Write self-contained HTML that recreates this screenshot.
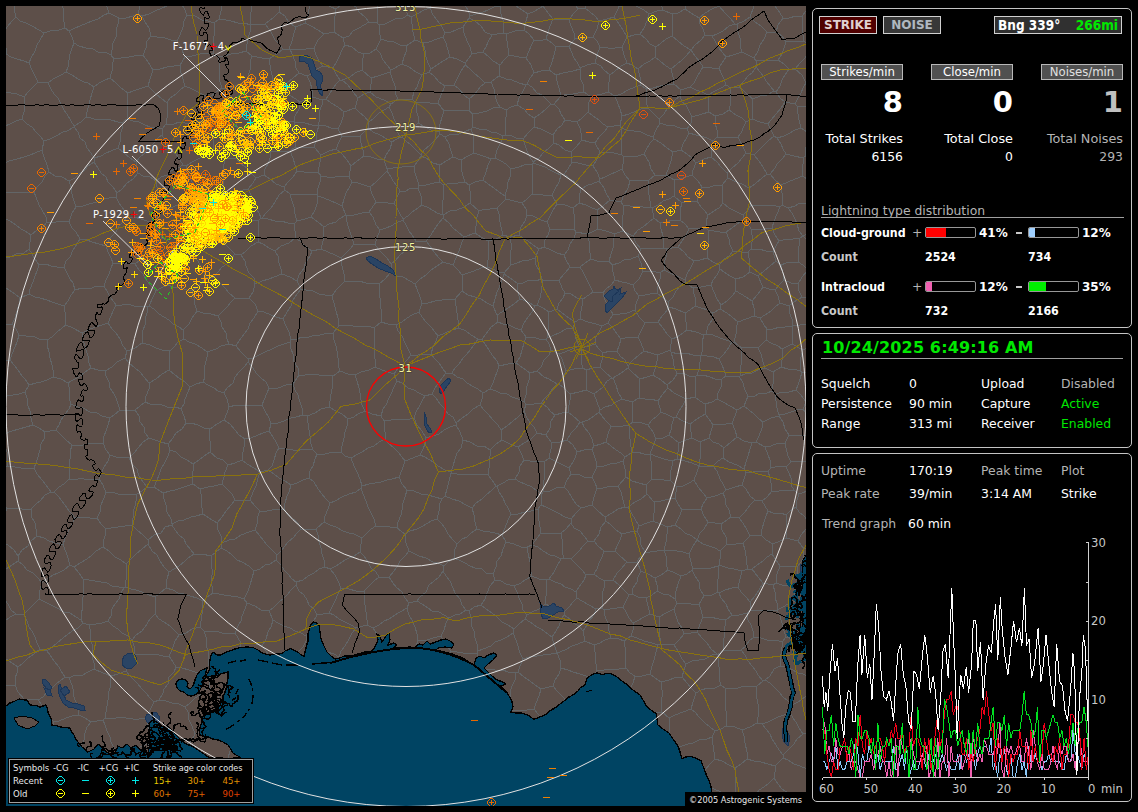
<!DOCTYPE html>
<html><head><meta charset="utf-8"><title>Lightning</title><style>
html,body{margin:0;padding:0;background:#000;}
body{width:1138px;height:812px;position:relative;overflow:hidden;font-family:"DejaVu Sans","Liberation Sans",sans-serif;color:#fff;font-size:12.4px;}
#map{position:absolute;left:6px;top:6px;width:800px;height:800px;}
.cl{font-family:"DejaVu Sans","Liberation Sans",sans-serif;font-size:10px;fill:#fff;letter-spacing:.25px;}
.rl{font-family:"DejaVu Sans","Liberation Sans",sans-serif;font-size:10px;fill:#f4f4a0;letter-spacing:.6px;paint-order:stroke;stroke:#4a3f3a;stroke-width:1.5px;}
.lg{font-family:"DejaVu Sans Condensed","DejaVu Sans","Liberation Sans",sans-serif;font-size:9.5px;fill:#e8e8e8;}
.panel{position:absolute;left:812px;width:318px;border:1px solid #c4c4c4;border-radius:5px;box-sizing:content-box;}
.t{position:absolute;white-space:nowrap;line-height:16px;height:16px;}
.g{color:#b4b4b4;}
.gr{color:#00e800;}
.b{font-weight:bold;font-family:"DejaVu Sans Condensed","DejaVu Sans","Liberation Sans",sans-serif;font-size:12.3px;}
.bb{font-weight:bold;font-family:"DejaVu Sans","Liberation Sans",sans-serif;}
.r{text-align:right;}
.btn{position:absolute;box-sizing:border-box;border:1px solid #a8a8a8;text-align:center;white-space:nowrap;}
.bar{position:absolute;box-sizing:border-box;border:1px solid #989898;border-radius:2px;overflow:hidden;height:11px;width:51px;background:#000;}
.bar i{position:absolute;left:0;top:0;bottom:0;display:block;}
.hr{position:absolute;height:1px;background:#a0a0a0;}
#gsvg{position:absolute;left:0;top:0;width:1138px;height:812px;pointer-events:none;}
#gsvg polyline{fill:none;stroke-width:1;}
#gsvg text{font-family:"DejaVu Sans","Liberation Sans",sans-serif;font-size:11.6px;fill:#c8c8c8;}
</style></head><body>
<svg id="map" viewBox="6 6 800 800" shape-rendering="crispEdges">
<clipPath id="mc"><rect x="6" y="6" width="800" height="800"/></clipPath>
<g clip-path="url(#mc)">
<rect x="6" y="6" width="800" height="800" fill="#5d4f49"/>
<path d="M833,435 827,436 818,438 811,439 M811,439 812,447 813,453 812,460 M637,531 640,537 641,545 645,552 M637,531 630,532 622,534 M645,552 640,557 637,562 M627,562 637,562 M627,562 620,556 615,551 M622,534 620,540 617,546 615,551 M339,326 345,325 353,326 360,326 368,326 374,328 M339,326 333,333 M340,371 338,365 338,358 337,351 336,346 334,340 333,333 M340,371 348,374 355,375 M355,375 361,372 369,370 375,367 M375,367 375,359 374,354 375,346 374,341 374,334 374,328 M31,235 30,242 29,249 M31,235 25,231 21,229 16,225 10,221 4,218 M29,249 24,253 16,254 10,257 5,258 -2,261 M4,218 -2,222 -6,225 -12,230 -17,232 M29,294 30,289 33,282 35,276 37,271 39,265 M29,294 35,297 40,298 47,300 52,302 58,304 64,306 M39,265 46,264 51,266 57,267 64,267 M64,267 67,273 70,279 73,283 75,290 M64,306 68,301 71,295 75,290 M20,298 15,294 9,290 2,285 -2,280 -8,276 M20,298 29,294 M29,249 32,254 35,259 39,265 M414,418 416,412 419,407 422,401 425,396 M414,418 406,420 400,419 391,420 384,421 M384,421 381,416 M381,416 383,409 386,405 389,398 391,394 394,387 397,381 M425,396 419,393 414,390 408,388 402,383 397,381 M426,438 422,431 417,425 414,418 M426,438 433,436 439,434 444,430 450,427 456,425 M456,425 456,423 M432,394 436,398 440,404 444,408 448,414 453,417 456,423 M432,394 425,396 M355,375 357,381 359,388 360,393 361,400 362,405 365,411 M375,367 382,370 388,372 394,374 M394,374 397,381 M365,411 372,414 381,416 M104,286 96,286 90,289 82,288 75,290 M104,286 108,293 111,298 116,305 M116,305 113,311 111,316 108,323 M108,323 102,325 95,327 88,330 82,333 M64,306 65,312 65,319 66,325 M66,325 73,328 82,333 M340,371 333,376 M333,333 328,333 320,335 315,335 309,337 302,337 297,339 291,339 M299,375 305,375 313,374 319,375 326,375 333,376 M299,375 298,368 294,362 293,354 291,349 290,342 M290,342 291,339 M-21,29 -16,30 -10,31 -3,32 3,33 M-16,-4 -10,-4 -4,-2 2,0 7,1 14,1 M14,1 14,9 16,17 M16,17 12,21 7,27 3,33 M14,1 17,-4 22,-9 M31,235 37,230 43,227 47,222 M47,222 46,217 42,210 39,205 36,197 34,192 M4,218 4,212 4,204 4,198 5,192 M34,192 26,192 19,193 12,192 5,192 M5,192 1,187 -4,182 M218,816 214,813 208,808 203,803 199,800 195,797 190,792 M229,816 228,809 228,803 229,798 230,792 229,785 229,779 M229,779 224,773 220,769 M220,769 214,774 209,777 206,780 201,785 195,789 190,792 M174,818 176,811 177,805 178,799 179,792 M190,792 179,792 M514,629 513,633 M514,629 508,625 502,622 497,617 492,613 486,609 481,605 M478,651 483,649 491,646 495,642 501,640 507,637 513,633 M478,651 477,644 475,638 474,631 471,625 471,617 469,611 M481,605 474,607 469,611 M532,576 525,580 521,583 514,586 M532,576 530,568 530,562 528,553 527,547 M514,586 506,584 501,581 495,580 M493,574 495,580 M493,574 496,567 497,561 501,556 503,549 506,542 M527,547 521,547 514,544 506,542 M596,609 602,608 M596,609 589,605 582,601 577,598 M602,608 603,602 602,595 604,588 605,581 M577,598 576,592 M576,592 579,587 584,580 586,575 M605,581 599,578 594,574 M594,574 586,575 M627,562 621,569 617,573 613,580 M613,580 605,581 M604,551 615,551 M604,551 602,557 599,563 597,569 594,574 M678,771 684,775 688,782 M678,771 672,772 666,772 661,774 653,773 648,774 642,776 M642,776 638,781 M638,781 639,788 643,794 644,799 645,806 M669,814 664,812 657,810 652,807 645,806 M669,814 675,810 681,809 M681,809 682,801 684,796 686,788 688,782 M792,799 789,807 787,812 785,819 M792,799 788,793 782,789 778,784 774,778 M751,799 755,803 758,808 761,813 766,819 769,823 M751,799 755,796 759,790 764,787 769,783 774,778 M827,816 824,810 819,804 815,799 811,793 M811,793 805,795 799,796 792,799 M681,150 687,154 692,158 696,163 M681,150 683,144 686,139 689,133 M689,133 696,135 701,136 707,138 713,141 M696,163 704,159 711,157 M713,141 711,149 711,157 M692,175 693,170 696,163 M692,175 698,181 702,187 M702,187 710,187 716,185 722,185 M722,185 728,178 M728,178 727,173 M727,173 721,167 717,162 711,157 M811,439 808,435 M808,435 810,428 811,420 M811,420 817,418 823,416 829,415 835,414 M814,678 808,677 803,674 798,673 791,669 786,667 780,666 M822,649 816,647 811,646 804,643 798,640 792,639 787,637 M780,666 780,659 781,654 782,647 782,642 M782,642 786,637 M787,637 786,637 M817,690 810,694 805,697 798,702 792,705 M792,705 788,701 783,697 779,692 774,687 770,683 765,680 M765,680 770,676 774,669 780,666 M811,612 816,616 821,621 827,625 M811,612 806,618 801,623 797,627 792,633 787,637 M815,463 813,470 812,476 810,483 810,490 M831,499 824,496 816,493 810,490 M808,435 801,435 796,436 789,435 M789,435 785,443 M812,460 805,462 798,461 791,462 M785,443 786,448 788,456 791,462 M772,491 771,483 770,478 768,471 M772,491 779,491 787,490 794,490 M794,490 791,485 791,478 789,473 786,467 M786,467 779,466 771,468 M768,471 771,468 M810,490 799,494 M799,494 794,490 M791,462 786,467 M785,443 778,443 771,446 765,447 M765,447 768,455 770,460 771,468 M655,578 661,575 668,570 M655,578 648,574 641,571 M645,552 650,552 657,551 664,550 M641,571 637,562 M668,570 666,564 666,556 664,550 M604,610 602,608 M604,610 610,609 617,608 623,607 M613,580 619,585 623,589 629,595 M623,607 626,601 629,595 M641,571 638,577 637,582 633,588 632,594 M632,594 629,595 M611,638 605,640 600,643 594,645 M611,638 619,639 624,641 M594,645 595,652 595,658 596,664 597,671 M597,671 604,670 612,669 619,669 626,668 M624,641 625,647 626,654 625,661 626,668 M611,638 609,631 608,624 605,616 604,610 M633,623 629,618 626,612 623,607 M633,623 633,630 631,636 M624,641 631,636 M750,610 756,610 762,610 770,611 777,610 M750,610 747,613 M782,642 776,640 767,640 761,638 754,637 M786,637 784,631 782,623 780,616 777,610 M754,637 753,631 751,625 748,620 747,613 M777,610 777,610 M756,442 765,447 M756,442 752,443 M746,473 744,469 M746,473 753,472 761,471 768,471 M752,443 750,449 748,456 746,462 744,469 M622,534 616,530 611,525 606,521 M604,551 598,546 594,541 M594,541 599,534 601,527 606,521 M394,374 398,368 403,364 407,360 411,355 M374,328 381,322 M381,322 388,324 396,325 M411,355 408,349 405,343 402,336 398,331 396,325 M782,349 778,346 771,343 766,340 M782,349 792,344 M766,340 767,329 M792,344 793,335 792,326 M792,326 785,327 780,327 773,329 767,329 M593,292 583,299 M593,292 590,286 587,280 583,272 580,267 M559,280 565,273 570,267 M559,280 562,288 565,293 M565,293 571,294 577,298 583,299 M580,267 570,267 M147,306 147,313 145,319 145,325 143,330 142,336 142,343 M147,306 141,306 134,306 128,304 122,305 116,305 M108,323 112,329 116,333 120,339 123,346 127,351 M142,343 135,348 127,351 M184,339 183,330 M184,339 178,342 174,347 170,351 M147,306 149,306 M149,306 154,309 159,314 164,317 169,320 173,324 179,327 183,330 M142,343 150,345 156,348 162,350 170,351 M82,333 83,340 85,346 86,350 88,356 89,363 91,368 M105,371 98,370 91,368 M105,371 112,367 117,362 125,358 M125,358 127,351 M333,376 332,381 332,389 331,394 330,401 329,407 M365,411 358,414 354,417 348,419 M348,419 342,414 336,411 329,407 M299,375 293,384 M293,384 295,390 298,395 300,402 302,408 303,415 M303,415 307,416 M329,407 321,409 315,413 307,416 M348,419 347,426 345,432 344,438 342,446 341,452 M307,416 308,423 309,430 310,436 311,444 313,450 M341,452 333,452 325,454 317,454 M317,454 313,450 M106,493 103,485 99,479 M106,493 103,500 101,505 100,512 97,518 M99,479 92,479 87,480 81,478 75,480 69,479 M97,518 90,518 82,517 75,518 M75,518 70,512 67,508 62,501 59,497 54,492 M69,479 64,484 59,487 54,492 M129,458 132,464 137,469 139,476 143,482 147,487 M129,458 122,457 116,457 110,455 M110,455 108,461 104,467 101,474 99,479 M147,487 142,491 137,494 M137,494 132,494 124,494 118,494 112,492 106,493 M105,528 111,528 118,527 125,526 132,525 M105,528 101,524 97,518 M137,494 136,501 135,506 133,512 133,518 132,525 M-21,689 -14,688 -6,687 1,687 8,685 15,685 M15,685 18,692 24,699 M-15,718 -8,720 -4,724 3,727 8,729 M24,699 22,705 18,711 15,717 12,723 8,729 M20,298 19,304 17,311 15,318 12,324 M-15,324 -8,323 -1,324 7,325 12,324 M71,404 78,407 83,408 90,412 97,413 102,416 110,418 M71,404 69,409 65,414 61,420 59,425 56,430 M56,430 62,436 66,440 72,445 M72,445 79,445 83,445 91,443 97,443 103,443 M103,443 104,436 106,431 108,425 110,418 M120,410 118,404 116,398 114,394 110,388 109,382 106,376 105,371 M120,410 114,415 110,418 M68,383 73,380 79,377 85,372 91,368 M68,383 70,390 69,398 71,404 M110,455 106,450 103,443 M69,479 70,472 69,466 70,459 70,452 72,445 M135,410 139,416 140,422 144,427 145,433 149,438 M135,410 128,410 120,410 M149,438 143,442 138,448 134,453 129,458 M295,801 295,808 295,814 295,821 M295,801 289,798 286,794 281,789 276,786 270,781 266,778 M271,826 265,822 259,817 253,812 M253,812 255,805 258,799 260,791 263,784 266,778 M229,816 235,815 241,813 247,814 253,812 M229,779 236,778 243,778 252,778 258,778 265,778 M265,778 266,778 M135,654 141,655 150,654 155,654 163,656 169,656 M135,654 134,646 132,640 M132,640 136,635 142,631 147,624 150,619 155,614 M155,614 159,619 164,622 170,626 175,631 179,635 M179,635 175,641 172,650 169,656 M231,666 224,668 218,671 211,672 M231,666 237,671 243,674 250,678 256,681 M256,681 253,687 248,694 246,702 M246,702 238,703 231,703 222,703 M211,672 209,675 M209,675 209,687 M222,703 218,696 213,691 209,687 M330,503 328,509 325,516 324,522 M330,503 325,498 322,494 318,489 314,482 309,478 M309,478 303,480 297,483 291,485 M291,485 289,492 287,496 285,503 284,509 M301,529 298,523 292,518 288,515 284,509 M301,529 308,530 316,529 M316,529 324,522 M362,538 354,534 349,533 343,531 336,527 330,525 324,522 M362,538 361,544 360,552 M360,552 354,556 347,559 342,562 336,566 330,569 M316,529 318,535 319,542 321,548 322,554 324,560 325,567 M325,567 330,569 M384,421 384,427 385,432 385,439 M341,452 345,456 351,458 M385,439 379,442 374,446 368,448 362,452 358,454 351,458 M426,438 425,444 423,449 420,455 M420,455 413,458 405,461 M385,439 389,444 393,447 398,452 402,457 405,461 M547,580 546,588 546,596 545,604 M547,580 549,579 M549,579 555,582 561,584 565,587 571,589 576,592 M577,598 573,602 569,607 564,612 M564,612 557,610 550,606 545,604 M547,580 539,579 532,576 M514,586 517,592 519,598 522,604 523,610 527,615 M545,604 539,609 532,612 527,615 M514,629 519,624 525,619 M495,580 490,586 487,593 485,599 481,605 M527,615 525,619 M446,785 441,782 435,777 430,773 425,768 M446,785 445,791 443,797 441,804 439,811 M425,768 423,773 420,779 416,785 414,790 411,795 408,800 M439,811 434,810 427,810 421,812 415,811 M415,811 409,806 M409,806 408,800 M409,867 409,861 410,855 412,848 411,842 413,835 413,830 413,823 414,818 415,811 M378,817 384,815 391,813 397,810 402,809 409,806 M439,811 444,815 449,819 455,825 M583,631 585,641 M583,631 579,626 573,623 570,619 564,615 M585,641 578,644 572,646 565,650 557,653 M564,615 561,620 559,626 556,631 552,637 M557,653 554,644 552,637 M596,609 594,615 589,621 587,625 583,631 M594,645 585,641 M564,612 564,615 M525,619 530,622 537,627 541,629 548,634 552,637 M523,659 520,653 518,646 516,640 513,633 M523,659 529,657 537,656 543,655 551,654 557,653 M557,653 557,653 M179,792 174,786 M174,786 166,785 161,783 153,782 M153,782 148,784 M148,784 146,791 143,796 140,801 137,806 134,812 M75,836 77,829 82,824 84,817 87,811 92,806 95,800 M116,816 112,811 105,808 100,804 95,800 M39,819 43,813 44,807 47,800 50,795 53,788 M53,788 53,788 M53,788 59,789 68,792 73,791 80,795 86,795 94,797 M94,797 95,800 M678,771 678,764 676,759 676,753 676,747 M676,747 669,739 M642,776 642,769 641,761 642,754 641,748 M641,748 647,745 654,744 663,742 669,739 M628,695 621,697 614,700 609,703 602,705 M628,695 630,689 633,683 635,676 M597,671 592,679 M602,705 598,700 593,694 M635,676 630,673 626,668 M592,679 593,686 593,694 M557,653 560,660 561,668 M592,679 586,676 580,674 573,672 568,670 561,668 M715,759 710,764 705,770 701,775 696,780 M715,759 722,761 729,765 735,768 M696,780 701,784 708,786 714,789 721,792 727,795 733,798 M735,768 735,775 736,783 735,791 736,797 M736,797 733,798 M712,737 707,739 699,740 693,743 688,744 682,746 676,747 M712,737 713,745 714,752 715,759 M688,782 696,780 M726,726 735,727 742,730 M726,726 721,729 715,731 M715,731 712,737 M742,730 744,736 745,743 747,752 747,759 M747,759 741,764 735,768 M722,820 725,815 728,809 730,803 733,798 M702,824 697,819 691,816 685,813 681,809 M751,799 743,798 736,797 M774,778 775,772 775,766 M747,759 754,761 761,762 768,764 775,766 M689,133 687,129 M713,141 717,137 M709,112 702,114 692,117 M709,112 715,116 M717,137 717,130 715,123 715,116 M687,129 691,123 692,117 M622,231 623,226 622,219 624,211 623,205 M622,231 633,236 M633,236 638,230 643,227 649,222 654,218 M623,205 630,206 638,206 643,207 650,207 M650,207 652,208 M654,218 652,208 M697,201 688,201 682,203 M697,201 699,193 702,187 M692,175 686,177 680,179 674,180 M674,180 675,188 674,196 M682,203 674,196 M339,326 338,318 336,311 334,303 332,296 M291,339 289,332 286,326 283,319 M332,296 325,295 319,294 313,291 306,290 301,289 M301,289 297,294 293,300 291,306 287,312 283,319 M248,359 241,352 236,346 M248,359 253,358 259,355 265,352 272,349 278,346 284,344 290,342 M236,346 239,341 244,334 248,329 250,323 254,318 258,311 M283,319 276,317 271,315 264,312 258,311 M381,322 382,315 381,309 380,303 380,298 379,289 379,284 M332,296 336,290 340,286 345,281 M345,281 351,282 359,281 366,283 372,283 379,284 M34,192 37,187 42,182 45,176 49,172 M-3,167 3,164 9,161 17,159 24,157 30,155 35,153 42,150 M49,172 47,165 44,157 42,150 M740,376 740,369 742,361 741,355 742,348 M740,376 745,374 752,373 758,370 765,368 M765,368 763,362 761,354 758,348 M742,348 750,347 758,348 M792,344 803,350 M803,350 810,346 817,343 M793,325 792,326 M793,325 800,325 807,324 813,325 M756,442 759,436 762,428 763,422 M789,435 785,429 783,422 779,416 M779,416 771,418 763,422 M811,420 807,415 803,409 M803,409 797,410 791,412 785,414 779,415 M779,416 779,415 M796,390 789,392 783,392 775,394 M796,390 798,385 800,379 802,372 M800,371 802,372 M800,371 794,369 788,369 781,367 M781,367 773,372 M773,372 773,379 773,384 772,391 M772,391 775,394 M803,409 806,402 M806,402 801,395 796,390 M779,415 777,408 776,401 775,394 M782,349 782,356 782,360 781,367 M803,350 801,357 800,363 800,371 M766,340 758,348 M765,368 773,372 M806,402 812,399 817,397 822,394 M802,372 810,373 818,374 M824,574 818,571 813,567 808,563 803,559 M803,559 804,549 M819,546 813,547 804,549 M633,623 639,620 644,617 650,614 M632,594 638,597 646,598 M650,614 648,606 646,598 M655,578 657,585 657,591 M657,591 652,595 646,598 M641,748 633,741 627,737 M627,737 630,731 635,726 640,719 643,713 M643,713 649,713 655,713 662,712 M669,739 670,733 669,725 669,718 M662,712 669,718 M715,731 710,727 705,723 699,717 696,713 691,709 M669,718 675,715 683,712 691,709 M765,680 763,681 M754,637 749,641 745,647 741,650 M741,650 745,655 748,661 752,666 756,671 758,675 763,681 M726,726 726,720 727,714 725,708 726,702 725,696 726,689 M742,730 750,727 757,723 M757,723 758,717 758,711 758,704 757,699 756,693 757,686 M757,686 751,687 744,686 738,688 732,688 726,689 M691,709 693,702 696,693 M696,693 701,690 708,688 715,688 721,685 M726,689 721,685 M668,570 675,573 681,576 M664,550 664,550 M664,550 671,550 677,551 683,552 689,554 M689,554 691,562 693,569 M693,569 692,570 M681,576 687,574 692,570 M657,591 663,594 669,595 675,599 M681,576 678,584 676,591 675,599 M738,587 740,579 742,571 M738,587 732,588 725,590 719,593 M718,566 719,565 M718,566 718,572 718,579 717,585 718,592 M742,571 734,569 728,568 719,565 M719,593 718,592 M750,610 750,602 M750,602 747,598 741,592 738,587 M747,613 739,615 732,615 M719,593 721,598 726,604 728,609 732,615 M718,566 711,568 706,568 699,568 693,569 M692,570 695,576 699,582 700,589 704,596 M718,592 712,595 704,596 M675,599 677,603 M677,603 685,603 691,604 699,604 M704,596 699,604 M631,636 637,638 644,641 652,643 658,645 M635,676 642,676 650,674 M658,645 656,652 654,660 652,666 650,674 M662,712 661,704 662,697 662,690 661,682 M696,693 691,688 687,683 682,677 M682,677 674,678 669,680 661,682 M628,695 633,701 637,708 643,713 M650,674 655,678 661,682 M811,612 811,610 M777,610 783,607 788,604 795,601 M795,601 801,605 805,607 811,610 M811,610 814,604 819,598 M803,559 798,566 M816,586 810,585 804,583 798,583 M798,566 797,574 798,583 M795,601 794,593 795,587 M798,583 795,587 M637,531 639,526 M664,550 666,542 667,534 668,527 M639,526 647,523 653,521 M653,521 660,524 668,527 M586,575 582,570 577,565 571,559 M594,541 588,541 M588,541 583,546 580,550 575,555 571,559 M396,325 402,322 407,318 412,315 419,312 M415,284 417,289 420,297 422,303 M415,284 410,281 403,277 396,276 391,272 M379,284 385,279 391,272 M419,312 422,303 M697,201 701,207 704,210 708,215 M722,185 723,192 722,197 723,203 M723,203 719,208 714,211 708,215 M767,329 764,325 760,318 M734,342 736,334 736,328 738,322 M734,342 742,348 M760,318 754,316 M738,322 746,319 754,316 M736,291 732,296 727,301 721,305 M736,291 741,294 746,297 752,301 M738,322 732,317 727,313 720,309 M754,316 754,308 752,301 M721,305 720,309 M829,289 824,285 820,279 815,274 811,270 M814,300 807,298 802,297 M811,270 808,270 M808,270 802,277 798,284 M802,297 799,291 798,284 M793,325 792,319 789,312 789,306 M802,297 794,302 789,306 M760,318 765,315 771,311 775,307 780,303 M789,306 780,303 M781,185 782,193 782,199 782,205 M781,185 775,180 770,174 M770,174 767,174 M767,174 762,178 755,184 749,188 M749,188 749,196 751,205 M751,205 759,205 765,205 772,205 780,207 M782,205 780,207 M728,178 734,181 742,184 749,188 M723,203 729,208 737,212 743,215 M743,215 748,210 751,205 M573,328 566,329 559,333 554,335 547,338 M573,328 575,322 M575,322 569,318 562,313 557,309 M547,338 548,330 548,324 548,317 549,312 M557,309 549,312 M580,319 581,311 582,306 583,299 M580,319 575,322 M565,293 563,298 559,303 557,309 M559,280 551,280 543,280 M543,280 542,286 541,293 540,298 537,305 M537,305 543,308 549,312 M740,376 739,376 M772,391 767,393 760,393 755,396 748,396 M739,376 743,383 745,390 748,396 M763,422 759,419 754,414 749,410 744,406 M748,396 744,406 M594,394 597,402 600,410 M594,394 598,391 603,387 607,381 612,378 M600,410 605,407 612,405 616,402 622,399 M622,399 618,392 616,385 613,378 M613,378 612,378 M504,274 510,278 517,283 M504,274 502,280 499,288 497,292 495,299 493,306 M517,283 518,292 520,299 M520,299 514,304 508,308 502,312 497,315 M497,315 493,306 M535,258 536,265 540,272 542,279 M535,258 529,260 522,261 517,263 511,265 M511,265 504,273 M504,273 504,274 M542,279 535,281 529,280 523,283 517,283 M462,291 462,283 462,275 M462,291 468,295 475,297 481,299 487,303 493,306 M462,275 468,273 474,271 481,268 487,267 M487,267 493,269 498,272 504,273 M543,280 542,279 M535,306 537,305 M535,306 528,302 520,299 M546,339 547,338 M546,339 549,344 551,350 M551,350 559,354 M573,328 575,334 576,339 579,346 M559,354 565,352 572,349 579,346 M135,410 140,406 145,402 M125,358 129,363 135,368 140,372 144,377 149,383 M145,402 146,396 149,389 149,383 M170,351 169,358 169,364 169,370 M149,383 156,379 162,374 169,370 M47,222 56,222 62,221 69,222 M64,267 66,261 70,257 73,250 77,244 80,239 M69,222 72,228 76,232 80,239 M293,384 286,385 278,388 269,388 M248,359 248,362 M269,388 266,382 261,378 256,373 253,368 248,362 M309,478 310,471 313,466 315,459 317,454 M313,450 306,449 300,450 293,450 286,449 279,448 M291,485 285,481 279,478 274,474 268,470 M279,448 276,453 274,460 272,466 268,470 M446,373 452,373 M446,373 443,369 439,363 435,359 431,354 M452,373 455,368 459,364 463,358 466,355 471,349 474,345 478,339 M431,354 433,347 435,343 438,336 M438,336 445,333 452,330 459,328 M478,339 471,335 466,331 459,328 M432,394 435,388 438,384 442,378 446,373 M480,405 473,409 468,414 462,418 456,423 M480,405 482,399 483,393 M483,393 478,389 474,387 467,383 463,379 457,377 452,373 M411,355 418,355 424,354 431,354 M419,312 422,317 426,322 431,327 435,332 438,336 M455,299 448,299 442,300 435,301 428,303 422,303 M455,299 456,306 457,313 458,320 459,328 M462,291 455,299 M497,315 498,322 M478,339 482,339 M498,322 491,327 486,334 482,339 M535,306 532,312 528,317 524,323 521,330 M498,322 503,324 509,325 515,328 521,330 M546,339 539,339 533,337 526,337 M521,330 526,337 M15,685 15,678 17,673 18,667 M18,667 12,663 6,659 0,656 -5,652 -9,649 -16,645 M105,528 106,534 103,541 103,547 M103,547 96,551 91,556 87,559 80,563 74,567 M74,567 70,565 M75,518 72,524 68,532 65,538 63,545 M63,545 66,552 68,558 70,565 M125,587 124,588 M125,587 131,589 136,590 142,592 149,595 155,597 M132,640 128,636 122,633 118,629 113,626 108,621 M155,597 155,605 155,614 M108,621 111,616 112,609 115,604 119,599 121,593 124,588 M126,564 121,560 115,557 109,551 103,547 M126,564 126,572 126,580 125,587 M74,567 79,573 83,579 M124,588 119,587 112,586 107,583 101,582 95,581 89,580 83,579 M25,392 19,394 13,395 7,396 0,398 -5,401 -12,401 M25,392 27,398 28,406 30,411 31,418 33,425 M33,425 26,427 19,429 12,431 4,434 M-9,427 -2,430 4,434 M45,432 44,439 41,444 40,450 38,457 36,463 34,468 M45,432 56,430 M54,492 51,492 M51,492 46,485 42,480 37,474 34,468 M45,432 39,428 33,425 M4,434 5,440 5,447 7,452 7,460 8,466 M34,468 26,468 21,468 15,467 8,466 M8,466 2,469 -2,475 -8,479 M28,743 24,740 18,736 13,733 8,730 M28,743 27,750 27,754 26,762 25,767 24,774 M8,730 6,734 1,739 -1,745 -5,749 -9,756 -12,760 M24,774 16,777 11,779 5,780 -2,783 M8,729 8,730 M53,788 48,786 40,783 35,780 30,777 24,774 M6,813 5,807 3,801 1,794 -1,789 -2,783 M135,654 133,660 129,665 126,671 M94,669 103,673 111,676 M94,669 94,663 92,657 93,650 92,644 90,639 91,632 89,625 M89,625 96,624 102,623 108,621 M126,671 118,674 111,676 M47,340 47,345 49,352 50,358 52,365 53,370 53,377 M47,340 39,339 33,336 26,336 19,335 M19,335 17,342 15,347 12,354 10,360 M10,360 14,365 18,370 22,376 25,379 29,385 M29,385 36,383 41,382 47,380 53,377 M66,325 62,328 57,332 52,337 47,340 M68,383 61,379 53,377 M12,324 16,329 19,335 M-14,367 -8,366 -2,364 3,361 10,360 M25,392 29,385 M337,813 338,805 339,798 M295,801 299,796 305,792 308,787 313,781 M339,798 335,796 328,791 324,788 318,785 313,781 M174,786 175,779 178,775 180,769 182,763 184,757 186,750 187,744 M148,744 149,751 150,757 150,763 151,770 153,775 153,782 M148,744 152,737 M187,744 181,744 175,741 170,740 165,739 158,739 152,737 M209,675 202,674 195,672 189,670 182,668 176,667 M176,667 174,672 169,677 168,684 164,689 163,693 159,700 M209,687 204,691 200,695 195,698 190,703 185,707 M185,707 179,704 172,703 166,701 159,700 M126,671 130,676 134,680 137,683 142,689 147,694 149,697 154,702 M111,676 110,681 110,688 108,695 108,700 107,706 106,712 105,718 M105,718 112,719 120,717 126,718 133,719 139,719 147,718 M147,718 150,710 154,702 M176,667 173,662 169,656 M159,700 154,702 M169,572 174,569 179,566 185,561 188,558 194,554 M169,572 164,567 160,561 157,555 152,551 148,544 M194,554 191,550 186,544 184,539 179,535 175,530 172,525 M172,525 165,527 161,533 154,535 148,540 M148,544 148,540 M126,564 131,559 136,554 142,549 148,544 M166,588 167,579 169,572 M166,588 160,593 155,597 M147,487 154,487 M132,525 137,530 143,535 148,540 M172,524 172,525 M172,524 171,519 167,512 166,505 164,499 163,493 M163,493 154,487 M301,529 296,534 294,537 288,542 284,547 282,550 277,555 M277,555 271,549 267,545 263,540 260,536 255,530 M284,509 279,509 272,510 267,511 260,511 M255,530 257,524 257,518 260,511 M211,556 202,554 194,554 M211,556 216,552 221,548 M221,548 222,543 M203,514 209,518 217,523 M203,514 196,516 191,517 184,520 178,521 172,524 M217,523 218,530 221,536 222,543 M453,687 458,684 465,680 472,678 479,674 M453,687 448,682 445,675 440,670 M477,653 480,661 482,669 M477,653 470,653 463,653 457,652 451,651 M482,669 479,674 M440,670 444,664 448,658 451,651 M478,651 477,653 M466,610 469,611 M466,610 460,614 455,615 449,618 M449,618 446,623 444,630 441,636 M441,636 445,644 451,651 M356,697 365,697 372,695 380,696 M356,697 353,703 349,710 346,715 M346,715 351,719 357,725 362,729 366,733 372,738 M372,738 377,734 382,729 389,727 M380,696 382,701 384,709 385,714 388,721 389,727 M389,577 393,583 396,587 402,592 405,598 409,603 M389,577 394,571 397,567 400,561 406,555 409,551 M409,551 415,554 419,556 426,558 433,562 438,563 444,566 M417,601 409,603 M417,601 420,597 426,592 429,585 434,581 439,577 443,571 M443,571 444,566 M457,544 453,540 448,534 445,528 441,523 437,519 M457,544 454,552 454,558 M437,519 431,521 423,526 417,529 410,531 405,534 M405,534 406,543 409,551 M454,558 448,562 444,566 M449,618 444,615 439,612 432,611 428,608 422,604 417,601 M407,608 409,603 M407,608 409,615 412,620 415,627 417,634 418,641 M418,641 427,640 433,638 441,636 M466,610 462,605 460,599 455,593 453,588 450,581 446,576 443,571 M454,558 459,560 465,563 470,566 475,568 482,569 486,573 493,574 M231,666 234,661 236,655 239,650 241,643 M211,672 209,666 208,659 208,651 206,645 206,637 204,631 M241,643 235,633 M235,633 229,633 222,633 216,631 210,632 204,631 M179,635 186,633 192,629 200,627 M200,627 204,631 M166,588 173,590 178,593 184,594 190,596 197,598 203,601 M200,627 201,621 202,614 202,608 203,601 M211,556 211,562 212,569 212,575 211,580 212,586 213,593 M203,601 207,597 213,593 M269,611 261,610 255,606 247,603 M269,611 273,608 279,602 283,599 288,594 291,590 296,585 M254,571 260,569 265,565 270,564 276,560 M254,571 252,578 250,585 248,591 244,599 M244,599 247,603 M276,560 281,565 284,570 288,574 292,579 296,582 M296,582 296,585 M241,643 248,643 256,644 262,646 M262,646 266,639 268,632 271,627 273,620 M273,620 269,611 M235,633 238,626 241,621 242,616 245,609 247,603 M306,636 301,633 295,631 290,628 284,626 278,623 273,620 M306,636 310,630 313,622 317,615 M317,615 314,609 309,605 307,600 304,595 299,591 296,585 M221,548 227,551 232,555 237,560 242,562 249,566 254,571 M277,555 276,560 M255,530 249,532 241,535 235,539 229,540 222,543 M213,593 219,594 224,595 231,596 238,597 244,599 M325,567 319,569 314,573 308,576 303,580 296,582 M282,690 276,685 269,681 263,678 M282,690 288,687 296,684 303,680 M303,680 301,673 300,667 298,661 297,653 M297,653 291,655 283,654 277,655 270,657 M263,678 265,671 268,664 270,657 M256,681 263,678 M246,702 249,708 254,715 256,721 261,727 M261,727 268,725 275,722 282,721 M282,721 283,715 283,708 283,703 282,695 282,690 M307,639 303,647 297,653 M307,639 312,642 318,645 322,649 327,652 334,654 339,657 M317,687 310,684 303,680 M317,687 322,682 328,677 334,675 341,670 M339,657 341,668 M341,670 341,668 M306,636 307,639 M262,646 266,651 270,657 M364,591 364,599 365,605 366,612 367,620 367,625 M364,591 356,591 349,589 341,588 M341,588 338,594 335,601 332,607 329,613 M329,613 334,615 339,619 345,622 351,625 356,628 M356,628 367,625 M379,577 374,581 369,586 364,591 M379,577 389,577 M407,608 400,612 395,615 389,619 384,621 379,625 373,628 M373,628 367,625 M379,577 376,572 371,568 368,562 364,556 360,552 M330,569 335,575 338,581 341,588 M317,615 329,613 M339,657 341,651 345,646 348,641 352,633 356,628 M407,490 402,484 399,477 M407,490 405,497 403,503 402,510 401,515 398,522 397,528 M399,477 392,479 387,480 381,482 375,483 369,484 362,486 M397,528 390,527 382,526 376,526 M376,526 374,519 371,513 368,507 366,501 363,494 361,488 M361,488 362,486 M437,519 439,511 439,505 442,499 M405,534 397,528 M442,499 435,497 428,495 421,494 414,491 407,490 M405,461 402,470 399,477 M351,458 354,466 357,472 360,479 362,486 M362,538 366,534 371,529 376,526 M330,503 335,501 342,497 349,494 356,492 361,488 M457,544 462,539 467,537 471,533 477,529 M442,499 445,496 M445,496 452,499 459,501 466,505 472,508 M472,508 474,515 475,522 477,529 M506,542 502,535 M477,529 483,531 490,532 495,533 502,535 M465,780 458,781 453,783 446,785 M465,780 470,783 M476,815 475,808 474,803 472,796 470,789 470,783 M470,783 478,781 484,780 492,778 499,776 M499,776 507,783 M507,783 506,789 504,795 501,803 500,810 498,816 M634,816 639,811 645,806 M811,793 813,787 816,781 818,774 M775,766 783,758 M783,758 788,760 794,764 800,766 807,769 812,771 818,774 M790,712 784,715 778,717 774,719 768,722 762,724 M790,712 793,718 796,722 799,728 803,734 M762,724 766,729 770,734 772,739 776,745 779,750 783,755 M803,734 797,739 794,744 788,750 783,755 M792,705 790,712 M757,723 762,724 M763,681 757,686 M822,735 816,735 809,733 803,734 M783,758 783,755 M615,780 623,779 630,781 638,781 M615,780 612,774 611,768 607,762 606,757 603,751 M627,737 618,736 610,737 M603,751 607,744 610,737 M602,705 601,711 602,717 602,723 M610,737 606,730 602,723 M593,694 587,697 581,698 574,699 567,702 M561,668 559,674 555,680 553,686 M553,686 557,691 563,697 567,702 M602,723 596,724 591,724 584,725 577,726 571,728 566,729 559,729 M567,702 564,709 562,716 561,722 559,729 M576,761 572,755 569,749 565,742 561,737 558,730 M576,761 583,757 589,755 596,752 603,751 M559,729 558,730 M531,822 533,815 535,810 536,805 539,798 M507,783 514,783 521,782 529,781 M539,798 536,791 532,787 529,781 M655,175 666,175 M655,175 651,169 649,162 644,154 M666,175 669,167 671,161 673,152 M673,152 667,148 661,143 654,139 M654,139 650,143 646,150 644,154 M648,181 648,188 649,195 650,201 650,207 M648,181 655,175 M674,180 666,175 M652,208 658,205 663,201 669,199 674,196 M681,150 673,152 M687,129 680,128 672,125 666,125 660,123 M654,139 653,137 M653,137 656,130 660,123 M591,97 588,105 588,112 M591,97 597,95 602,94 608,92 M588,112 593,116 599,120 603,124 608,127 M608,127 620,125 M622,116 620,125 M622,116 620,109 618,104 615,96 M608,92 615,96 M654,218 660,223 M682,203 680,210 680,220 M660,223 666,222 673,220 680,220 M708,215 706,222 706,228 M706,228 699,228 689,229 M689,229 685,224 680,220 M727,173 731,169 738,163 742,158 746,153 M767,174 763,167 759,161 754,155 M746,153 754,155 M717,137 725,137 731,137 738,137 M746,153 743,147 741,143 738,137 M729,110 723,114 715,116 M729,110 736,115 742,118 746,122 M738,137 741,133 744,126 746,122 M824,129 815,132 807,132 M827,157 819,156 813,156 805,156 M807,132 806,141 806,147 805,156 M803,176 795,179 788,182 781,185 M803,176 802,171 803,164 803,158 M770,174 775,168 777,164 782,159 786,154 M786,154 794,156 803,158 M814,185 808,180 803,176 M803,158 805,156 M809,7 815,9 820,13 825,16 M809,7 808,0 M808,0 813,-7 817,-13 M824,81 816,83 806,83 M813,49 809,53 804,59 800,63 795,69 M806,83 802,75 795,69 M809,7 802,16 M813,49 804,41 M802,16 803,23 802,27 803,35 804,41 M778,60 784,64 789,69 M778,60 782,54 784,48 786,42 M789,69 795,69 M804,41 797,41 792,41 786,42 M808,0 801,-3 794,-6 789,-8 782,-12 M750,17 755,22 761,26 767,32 M750,17 754,6 M754,6 759,4 766,1 772,-1 M772,-1 775,6 780,13 783,18 M783,18 778,25 776,32 M767,32 776,32 M735,24 730,18 725,13 719,6 M735,24 737,24 M737,24 744,21 750,17 M744,-7 749,0 754,6 M719,6 719,-2 721,-9 M802,16 796,16 789,18 783,18 M786,42 782,36 776,32 M644,154 638,156 631,156 624,157 M621,128 627,130 634,131 641,132 647,135 653,137 M621,128 622,134 621,142 621,148 622,155 M624,157 622,155 M608,92 609,82 610,75 M615,96 621,94 628,90 635,87 641,85 M610,75 615,71 621,66 627,63 M641,85 640,77 638,69 M638,69 632,65 627,63 M487,267 488,260 488,254 488,248 488,241 M488,241 496,239 503,235 M511,265 510,258 511,250 511,243 510,237 M510,237 503,235 M615,234 606,231 598,229 M615,234 613,241 613,248 611,254 609,261 M609,261 604,261 597,261 591,259 M591,259 590,253 589,247 589,241 587,234 M598,229 592,232 587,234 M580,267 585,263 591,259 M570,267 566,260 564,255 M587,234 576,232 M564,255 568,250 570,244 574,238 576,232 M16,17 20,21 26,23 32,26 39,30 44,33 M3,33 4,39 6,48 6,54 M44,33 40,40 37,45 35,51 31,58 29,63 M29,63 24,61 17,59 11,57 6,54 M6,54 1,59 -5,62 -10,66 -16,70 M44,33 50,31 59,30 65,28 M62,-5 62,2 63,8 63,15 64,22 65,28 M-12,131 -6,130 0,127 5,126 10,124 16,121 22,119 M-16,85 -9,87 -3,90 5,92 11,93 17,94 24,97 M22,119 24,112 24,103 24,97 M42,150 44,141 M22,119 27,124 32,127 36,132 40,136 44,141 M29,63 32,70 35,76 38,82 M24,97 28,92 33,87 38,82 M709,112 708,103 708,95 M729,110 731,102 730,96 731,88 M708,95 715,91 721,88 726,85 M731,88 726,85 M753,99 749,96 744,91 739,87 M753,99 752,105 753,113 752,119 M752,119 746,122 M731,88 739,87 M753,99 760,96 767,95 774,91 M774,91 771,87 766,81 764,77 760,72 756,67 M739,87 744,81 748,76 752,73 756,67 M737,24 738,32 740,38 740,45 742,52 M767,32 764,39 760,45 758,51 754,58 M742,52 748,55 754,58 M778,60 770,60 764,60 756,61 M776,92 780,86 782,80 785,75 789,69 M776,92 774,91 M756,67 756,61 M756,61 754,58 M735,24 729,26 723,31 717,34 712,36 M699,18 705,13 712,9 719,6 M699,18 700,24 703,29 705,35 M705,35 712,36 M672,14 672,21 672,29 672,36 M672,14 678,13 685,9 M672,36 678,41 684,46 691,50 M685,9 691,13 699,18 M705,35 701,40 695,45 691,50 M742,52 733,55 726,57 M712,36 715,41 718,47 723,53 726,57 M726,85 724,79 721,73 719,68 M726,57 722,63 719,68 M708,95 702,92 696,90 690,87 M719,68 712,68 703,67 M690,87 694,83 697,77 700,72 703,67 M672,36 666,39 661,43 656,47 M655,57 656,47 M655,57 660,61 666,66 671,69 M691,50 691,50 M671,69 677,64 682,60 686,56 691,50 M691,50 695,56 700,62 703,67 M672,14 663,10 M685,9 686,4 689,-4 M663,10 661,4 660,-2 658,-9 657,-16 M786,538 786,529 786,523 786,515 M786,538 798,541 M798,541 801,535 806,529 809,522 M809,522 804,516 799,512 796,507 M786,515 790,511 796,507 M827,521 818,521 809,522 M804,549 798,541 M799,494 797,500 796,507 M772,491 767,497 762,501 M786,515 781,513 773,513 768,511 M768,511 762,501 M742,485 744,479 746,473 M742,485 746,489 750,496 755,500 M755,500 762,501 M650,614 659,617 M677,603 674,609 M659,617 666,613 674,609 M658,645 660,644 M659,617 660,625 659,630 660,638 660,644 M732,615 726,620 M699,604 701,610 703,617 M726,620 719,619 710,617 703,617 M741,650 732,650 723,651 M726,620 725,626 724,633 724,638 723,646 723,651 M721,685 719,679 719,673 719,667 718,661 718,654 M718,654 723,651 M777,610 777,603 775,598 775,592 773,585 M795,587 789,585 782,585 776,583 M773,585 776,583 M750,602 755,596 759,590 763,583 M773,585 763,583 M798,566 788,566 780,566 M776,583 777,574 780,566 M675,525 679,517 682,510 M675,525 681,529 685,533 692,536 697,540 M682,510 689,509 694,509 701,509 M701,509 704,516 708,522 M708,522 704,529 700,533 697,540 M697,540 697,540 M653,521 654,513 654,508 654,502 M654,502 661,501 669,499 675,498 M668,527 675,525 M675,498 678,504 682,510 M689,554 693,546 697,540 M677,487 675,498 M677,487 683,486 689,483 694,480 M707,498 703,493 698,487 694,480 M707,498 703,504 701,509 M719,565 720,559 720,551 M720,551 715,548 709,546 703,544 697,540 M561,559 564,558 M561,559 555,556 550,555 543,551 538,547 532,545 M564,558 562,552 562,547 562,539 561,533 M561,533 555,534 548,533 541,533 M532,545 537,538 541,533 M549,579 554,572 557,566 561,559 M571,559 564,558 M527,547 532,545 M588,541 584,536 580,531 574,528 571,523 M571,523 566,529 561,533 M538,509 541,505 M538,509 538,515 539,521 540,527 541,533 M541,505 546,507 552,510 558,513 565,517 571,519 M571,519 571,523 M502,535 505,528 508,520 511,514 M511,514 518,514 525,512 531,511 538,509 M811,270 816,264 821,259 825,254 M706,228 708,230 M743,215 743,220 M743,220 737,224 732,228 726,232 M708,230 714,231 720,232 726,232 M734,342 732,342 M732,342 726,340 720,338 713,335 706,334 M720,309 713,313 M713,313 712,320 708,326 706,334 M736,279 730,276 724,272 720,269 M736,279 735,286 736,291 M721,305 717,299 714,292 711,285 M711,285 713,280 717,275 720,269 M708,230 709,237 708,245 707,251 707,258 M726,232 729,239 730,245 733,251 M733,251 729,256 723,260 719,265 M707,258 713,262 719,265 M640,379 639,386 639,391 639,398 M640,379 633,373 628,368 M628,368 621,373 613,378 M622,399 632,402 M632,402 639,398 M640,379 647,377 653,375 M628,368 628,366 M653,375 655,369 657,361 657,355 M657,355 651,353 644,351 M628,366 632,361 639,355 644,351 M603,293 605,300 609,308 613,314 M603,293 593,292 M613,314 608,323 M580,319 588,322 596,324 602,326 M602,326 608,323 M628,366 625,360 620,356 617,351 M638,337 629,337 621,339 M638,337 641,343 644,351 M621,339 619,346 617,351 M639,526 635,519 632,514 628,507 M654,502 647,494 M647,494 641,499 635,502 628,507 M611,426 608,434 606,442 M611,426 605,420 599,412 M599,412 594,416 588,420 582,422 M582,422 584,427 589,433 592,439 594,446 M606,442 601,444 594,446 M597,488 603,488 611,486 618,486 M597,488 594,497 592,505 M605,517 598,511 592,505 M605,517 612,513 618,509 625,507 M625,507 623,500 621,492 618,486 M581,508 576,504 572,498 568,491 564,487 M581,508 592,505 M571,474 578,474 584,477 592,477 M571,474 567,480 564,487 M592,477 595,483 597,488 M606,521 605,517 M581,508 576,513 571,519 M628,507 625,507 M752,443 744,441 737,437 M737,410 744,406 M737,410 735,416 732,423 M737,437 735,430 732,423 M557,384 549,379 544,377 537,371 M557,384 559,384 M537,371 541,367 544,360 549,355 551,350 M559,354 562,359 564,365 566,371 M566,371 563,377 559,384 M600,367 602,360 603,353 M600,367 593,368 586,370 M586,370 583,368 M583,368 581,361 582,354 581,348 M603,353 599,349 595,344 M581,348 589,346 595,344 M612,378 606,373 600,367 M617,351 610,351 603,353 M594,394 586,390 M586,390 586,383 586,377 586,370 M566,371 574,369 583,368 M570,394 579,392 586,390 M570,394 564,388 559,384 M579,346 581,348 M602,326 599,332 596,337 595,344 M608,323 613,328 617,334 621,339 M145,402 150,404 157,404 162,405 170,408 176,407 181,409 M169,370 175,375 179,378 185,382 190,387 M181,409 184,404 185,399 188,392 190,387 M207,352 216,349 221,346 229,344 M207,352 207,357 205,365 204,371 205,377 203,382 M229,344 236,346 M248,362 244,367 239,372 235,377 233,383 227,388 224,393 M224,393 218,391 214,388 208,385 203,382 M184,339 189,342 195,344 202,348 207,352 M203,382 196,384 190,387 M104,286 106,280 109,274 111,268 113,263 M80,239 87,240 92,242 99,244 106,246 M113,263 111,258 108,252 106,246 M268,470 260,472 M260,511 255,506 250,500 M260,472 258,478 256,486 253,492 250,500 M217,523 222,517 226,511 231,505 235,500 M250,500 243,500 235,500 M260,472 254,468 247,464 242,460 M235,500 232,494 227,489 222,484 M242,460 235,463 228,465 M222,484 224,477 225,472 228,465 M203,514 202,508 201,501 201,494 200,489 M222,484 214,486 208,487 200,489 M163,493 170,491 175,490 181,488 187,486 193,484 M200,489 193,484 M490,389 493,383 495,377 497,372 499,366 M490,389 496,391 500,393 507,394 512,397 518,399 524,402 M499,366 508,364 516,363 M524,402 526,395 527,386 529,380 530,373 M530,373 523,368 516,363 M483,393 490,389 M482,339 485,344 489,350 492,355 497,361 499,366 M526,337 524,343 522,350 520,357 516,363 M537,371 530,373 M-12,632 -7,628 -0,624 5,621 10,617 16,614 M16,614 11,610 8,604 5,600 -0,594 -3,589 -7,585 -11,579 M18,556 22,550 28,546 31,541 37,536 M18,556 14,550 8,545 3,542 -2,535 -6,531 M37,536 36,529 35,523 31,516 31,509 M-6,531 -3,525 1,519 3,515 7,509 M31,509 22,509 15,508 7,509 M63,545 56,543 49,541 44,538 37,536 M70,565 64,570 58,573 53,575 47,579 42,583 M42,583 38,578 33,573 27,570 23,565 18,561 M18,561 18,556 M-11,579 -4,575 0,572 6,569 12,565 18,561 M51,492 45,495 40,501 36,504 31,509 M-9,485 -5,491 -1,498 4,503 7,509 M65,677 60,681 56,684 52,688 47,692 43,697 38,700 M65,677 69,678 M69,678 72,685 73,689 73,695 76,702 78,708 79,715 M38,700 42,705 45,710 49,717 54,722 M79,715 72,716 66,718 59,721 54,722 M53,788 55,781 56,775 58,768 59,762 62,755 M28,743 34,742 41,742 47,740 M62,755 56,750 53,744 47,740 M24,699 31,699 38,700 M47,740 49,733 52,728 54,722 M368,794 361,792 356,792 349,791 M368,794 374,788 378,782 384,777 M349,791 349,785 348,778 350,773 348,765 349,759 M384,773 384,777 M384,773 380,767 376,761 371,757 366,752 M366,752 361,754 354,757 349,759 M378,817 376,811 373,805 370,800 368,794 M339,798 344,794 349,791 M408,800 403,797 398,791 394,786 390,782 384,777 M312,762 319,757 327,752 M312,762 307,759 300,757 M300,757 298,751 295,745 294,739 291,733 288,729 286,722 M327,752 326,747 327,739 328,733 326,726 327,719 M286,722 293,720 300,719 307,717 314,715 320,714 M327,719 320,714 M313,781 314,775 313,769 312,762 M349,759 341,756 333,755 327,752 M265,778 268,770 M268,770 275,767 280,765 286,762 293,759 300,757 M253,739 255,746 260,752 263,758 266,763 268,770 M253,739 256,732 261,727 M282,721 286,722 M346,715 340,717 334,717 327,719 M372,738 370,745 366,752 M317,687 317,694 319,699 320,707 320,714 M356,697 354,691 349,686 347,680 344,675 341,670 M190,743 195,734 M190,743 195,748 199,752 206,756 209,759 214,764 220,768 M195,734 200,732 207,728 211,726 218,725 M218,725 223,728 228,733 233,737 239,741 M239,741 235,746 230,751 228,758 224,763 220,768 M187,744 190,743 M185,707 188,712 189,720 192,726 195,734 M152,737 149,731 148,725 147,718 M220,769 220,768 M222,703 220,710 220,718 218,725 M253,739 246,741 239,741 M412,652 415,658 416,663 419,669 M412,652 404,653 398,652 391,650 385,651 M419,669 416,678 411,685 M411,685 405,686 398,686 391,687 385,687 M385,687 384,681 380,672 378,665 M378,665 381,658 385,651 M418,641 416,646 412,652 M440,670 433,669 426,669 419,669 M373,628 377,634 378,639 382,645 385,651 M380,696 385,687 M341,668 348,668 353,668 360,667 365,665 371,665 378,665 M389,727 395,728 403,729 M384,773 391,769 396,767 401,763 408,760 414,758 M403,729 406,734 408,741 410,747 411,751 414,758 M465,780 464,773 463,766 464,760 463,754 M463,754 457,752 449,751 443,749 M425,768 424,763 M443,749 438,753 433,756 429,760 424,763 M414,758 424,763 M571,474 569,468 M592,477 597,467 M597,467 596,461 594,455 592,449 M592,449 584,450 577,452 M569,468 573,462 575,458 577,452 M472,508 476,503 482,499 486,495 492,490 496,486 M511,514 508,508 505,503 503,498 499,492 497,486 M496,486 497,486 M607,813 607,806 606,800 607,793 607,788 M607,788 601,787 595,787 587,786 582,786 576,786 M574,813 572,807 570,800 M576,786 573,792 570,800 M615,780 607,788 M576,761 572,770 M572,770 574,779 576,786 M539,798 545,798 551,798 557,800 564,800 570,800 M529,781 533,776 537,769 M537,769 544,768 550,769 558,770 565,769 572,770 M558,730 551,730 M537,769 536,761 534,754 533,747 M533,747 538,743 543,738 547,735 551,730 M659,119 654,114 648,108 M659,119 664,114 667,109 672,106 675,100 680,96 M648,108 646,101 646,95 646,89 M646,89 653,88 660,86 666,85 674,84 M674,84 681,90 M680,96 681,90 M622,116 629,114 636,111 641,109 648,108 M620,125 621,128 M660,123 659,119 M692,117 689,111 686,105 682,102 680,96 M641,85 646,89 M638,69 644,64 650,61 655,57 M671,69 673,77 674,84 M690,87 681,90 M689,229 686,235 682,241 678,247 M707,258 700,260 694,261 M678,247 684,252 688,257 694,261 M801,128 795,130 790,133 784,136 777,138 M801,128 799,120 798,114 797,106 M785,102 795,104 M785,102 781,108 776,114 771,120 768,124 M768,124 771,130 774,136 M797,106 795,104 M774,136 777,138 M807,132 801,128 M786,154 783,149 781,144 777,138 M825,105 818,105 812,106 804,107 797,106 M806,83 803,88 801,93 798,98 795,104 M776,92 780,98 785,102 M752,119 760,122 768,124 M754,155 758,151 763,146 768,141 774,136 M630,181 628,188 624,195 621,202 M630,181 625,175 622,169 M622,169 616,172 611,174 605,177 600,179 M610,200 616,201 621,202 M610,200 606,193 604,188 599,181 M599,181 600,179 M623,205 621,202 M648,181 639,180 630,181 M624,157 623,164 622,169 M622,231 615,234 M597,210 598,216 597,222 598,229 M597,210 603,206 610,200 M608,127 604,132 599,137 595,143 M622,155 614,153 607,152 600,152 M595,143 600,152 M577,122 582,118 588,112 M577,122 580,128 581,133 582,140 M595,143 589,142 582,140 M600,179 597,172 593,166 M600,152 597,159 593,166 M663,10 657,11 649,14 M639,-18 637,-10 634,-4 631,3 M649,14 644,10 638,7 631,3 M656,47 650,44 646,39 640,34 M649,14 647,21 644,28 640,34 M534,118 540,114 546,109 551,104 M534,118 528,114 524,109 517,105 M517,105 519,98 522,93 526,85 M526,85 527,84 M527,84 532,87 537,93 542,95 546,99 551,104 M534,127 541,129 547,132 553,135 M534,127 534,118 M553,135 557,129 562,125 565,120 M565,120 561,114 559,109 554,104 M554,104 551,104 M535,258 539,249 M510,237 519,235 M519,235 524,239 528,241 533,245 539,249 M564,255 557,253 551,250 544,247 M539,249 544,247 M597,210 590,207 586,205 579,203 M599,181 592,184 588,185 581,189 M579,203 579,197 581,189 M574,229 568,229 562,229 556,229 550,229 M574,229 574,222 574,214 573,208 M557,204 565,205 573,208 M557,204 553,210 550,216 547,222 M547,222 550,229 M576,232 574,229 M544,247 545,240 548,235 550,229 M579,203 573,208 M519,235 521,227 525,221 527,215 M527,215 533,216 541,220 547,222 M345,281 344,274 342,266 341,258 M391,272 391,264 M341,258 346,253 350,249 354,244 M391,264 387,258 383,254 378,249 375,244 M354,244 361,245 369,244 375,244 M424,-21 427,-14 431,-5 433,2 M462,-2 454,-2 448,0 440,-0 433,2 M786,538 780,541 773,544 M768,511 766,516 764,522 762,529 761,535 M761,535 766,540 773,544 M780,566 776,560 772,554 M773,544 772,554 M763,583 758,577 752,569 M772,554 767,557 763,561 757,565 752,569 M742,571 748,569 M748,569 752,569 M727,544 726,537 722,530 721,524 M727,544 736,544 743,543 M743,543 750,536 M750,536 747,530 743,523 739,518 M721,524 727,520 731,517 M731,517 739,518 M720,551 727,544 M708,522 715,523 721,524 M748,569 746,561 746,556 745,550 743,543 M761,535 750,536 M755,500 750,505 745,512 739,518 M707,498 715,496 723,493 M723,493 725,498 726,505 729,510 731,517 M742,485 735,487 726,490 M723,493 726,490 M697,632 702,638 707,643 711,649 717,654 M697,632 691,633 684,634 M684,634 679,640 674,645 M674,645 678,651 682,659 686,664 M686,664 692,661 699,660 705,659 712,655 717,654 M703,617 700,624 697,632 M718,654 717,654 M674,609 676,616 678,622 682,628 684,634 M660,644 667,644 674,645 M682,677 684,670 686,664 M402,137 406,141 411,145 416,150 421,155 M402,137 407,132 413,128 418,123 M421,155 424,150 430,145 435,140 440,134 M418,123 425,127 431,130 439,132 M440,134 439,132 M416,103 424,102 430,103 438,103 M416,103 416,110 418,116 418,123 M444,111 438,103 M444,111 442,117 440,124 439,132 M465,182 458,183 450,183 444,185 M465,182 463,176 461,167 461,160 M440,165 439,174 439,182 M440,165 446,161 453,157 M444,185 439,182 M461,160 453,157 M414,166 418,161 421,156 M414,166 415,173 417,179 419,185 M421,156 426,158 433,163 440,165 M419,185 426,185 434,183 439,182 M445,137 449,144 451,151 453,157 M445,137 440,134 M421,156 421,155 M474,153 473,146 473,140 473,135 471,129 M474,153 468,156 461,160 M471,129 466,131 459,134 451,134 445,137 M462,275 458,270 453,265 M488,241 481,237 475,233 M475,233 464,237 M464,237 461,245 459,251 456,258 453,265 M415,284 420,279 426,275 431,270 437,266 443,262 M453,265 443,262 M470,203 479,211 M470,203 470,198 470,191 469,185 M469,185 475,182 483,180 M483,180 488,184 494,188 499,192 505,196 M479,211 485,209 490,209 497,208 M497,208 501,204 506,199 M506,199 505,196 M443,215 442,207 443,200 443,193 444,185 M443,215 450,211 457,210 464,207 470,203 M465,182 469,185 M491,159 488,165 486,172 483,180 M491,159 486,157 480,155 474,153 M491,159 495,158 M495,158 501,161 506,164 511,169 M511,169 510,177 508,182 507,189 505,196 M503,235 501,227 500,222 499,214 497,208 M475,233 476,226 477,217 479,211 M527,215 526,209 522,203 M522,203 514,201 506,199 M736,279 743,277 750,272 M733,251 741,252 748,252 M720,269 719,265 M748,252 749,258 749,266 750,272 M827,217 820,222 816,226 810,232 803,236 M814,200 807,203 800,203 795,206 788,208 M788,208 792,213 795,219 797,224 799,231 803,236 M803,236 803,236 M825,254 820,248 815,245 808,241 803,236 M782,205 788,208 M808,270 803,265 798,262 M800,238 799,246 798,253 798,262 M800,238 803,236 M713,313 708,310 701,308 695,306 M711,285 701,287 693,288 M695,306 696,300 694,294 693,288 M694,261 691,267 687,274 685,280 M685,280 685,282 M693,288 685,282 M603,293 606,289 611,285 615,280 M609,261 612,265 M612,265 613,272 615,280 M635,310 639,317 645,323 M635,310 636,304 639,296 M639,296 645,295 650,294 657,293 M645,323 651,322 658,322 M658,322 662,316 665,313 669,307 M657,293 663,298 668,302 M669,307 668,302 M613,314 620,314 627,313 635,310 M638,337 642,329 645,323 M633,285 627,283 622,282 615,280 M633,285 635,291 639,296 M695,306 690,310 685,313 M685,282 680,286 676,291 673,297 668,302 M685,313 676,309 669,307 M706,334 704,335 M685,313 686,322 687,330 M704,335 696,332 687,330 M658,322 663,328 667,334 672,339 M687,330 683,333 677,337 672,339 M657,355 663,353 670,350 M672,339 670,350 M732,342 729,347 724,354 719,359 M739,376 732,376 726,376 M719,359 722,365 724,370 726,376 M704,335 702,342 703,349 701,355 M719,359 714,357 707,356 701,355 M647,494 646,485 M618,486 626,477 M626,477 632,481 639,483 646,485 M597,467 604,466 610,464 617,463 623,461 M626,477 625,469 623,461 M606,442 611,446 616,450 621,453 625,457 M594,446 592,449 M625,457 623,461 M186,423 191,423 198,425 204,428 210,429 M186,423 182,429 176,433 173,438 168,444 M168,444 170,450 M170,450 176,452 181,457 187,460 193,464 M210,429 209,436 211,445 210,452 M210,452 204,456 199,460 193,464 M149,438 155,440 161,442 168,444 M181,409 184,416 186,423 M154,487 157,480 159,475 161,469 165,462 168,456 170,450 M193,484 192,478 193,471 193,464 M228,465 223,460 217,458 210,452 M224,420 227,413 229,407 M224,420 230,424 235,430 239,435 245,439 M229,407 236,405 242,406 248,405 255,405 262,405 M245,439 251,438 258,435 263,433 269,431 M262,405 265,411 269,418 271,424 M271,424 269,431 M224,393 227,399 229,407 M210,429 217,424 224,420 M242,460 243,452 244,447 245,439 M269,388 267,393 264,400 262,405 M279,448 276,442 273,437 269,431 M303,415 296,417 291,418 284,421 278,423 271,424 M173,245 173,251 170,258 171,264 170,272 169,279 168,285 M173,245 168,241 162,238 M162,238 158,242 153,247 148,252 144,255 139,261 135,264 M135,264 139,270 143,274 147,281 151,286 156,291 M156,291 161,288 168,285 M149,306 153,297 156,291 M113,263 121,263 128,263 135,264 M49,172 55,176 62,177 69,181 M69,222 72,213 76,207 M69,181 71,187 72,194 74,201 76,207 M39,599 34,604 29,609 24,614 M39,599 45,602 51,605 57,608 64,612 70,613 76,617 81,620 M24,614 27,621 29,627 32,631 35,637 37,643 40,649 M83,623 81,620 M83,623 78,628 72,631 67,635 63,638 57,643 52,647 47,651 M47,651 40,649 M16,614 24,614 M42,583 40,590 39,599 M83,579 83,586 84,594 82,600 83,607 81,614 81,620 M18,667 23,663 28,658 34,654 40,649 M89,625 83,623 M94,669 88,672 83,675 75,675 69,678 M65,677 61,671 59,667 54,661 50,655 47,651 M103,720 91,722 M103,720 105,725 107,731 110,737 111,742 114,748 116,754 M91,722 87,727 85,733 84,740 81,746 78,751 M78,751 84,756 89,760 95,764 100,769 104,774 M116,754 113,760 112,765 109,771 M109,771 104,774 M105,718 103,720 M79,715 85,718 91,722 M148,744 142,746 136,749 129,749 123,751 116,754 M62,755 69,752 78,751 M94,797 96,791 99,786 101,779 104,774 M148,784 141,782 135,779 128,777 123,777 115,773 109,771 M423,706 421,716 M423,706 429,704 434,701 439,698 446,694 452,691 M421,716 428,719 435,723 440,727 M440,727 447,724 452,721 459,719 465,716 M465,716 461,709 458,704 454,698 452,691 M411,685 414,690 416,695 420,701 423,706 M403,729 409,724 415,719 421,716 M453,687 452,691 M443,749 442,741 442,735 440,727 M549,458 551,449 551,442 M549,458 555,461 563,465 569,468 M577,452 573,445 567,440 M551,442 560,442 567,440 M582,422 580,422 M567,440 571,433 576,428 580,422 M599,412 600,410 M570,394 570,400 569,405 568,412 M568,412 573,416 580,422 M515,479 519,472 520,466 524,460 M515,479 520,482 525,484 532,487 537,491 542,494 M543,492 542,494 M543,492 543,487 544,480 544,474 544,468 544,462 M544,462 538,461 530,461 524,460 M541,505 542,494 M497,486 503,483 508,480 515,479 M564,487 556,488 550,491 543,492 M549,458 544,462 M488,475 489,468 489,462 490,456 490,450 M488,475 482,474 476,474 469,475 464,474 457,474 451,473 M490,450 484,446 477,446 470,442 463,440 M463,440 461,448 457,453 455,459 453,466 451,472 M451,472 451,473 M502,440 510,444 518,447 M502,440 496,444 490,450 M518,447 521,453 524,460 M496,486 492,480 488,475 M445,496 447,489 449,481 451,473 M456,425 460,432 463,440 M480,405 484,410 488,414 493,420 498,425 501,430 M501,430 502,440 M420,455 425,457 433,462 438,466 445,470 451,472 M553,686 541,689 M551,730 547,724 543,719 538,714 534,709 M534,709 536,703 539,696 541,689 M523,659 520,666 518,672 M541,689 535,685 530,681 524,677 518,672 M482,669 488,669 495,670 503,670 508,672 516,673 M518,672 516,673 M490,706 485,709 479,711 473,714 467,716 M490,706 498,708 505,710 M505,710 506,710 M506,710 506,718 506,725 506,731 507,739 M467,716 469,724 471,730 473,737 475,744 M475,744 483,745 490,748 496,748 M496,748 501,743 507,739 M479,674 481,681 484,687 486,693 488,700 490,706 M465,716 467,716 M516,673 515,680 513,684 510,691 510,698 506,704 505,710 M534,709 527,710 521,710 514,710 506,710 M533,747 527,745 521,742 515,741 507,739 M463,754 469,750 475,744 M499,776 497,768 497,762 497,756 496,748 M524,30 529,34 534,40 M524,30 526,21 528,14 M553,19 548,13 543,6 M553,19 550,26 548,32 546,39 M528,14 535,11 543,6 M546,39 540,41 534,40 M504,33 506,34 M504,33 497,34 492,35 M506,34 507,41 508,48 509,55 M492,35 488,42 486,47 483,52 M483,52 489,57 493,61 500,65 M500,65 504,60 509,55 M500,6 494,7 488,10 483,12 476,14 470,16 M500,6 501,14 503,20 503,27 504,33 M469,18 470,16 M469,18 475,21 481,26 485,32 492,35 M524,30 518,30 512,32 506,34 M534,40 531,46 529,51 526,58 M526,58 519,57 509,55 M526,85 519,83 512,80 506,79 499,76 M499,76 500,65 M527,84 530,78 534,73 M526,58 531,65 534,73 M553,19 560,19 569,20 M543,6 545,-2 M561,-10 564,-5 570,-2 574,3 578,9 M578,9 573,14 569,20 M591,97 584,92 M577,122 571,121 565,120 M554,104 561,96 M584,92 578,93 573,94 567,94 561,96 M490,-16 493,-9 495,-5 497,1 500,6 M520,-17 517,-10 515,-5 512,3 M500,6 506,5 512,3 M500,6 500,6 M470,16 468,10 464,4 462,-2 M528,14 522,10 516,6 512,3 M593,166 586,165 578,163 572,162 M581,189 577,183 570,179 564,174 M564,174 568,169 572,162 M534,127 528,133 523,139 M553,135 554,143 M523,139 525,145 527,151 530,157 533,162 M554,143 549,148 543,153 539,158 533,162 M582,140 576,147 571,152 M554,143 559,145 565,150 571,152 M571,152 572,162 M400,-1 404,3 405,10 408,15 M433,2 430,8 M430,8 424,10 417,14 411,17 M411,17 408,15 M301,289 297,281 M341,258 335,255 328,252 321,249 M297,281 299,275 304,268 305,264 310,256 312,251 M321,249 312,251 M297,281 290,277 282,274 M282,274 281,269 279,263 278,256 275,251 M275,251 281,246 289,243 295,238 M312,251 305,246 300,241 295,238 M65,28 69,31 M98,-15 100,-9 103,-4 105,2 107,7 109,13 M69,31 75,28 80,26 87,23 92,21 98,19 104,15 109,13 M44,141 50,139 56,136 63,132 67,131 74,127 M94,162 88,166 85,170 79,174 75,178 69,181 M94,162 94,158 M74,127 78,132 80,138 85,142 87,148 91,153 94,158 M344,112 338,107 331,103 326,99 M344,112 355,108 M355,108 358,98 M358,98 353,92 348,85 342,80 M326,99 329,95 332,90 336,84 340,80 M340,80 342,80 M322,100 322,105 319,112 320,119 318,125 M322,100 326,99 M318,125 319,125 M344,112 343,117 341,123 338,129 M319,125 326,126 331,128 338,129 M400,137 392,142 M400,137 402,137 M414,166 407,166 402,167 393,168 387,169 M387,169 384,160 M392,142 390,149 386,155 384,160 M400,137 397,131 397,125 394,119 392,113 389,107 M369,122 374,118 379,113 384,110 389,107 M369,122 368,128 M392,142 387,139 380,135 373,132 368,128 M116,197 117,193 M116,197 119,203 124,210 127,217 M117,193 122,189 127,183 133,179 138,173 M127,217 134,217 141,219 147,221 154,222 M138,173 143,176 150,177 156,181 M156,181 157,187 157,192 158,199 160,205 161,212 M154,222 161,212 M94,162 98,168 101,173 106,177 108,182 113,187 117,193 M76,207 83,206 89,204 97,202 103,199 109,198 116,197 M106,246 109,240 112,236 116,232 119,226 123,222 127,217 M94,158 101,156 106,153 111,151 118,148 M118,148 124,153 130,158 136,162 M136,162 138,173 M162,238 160,232 156,228 154,222 M162,135 165,140 168,144 172,151 176,154 180,160 183,165 M162,135 158,138 153,144 148,148 144,154 140,157 136,162 M183,165 178,168 171,171 167,175 161,177 156,181 M189,245 195,242 200,236 204,233 M189,245 181,245 173,245 M204,233 202,226 200,219 196,214 194,207 192,200 M192,200 186,203 180,204 173,207 167,209 161,212 M444,111 451,110 457,110 463,110 469,110 M438,103 441,95 445,86 M469,110 469,99 M469,99 464,95 459,89 454,85 M445,86 454,85 M469,99 475,94 480,87 485,83 M485,83 480,78 474,73 469,68 465,65 M454,85 458,77 461,71 465,65 M391,264 395,261 400,255 406,250 410,246 416,241 M375,244 377,238 380,230 M380,230 386,228 391,226 396,223 403,220 M403,220 406,225 409,231 412,235 416,241 M443,262 439,258 434,252 430,246 426,241 M416,241 426,241 M464,237 458,232 453,228 449,223 443,218 M426,241 431,235 434,230 438,224 443,218 M443,215 443,215 M443,215 443,218 M751,229 757,229 765,229 772,228 M751,229 752,235 752,242 751,249 M751,249 759,249 766,251 773,252 M772,228 775,235 779,241 M779,241 776,246 773,252 M743,220 748,224 751,229 M780,207 777,214 774,221 772,228 M748,252 751,249 M800,238 793,239 787,239 779,241 M763,287 769,289 775,290 M763,287 758,276 M758,276 764,271 770,266 776,261 M775,290 780,284 784,280 M784,280 783,273 781,265 M781,265 776,261 M752,301 758,294 763,287 M780,303 778,296 775,290 M750,272 758,276 M773,252 776,261 M798,284 791,283 784,280 M798,262 792,262 786,263 781,265 M643,271 641,263 638,256 M643,271 652,271 660,273 M641,249 648,248 656,249 664,248 M641,249 638,256 M664,248 666,249 M666,249 666,257 664,264 664,270 M660,273 664,270 M633,285 639,279 643,271 M612,265 619,263 624,260 631,259 638,256 M657,293 658,286 660,279 660,273 M633,236 636,243 641,249 M660,223 661,229 663,236 663,241 664,248 M678,247 672,248 666,249 M685,280 677,276 670,273 664,270 M631,453 637,452 644,454 650,454 M631,453 631,447 630,439 629,431 629,425 M650,454 653,446 656,439 M656,439 653,432 648,425 M648,425 642,423 633,422 M629,425 633,422 M611,426 616,426 623,426 629,425 M625,457 631,453 M632,402 633,408 632,415 633,422 M670,480 664,480 657,479 651,480 M670,480 670,474 672,466 672,461 M651,480 651,474 651,468 651,461 650,454 M672,461 664,459 658,457 650,454 M677,487 670,480 M646,485 651,480 M694,480 697,472 699,466 M677,459 685,461 692,463 699,466 M677,459 672,461 M650,454 650,454 M669,435 674,439 679,443 M669,435 663,438 656,439 M677,459 678,452 679,443 M709,438 713,442 719,444 724,448 M709,438 700,442 M700,442 700,450 700,459 699,466 M723,458 724,448 M723,458 718,461 713,466 M713,466 707,467 699,466 M713,425 711,431 709,438 M713,425 720,424 726,424 732,423 M737,437 731,442 724,448 M679,443 686,440 692,438 M692,438 700,442 M699,466 699,466 M744,469 737,465 729,462 723,458 M726,490 723,484 720,479 717,471 713,466 M713,425 709,419 705,414 M692,438 691,432 690,424 M690,424 697,419 705,414 M670,350 671,352 M701,355 700,356 M700,356 693,355 686,353 678,354 671,352 M653,375 661,380 667,385 M667,385 673,380 677,374 M671,352 673,359 674,366 677,374 M537,433 546,435 M537,433 534,427 530,423 526,416 524,411 M546,435 550,428 551,421 555,415 M555,415 551,412 547,407 541,403 M541,403 534,404 526,404 M526,404 524,411 M518,447 524,443 531,439 537,433 M551,442 546,435 M501,430 507,426 513,421 518,417 524,411 M568,412 562,413 555,415 M557,384 553,388 549,394 545,398 541,403 M524,402 526,404 M473,127 479,129 485,129 491,132 497,133 503,136 M473,127 472,120 472,114 M472,114 479,113 487,111 493,108 500,107 M505,135 503,136 M505,135 505,128 505,122 506,117 506,110 M506,110 500,107 M495,158 497,150 501,142 503,136 M471,129 473,127 M469,110 472,114 M485,83 491,82 M491,82 494,89 495,95 497,102 500,107 M523,139 516,138 510,135 505,135 M517,105 511,107 506,110 M499,76 491,82 M578,9 585,8 M594,-10 590,-3 589,1 585,8 M631,3 625,5 619,7 M609,-9 612,-4 616,1 619,7 M532,164 532,169 532,176 533,183 532,187 532,194 M532,164 533,163 M533,163 539,165 545,167 550,170 556,173 561,175 M561,175 559,182 555,189 552,195 M552,195 546,196 540,194 532,194 M522,203 527,199 532,194 M511,169 519,167 524,165 532,164 M533,162 533,163 M564,174 561,175 M557,204 552,195 M290,-4 296,0 303,2 310,5 M318,1 310,5 M318,1 318,-6 319,-14 318,-22 M280,3 273,-2 266,-6 M280,3 290,-4 M334,32 334,24 335,16 336,9 M334,32 324,34 M336,9 331,7 324,3 318,1 M305,23 311,26 318,30 324,34 M305,23 308,14 310,5 M344,3 351,4 M344,3 345,-4 343,-9 343,-16 342,-22 M351,4 356,0 362,-4 366,-8 372,-11 M336,9 344,3 M379,25 379,31 381,39 M379,25 377,23 M377,23 369,22 M369,22 364,25 359,28 353,31 349,36 343,38 M381,39 376,49 M376,49 370,53 364,54 M364,54 358,52 352,47 345,45 M343,38 345,45 M411,17 412,24 413,32 415,40 M408,15 403,18 395,19 391,21 385,24 379,25 M406,46 415,40 M406,46 400,45 394,42 387,41 381,39 M381,-7 379,0 378,5 377,12 378,17 377,23 M351,4 356,7 359,12 365,17 369,22 M334,32 343,38 M333,68 336,63 339,57 342,50 345,45 M333,68 336,74 340,80 M342,80 350,77 355,73 362,70 M362,70 362,62 364,54 M258,311 255,304 249,298 M282,274 274,277 269,279 262,281 255,284 M249,298 253,292 255,284 M354,244 352,238 350,232 348,226 347,222 346,215 M321,249 323,241 323,235 324,227 M346,215 339,219 336,222 329,224 324,227 M317,195 318,196 M317,195 310,194 304,195 296,194 290,194 M297,221 295,214 294,207 292,201 290,194 M297,221 305,219 311,217 M318,196 317,204 315,210 311,217 M295,238 295,231 294,224 M294,224 297,221 M324,227 318,222 311,217 M74,126 81,122 86,117 M74,126 71,121 67,114 64,110 61,104 58,98 54,94 51,89 48,83 M86,117 87,112 89,105 90,100 92,93 94,87 M94,87 88,83 84,82 78,79 72,75 66,72 M48,83 53,79 61,75 66,72 M74,127 74,126 M118,148 120,142 120,136 122,129 123,122 M123,122 118,122 111,120 104,119 97,120 91,118 86,117 M38,82 48,83 M69,31 72,37 74,43 M74,43 72,48 70,54 69,60 68,67 66,72 M318,125 312,125 305,123 300,122 294,122 M319,125 317,132 316,141 314,147 M314,147 307,147 301,147 295,147 M294,122 294,128 294,135 296,141 295,147 M360,136 361,143 363,150 364,156 M360,136 355,136 349,136 342,136 M342,136 339,142 336,149 M336,149 342,154 347,160 351,166 M351,166 357,161 364,156 M384,160 377,159 371,157 364,156 M368,128 360,136 M369,122 364,116 360,113 355,108 M338,129 342,136 M314,147 321,155 M321,155 329,151 336,149 M318,172 320,162 321,155 M318,172 321,176 M349,177 342,176 335,177 327,177 321,176 M349,177 351,166 M389,107 391,104 M358,98 364,94 370,92 M370,92 376,97 384,100 391,104 M362,70 371,78 M370,92 371,84 371,78 M215,233 220,227 223,223 228,217 M215,233 221,237 224,243 231,250 235,254 M228,217 235,218 240,218 246,219 252,220 258,221 M235,254 241,255 M241,255 246,251 251,246 258,242 M258,221 258,229 258,235 258,242 M275,251 269,248 263,244 258,242 M255,284 254,278 249,273 246,266 245,261 241,255 M318,172 311,172 304,172 297,171 M295,147 290,151 M297,171 295,165 293,158 290,151 M333,68 323,66 M324,34 318,40 314,48 M314,48 316,55 319,61 323,66 M305,23 296,27 M314,48 306,49 297,50 290,49 M290,49 289,49 M289,49 292,41 294,33 296,27 M280,3 279,12 M296,27 289,23 285,16 279,12 M394,203 397,197 400,191 M394,203 397,208 400,214 403,219 M403,219 408,216 412,212 418,208 422,205 M400,191 406,191 411,188 418,188 M418,188 421,196 422,205 M403,220 403,219 M443,215 437,213 429,208 422,205 M387,169 387,171 M419,185 418,188 M387,171 391,177 393,181 397,186 400,191 M705,404 700,401 695,397 M705,404 712,402 717,399 M695,397 696,390 695,382 696,376 M717,399 718,393 721,387 722,379 M722,379 715,379 710,377 703,375 697,375 M697,375 696,376 M737,410 730,406 723,402 717,399 M705,414 705,404 M726,376 722,379 M700,356 700,362 699,369 697,375 M677,374 683,373 689,376 696,376 M674,418 676,417 M674,418 668,415 661,412 M676,417 679,411 683,405 686,399 M661,412 658,401 M686,399 680,396 674,393 668,388 M658,401 662,395 668,388 M669,435 671,430 672,424 674,418 M690,424 683,421 676,417 M648,425 652,420 656,417 661,412 M695,397 686,399 M639,398 645,399 651,399 658,401 M667,385 668,388 M614,17 607,19 599,21 M614,17 619,24 623,30 627,37 M599,21 597,29 593,37 M622,47 627,37 M622,47 615,48 608,48 600,47 M600,47 597,41 593,37 M585,8 590,12 595,16 599,21 M619,7 614,17 M640,34 634,35 627,37 M569,20 571,26 574,33 575,39 M575,39 582,38 587,38 593,37 M627,63 624,55 622,47 M610,75 604,70 601,66 595,63 M595,63 597,55 600,47 M549,70 552,62 554,55 556,47 M549,70 556,75 M556,75 563,73 568,72 573,71 580,69 M556,47 562,46 569,46 M569,46 571,51 574,58 577,62 580,68 M580,69 580,68 M546,39 552,43 556,47 M534,73 541,71 549,70 M561,96 559,88 557,81 556,75 M584,92 583,84 580,78 580,69 M575,39 569,46 M595,63 587,65 580,68 M206,277 214,277 M206,277 202,283 197,287 192,291 M214,277 219,282 225,288 229,293 235,298 M192,291 194,298 195,305 197,311 M197,311 203,313 211,314 218,316 M218,316 222,312 227,307 231,302 235,298 M189,245 193,250 194,256 198,261 201,267 204,272 206,277 M204,233 215,233 M235,254 230,260 227,264 222,267 218,272 214,277 M168,285 173,287 181,288 187,290 192,291 M249,298 241,299 235,298 M183,330 189,324 192,318 197,311 M229,344 227,339 226,333 222,327 221,322 218,316 M346,215 342,206 M346,215 354,215 362,213 369,212 M342,206 344,199 346,193 349,188 352,182 M369,212 376,202 M376,202 372,194 370,187 M352,182 358,183 364,185 370,187 M346,215 346,215 M318,196 324,198 331,201 336,203 342,206 M380,230 376,225 373,217 369,212 M349,177 352,182 M321,176 320,182 318,188 317,195 M394,203 388,203 381,202 376,202 M387,171 382,176 376,182 370,187 M74,43 79,46 86,48 93,49 98,52 105,52 111,55 M109,13 119,18 M111,55 112,50 113,43 116,37 116,31 118,24 119,18 M110,78 112,71 112,65 114,59 M110,78 105,80 99,83 94,87 M111,55 114,59 M140,-18 140,-12 139,-5 138,1 140,7 138,14 M119,18 126,18 133,16 138,14 M181,-2 180,2 M180,2 174,4 167,6 162,8 155,11 149,14 142,16 M138,14 142,16 M123,122 127,119 M110,78 116,83 121,88 128,93 M127,119 127,112 128,106 127,100 128,93 M162,135 162,129 M127,119 133,121 139,122 145,125 150,127 156,127 162,129 M280,88 285,90 289,95 296,99 300,102 M280,88 287,83 293,78 299,73 M307,76 299,73 M307,76 310,82 312,89 313,97 M313,97 307,99 300,102 M290,49 292,54 295,61 296,68 299,73 M323,66 317,69 313,73 307,76 M322,100 313,97 M294,122 294,121 M294,121 295,116 299,109 300,102 M275,88 280,88 M275,88 273,90 M294,121 287,121 278,120 M273,90 274,95 276,101 276,108 277,114 278,120 M264,140 266,133 268,126 M264,140 267,145 271,151 M271,151 277,152 284,151 290,151 M268,126 278,120 M412,99 414,92 417,87 419,81 422,75 M412,99 404,99 398,99 M398,99 395,93 395,86 392,78 390,72 M422,75 416,72 409,67 402,64 M402,64 391,70 M391,70 390,72 M416,103 412,99 M429,72 434,76 439,82 445,86 M429,72 422,75 M391,104 398,99 M371,78 378,76 384,74 390,72 M406,46 406,52 404,57 402,64 M415,40 423,43 M429,72 431,69 M423,43 425,50 426,57 428,63 431,69 M376,49 380,53 383,60 387,65 391,70 M219,19 221,11 221,4 223,-5 M219,19 214,23 M180,2 184,8 187,15 M214,23 208,21 202,20 195,16 187,15 M213,150 219,153 224,158 M213,150 208,154 202,157 196,160 192,162 186,166 M224,158 224,164 223,171 224,179 223,186 224,193 M186,166 187,172 191,180 194,187 196,193 M196,193 203,194 210,193 216,193 224,193 M214,133 213,141 213,150 M214,133 221,131 229,129 236,126 M236,126 240,129 245,133 250,138 255,141 M255,141 251,146 245,151 242,154 236,158 M236,158 230,158 224,158 M214,133 210,127 206,121 M206,121 199,121 193,123 185,123 179,122 174,124 166,124 M183,165 186,166 M162,129 166,124 M192,200 196,193 M228,217 228,209 226,202 224,193 M224,193 224,193 M261,218 259,213 255,207 254,201 251,195 248,189 M261,218 262,218 M262,218 266,213 271,208 275,202 279,195 285,190 M248,189 253,183 256,178 M285,190 284,187 M284,187 276,184 270,179 264,175 M256,178 264,175 M258,221 261,218 M224,193 231,192 237,192 243,190 248,189 M294,224 288,223 281,221 275,221 268,219 262,218 M290,194 285,190 M236,158 241,164 247,168 250,172 256,178 M297,171 293,177 288,182 284,187 M271,151 270,158 268,164 265,169 264,175 M255,141 264,140 M265,24 269,29 272,34 275,40 279,44 283,49 M265,24 258,24 251,25 M250,25 251,25 M250,25 250,32 248,38 247,44 246,51 M252,56 246,51 M252,56 262,58 269,59 M269,59 277,54 283,49 M289,49 283,49 M279,12 273,18 265,24 M250,-0 251,6 251,12 250,18 251,25 M219,19 226,20 231,21 238,23 245,23 250,25 M218,57 213,53 M218,57 224,56 231,54 239,53 246,51 M214,23 214,29 214,36 213,40 214,46 213,53 M275,88 273,83 272,75 271,71 270,65 269,59 M445,33 451,32 456,30 463,27 M445,33 443,37 M443,37 446,43 448,50 450,57 M463,27 464,33 467,41 470,47 472,54 M450,57 457,59 465,63 M472,54 465,63 M469,18 463,27 M430,8 433,15 437,20 442,27 445,33 M423,43 429,42 437,39 443,37 M431,69 437,65 443,61 450,57 M483,52 472,54 M465,65 465,63 M114,59 121,58 129,57 134,56 143,55 M142,16 145,22 149,28 151,36 M151,36 147,41 146,48 143,55 M187,15 184,21 183,27 180,35 177,41 M151,36 157,37 165,38 171,40 177,41 M213,53 207,53 200,54 192,56 185,57 M177,41 181,48 185,57 M266,91 260,97 256,104 250,109 M266,91 260,88 254,84 248,81 M226,89 232,87 240,84 248,81 M226,89 229,94 235,100 240,104 244,110 M244,110 250,109 M273,90 266,91 M268,126 264,122 260,117 255,114 250,109 M252,56 250,62 251,68 248,75 248,81 M222,88 220,82 219,75 220,70 219,62 218,57 M222,88 226,89 M236,126 238,120 241,116 244,110 M206,121 208,116 209,109 208,103 210,97 M210,97 216,92 222,88 M148,86 152,90 157,95 161,98 167,103 M148,86 150,79 153,70 M153,70 160,69 167,67 174,66 180,65 M167,103 170,98 176,94 180,90 185,86 M185,86 183,79 181,73 180,65 M128,93 133,91 142,88 148,86 M166,124 167,118 167,110 167,103 M143,55 148,62 153,70 M185,57 180,65 M210,97 204,95 198,92 192,89 185,86" fill="none" stroke="#626567" stroke-width="1"/>
<path d="M299.0,57.0 L303.0,55.0 L308.0,56.0 L312.0,58.0 L314.0,64.0 L316.0,70.0 L320.0,72.0 L323.0,76.0 L322.0,82.0 L320.0,86.0 L323.0,92.0 L322.0,96.0 L319.0,92.0 L317.0,86.0 L316.0,80.0 L312.0,76.0 L310.0,70.0 L308.0,64.0 L303.0,61.0 L300.0,62.0Z" fill="#2a4464" stroke="#1c3658" stroke-width="1"/>
<path d="M366.0,258.0 L370.0,256.0 L376.0,259.0 L382.0,263.0 L388.0,266.0 L393.0,270.0 L396.0,276.0 L391.0,273.0 L385.0,271.0 L378.0,268.0 L372.0,264.0 L368.0,261.0Z" fill="#2a4464" stroke="#1c3658" stroke-width="1"/>
<path d="M439.0,391.0 L441.0,385.0 L445.0,381.0 L449.0,378.0 L451.0,381.0 L447.0,386.0 L444.0,391.0 L441.0,394.0Z" fill="#2a4464" stroke="#1c3658" stroke-width="1"/>
<path d="M424.0,412.0 L426.0,417.0 L427.0,424.0 L430.0,428.0 L432.0,432.0 L429.0,433.0 L427.0,430.0 L425.0,426.0 L424.0,420.0Z" fill="#2a4464" stroke="#1c3658" stroke-width="1"/>
<path d="M605.0,310.0 L606.0,304.0 L610.0,300.0 L612.0,292.0 L614.0,286.0 L617.0,291.0 L621.0,288.0 L620.0,294.0 L626.0,292.0 L622.0,298.0 L618.0,302.0 L614.0,306.0 L610.0,310.0 L607.0,313.0Z" fill="#2a4464" stroke="#1c3658" stroke-width="1"/>
<path d="M604.0,296.0 L609.0,291.0 L615.0,288.0 L619.0,291.0 L613.0,296.0 L612.0,302.0 L608.0,300.0Z" fill="#2a4464" stroke="#1c3658" stroke-width="1"/>
<path d="M540.0,603.0 L543.0,606.0 L549.0,606.0 L554.0,603.0 L556.0,606.0 L562.0,608.0 L564.0,611.0 L558.0,612.0 L553.0,615.0 L548.0,618.0 L543.0,619.0 L541.0,614.0Z" fill="#2a4464" stroke="#1c3658" stroke-width="1"/>
<path d="M122.0,661.0 L124.0,656.0 L129.0,653.0 L134.0,654.0 L137.0,658.0 L136.0,664.0 L132.0,668.0 L126.0,668.0 L122.0,665.0Z" fill="#2a4464" stroke="#1c3658" stroke-width="1"/>
<path d="M42.0,680.0 L45.0,679.0 L49.0,683.0 L52.0,688.0 L50.0,690.0 L46.0,688.0 L43.0,684.0Z" fill="#2a4464" stroke="#1c3658" stroke-width="1"/>
<path d="M58.0,686.0 L60.0,684.0 L62.0,690.0 L64.0,695.0 L66.0,700.0 L72.0,703.0 L78.0,704.0 L84.0,706.0 L85.0,710.0 L80.0,710.0 L74.0,708.0 L68.0,707.0 L63.0,703.0 L60.0,697.0 L58.0,691.0Z" fill="#2a4464" stroke="#1c3658" stroke-width="1"/>
<path d="M145.0,718.0 L147.0,714.0 L151.0,715.0 L153.0,712.0 L157.0,713.0 L160.0,718.0 L158.0,723.0 L154.0,725.0 L150.0,724.0 L147.0,722.0Z" fill="#2a4464" stroke="#1c3658" stroke-width="1"/>
<path d="M44.0,688.0 L50.0,690.0 L52.0,696.0 L47.0,695.0Z" fill="#2a4464" stroke="#1c3658" stroke-width="1"/>
<path d="M60.0,690.0 L66.0,686.0 L70.0,692.0 L64.0,696.0Z" fill="#2a4464" stroke="#1c3658" stroke-width="1"/>
<path d="M800.0,565.0 L804.0,563.0 L806.0,570.0 L801.0,572.0Z" fill="#2a4464" stroke="#1c3658" stroke-width="1"/>
<path d="M783.0,728.0 L787.0,730.0 L790.0,738.0 L788.0,746.0 L784.0,742.0 L782.0,735.0Z" fill="#2a4464" stroke="#1c3658" stroke-width="1"/>
<path d="M6.0,706.0 L13.0,702.0 L19.0,699.0 L27.0,700.0 L30.0,705.0 L40.0,707.0 L46.0,705.0 L48.0,713.0 L51.0,718.0 L52.0,725.0 L61.0,727.0 L70.0,728.0 L74.0,735.0 L78.0,742.0 L82.0,747.0 L88.0,752.0 L94.0,749.0 L98.0,744.0 L104.0,750.0 L108.0,753.0 L114.0,754.0 L118.0,746.0 L122.0,748.0 L127.0,744.0 L131.0,748.0 L136.0,745.0 L140.0,750.0 L146.0,750.0 L148.0,755.0 L150.0,745.0 L149.0,735.0 L149.0,723.0 L153.0,720.0 L158.0,723.0 L163.0,727.0 L168.0,726.0 L172.0,731.0 L176.0,735.0 L181.0,740.0 L186.0,744.0 L192.0,746.0 L198.0,750.0 L204.0,754.0 L208.0,757.0 L215.0,758.0 L228.0,759.0 L240.0,757.0 L236.0,755.0 L233.0,753.0 L230.0,748.0 L228.0,745.0 L223.0,742.0 L218.0,740.0 L213.0,739.0 L208.0,737.0 L203.0,736.0 L200.0,735.0 L199.0,730.0 L201.0,725.0 L202.0,720.0 L203.0,716.0 L207.0,714.0 L210.0,712.0 L215.0,709.0 L220.0,706.0 L222.0,700.0 L224.0,695.0 L226.0,689.0 L227.0,683.0 L228.0,678.0 L228.0,672.0 L224.0,673.0 L220.0,674.0 L216.0,676.0 L212.0,676.0 L208.0,677.0 L205.0,676.0 L206.0,672.0 L207.0,668.0 L204.0,669.0 L200.0,671.0 L197.0,675.0 L195.0,680.0 L193.0,686.0 L190.0,689.0 L187.0,687.0 L188.0,683.0 L186.0,680.0 L182.0,679.0 L178.0,680.0 L176.0,684.0 L177.0,688.0 L180.0,691.0 L184.0,692.0 L187.0,695.0 L191.0,696.0 L195.0,695.0 L199.0,692.0 L202.0,686.0 L204.0,680.0 L207.0,674.0 L210.0,669.0 L210.0,660.0 L213.0,652.0 L217.0,655.0 L221.0,655.0 L226.0,652.0 L230.0,651.0 L235.0,649.0 L240.0,647.5 L247.0,647.0 L253.0,647.5 L258.0,650.0 L262.0,653.0 L270.0,655.0 L279.0,654.0 L283.0,653.0 L285.0,651.0 L291.0,648.6 L295.0,651.0 L298.0,652.0 L301.0,655.0 L304.0,656.0 L305.0,652.0 L306.0,648.0 L307.0,644.0 L308.0,641.0 L308.0,634.0 L310.0,626.0 L313.6,622.0 L317.0,623.0 L319.0,625.0 L320.0,632.0 L321.0,639.0 L324.0,646.0 L327.0,652.0 L331.0,656.0 L335.0,659.0 L340.0,658.0 L344.0,656.0 L351.0,656.0 L358.0,654.0 L365.0,652.0 L372.0,651.0 L375.0,647.0 L378.0,640.0 L377.0,634.0 L380.0,636.0 L382.0,642.0 L386.0,636.0 L389.0,633.0 L390.0,640.0 L388.0,645.0 L394.0,643.0 L397.0,645.0 L393.5,648.0 L405.0,647.5 L415.0,647.7 L419.0,644.0 L423.0,645.0 L427.0,641.0 L430.0,644.0 L436.0,642.0 L441.0,640.0 L446.0,639.0 L450.0,641.0 L454.0,644.0 L452.0,648.0 L445.0,647.0 L438.0,648.0 L436.0,650.0 L446.0,652.5 L457.0,656.0 L466.0,660.0 L474.0,664.6 L476.0,658.0 L480.0,656.0 L484.0,658.0 L488.0,655.0 L494.0,653.0 L497.0,655.0 L493.0,660.0 L488.0,664.0 L484.0,668.0 L488.0,672.0 L492.0,676.0 L497.0,680.0 L503.0,682.0 L506.0,684.0 L501.0,686.0 L506.0,691.0 L509.0,696.0 L512.0,701.7 L513.0,707.0 L510.6,712.0 L516.0,713.0 L521.0,713.0 L528.0,715.0 L534.0,719.4 L540.0,717.0 L546.6,714.0 L555.0,708.0 L563.5,701.4 L571.0,696.0 L578.0,691.0 L580.0,688.0 L584.7,685.5 L586.0,682.0 L587.0,678.0 L590.0,676.0 L593.0,674.0 L597.0,673.0 L602.0,674.5 L607.0,673.5 L612.0,674.0 L617.0,677.0 L622.0,681.0 L627.0,684.5 L633.0,690.0 L640.0,695.0 L643.0,700.0 L646.0,705.6 L651.0,710.0 L656.7,714.0 L657.0,719.0 L657.7,724.7 L663.0,729.0 L669.0,733.0 L673.0,739.0 L678.0,746.0 L680.0,752.0 L682.0,758.6 L686.0,757.0 L690.5,756.5 L696.0,758.0 L701.0,760.7 L703.0,766.0 L705.0,771.0 L707.0,777.0 L709.6,782.0 L711.0,787.0 L711.7,791.4 L713.0,800.0 L714.0,806.0 L806.0,806.0 L6.0,806.0Z" fill="#004463" stroke="none"/>
<path d="M6.0,706.0 L8.9,703.4 L13.0,702.0 L19.0,699.0 L22.9,699.8 L27.0,700.0 L30.0,705.0 L35.4,705.4 L40.0,707.0 L46.0,705.0 L47.7,709.2 L48.0,713.0 L51.0,718.0 L52.0,725.0 L56.6,725.8 L61.0,727.0 L65.6,727.7 L70.0,728.0 L71.5,732.1 L74.0,735.0 L75.4,738.4 L78.0,742.0 L82.0,747.0 L88.0,752.0 L94.0,749.0 L98.0,744.0 L101.6,746.8 L104.0,750.0 L108.0,753.0 L114.0,754.0 L116.2,750.0 L118.0,746.0 L122.0,748.0 L127.0,744.0 L131.0,748.0 L136.0,745.0 L140.0,750.0 L146.0,750.0 L148.0,755.0 L148.4,749.9 L150.0,745.0 L149.9,739.4 L149.0,735.0 L148.8,730.4 L149.6,727.1 L149.0,723.0 L153.0,720.0 L158.0,723.0 L163.0,727.0 L168.0,726.0 L172.0,731.0 L176.0,735.0 L181.0,740.0 L186.0,744.0 L192.0,746.0 L198.0,750.0 L204.0,754.0 L208.0,757.0 L215.0,758.0 L219.1,757.8 L223.8,758.2 L228.0,759.0 L232.0,758.5 L235.7,757.6 L240.0,757.0 L236.0,755.0 L233.0,753.0 L230.0,748.0 L228.0,745.0 L223.0,742.0 L218.0,740.0 L213.0,739.0 L208.0,737.0 L203.0,736.0 L200.0,735.0 L199.0,730.0 L201.0,725.0 L202.0,720.0 L203.0,716.0 L207.0,714.0 L210.0,712.0 L215.0,709.0 L220.0,706.0 L222.0,700.0 L224.0,695.0 L226.0,689.0 L227.0,683.0 L228.0,678.0 L228.0,672.0 L224.0,673.0 L220.0,674.0 L216.0,676.0 L212.0,676.0 L208.0,677.0 L205.0,676.0 L206.0,672.0 L207.0,668.0 L204.0,669.0 L200.0,671.0 L197.0,675.0 L195.0,680.0 L193.0,686.0 L190.0,689.0 L187.0,687.0 L188.0,683.0 L186.0,680.0 L182.0,679.0 L178.0,680.0 L176.0,684.0 L177.0,688.0 L180.0,691.0 L184.0,692.0 L187.0,695.0 L191.0,696.0 L195.0,695.0 L199.0,692.0 L202.0,686.0 L204.0,680.0 L207.0,674.0 L210.0,669.0 L209.5,664.2 L210.0,660.0 L211.0,655.8 L213.0,652.0 L217.0,655.0 L221.0,655.0 L226.0,652.0 L230.0,651.0 L235.0,649.0 L240.0,647.5 L247.0,647.0 L253.0,647.5 L258.0,650.0 L262.0,653.0 L266.0,654.2 L270.0,655.0 L274.5,654.1 L279.0,654.0 L283.0,653.0 L285.0,651.0 L291.0,648.6 L295.0,651.0 L298.0,652.0 L301.0,655.0 L304.0,656.0 L305.0,652.0 L306.0,648.0 L307.0,644.0 L308.0,641.0 L308.0,634.0 L309.3,630.0 L310.0,626.0 L313.6,622.0 L317.0,623.0 L319.0,625.0 L320.0,632.0 L321.0,639.0 L324.0,646.0 L327.0,652.0 L331.0,656.0 L335.0,659.0 L340.0,658.0 L344.0,656.0 L351.0,656.0 L358.0,654.0 L365.0,652.0 L372.0,651.0 L375.0,647.0 L378.0,640.0 L377.0,634.0 L380.0,636.0 L382.0,642.0 L386.0,636.0 L389.0,633.0 L390.0,640.0 L388.0,645.0 L394.0,643.0 L397.0,645.0 L393.5,648.0 L399.9,647.7 L405.0,647.5 L410.0,647.0 L415.0,647.7 L419.0,644.0 L423.0,645.0 L427.0,641.0 L430.0,644.0 L436.0,642.0 L441.0,640.0 L446.0,639.0 L450.0,641.0 L454.0,644.0 L452.0,648.0 L445.0,647.0 L438.0,648.0 L436.0,650.0 L440.7,651.2 L446.0,652.5 L451.6,653.6 L457.0,656.0 L462.1,657.6 L466.0,660.0 L469.3,662.8 L474.0,664.6 L476.0,658.0 L480.0,656.0 L484.0,658.0 L488.0,655.0 L494.0,653.0 L497.0,655.0 L493.0,660.0 L488.0,664.0 L484.0,668.0 L488.0,672.0 L492.0,676.0 L497.0,680.0 L503.0,682.0 L506.0,684.0 L501.0,686.0 L506.0,691.0 L509.0,696.0 L512.0,701.7 L513.0,707.0 L510.6,712.0 L516.0,713.0 L521.0,713.0 L528.0,715.0 L534.0,719.4 L540.0,717.0 L546.6,714.0 L550.1,710.9 L555.0,708.0 L559.6,704.3 L563.5,701.4 L567.2,698.6 L571.0,696.0 L575.2,693.6 L578.0,691.0 L580.0,688.0 L584.7,685.5 L586.0,682.0 L587.0,678.0 L590.0,676.0 L593.0,674.0 L597.0,673.0 L602.0,674.5 L607.0,673.5 L612.0,674.0 L617.0,677.0 L622.0,681.0 L627.0,684.5 L630.2,687.7 L633.0,690.0 L636.4,692.4 L640.0,695.0 L643.0,700.0 L646.0,705.6 L651.0,710.0 L656.7,714.0 L657.0,719.0 L657.7,724.7 L663.0,729.0 L669.0,733.0 L673.0,739.0 L675.2,742.2 L678.0,746.0 L680.0,752.0 L682.0,758.6 L686.0,757.0 L690.5,756.5 L696.0,758.0 L701.0,760.7 L703.0,766.0 L705.0,771.0 L707.0,777.0 L709.6,782.0 L711.0,787.0 L711.7,791.4 L713.0,795.7 L713.0,800.0 L714.0,806.0" fill="none" stroke="#000" stroke-width="1.3"/>
<path d="M806,556 L803,560 L802,600 L803,640 L801,652 L806,654 Z" fill="#004463" stroke="#000" stroke-width="1"/>
<path d="M786.0,648.0 L784.1,652.9 L784.0,656.0 L785.1,660.5 L787.0,664.0 L788.0,669.3 L789.0,673.0 L789.9,677.2 L791.0,682.0 L791.9,686.5 L793.6,693.0 L791.5,697.2 L791.0,702.0 L790.5,707.0 L789.0,712.0 L787.7,716.7 L786.0,720.0 L785.0,727.0 L785.0,730.5 L786.0,735.0 L786.0,742.0" fill="none" stroke="#000" stroke-width="4.5"/>
<path d="M786.0,648.0 L784.6,651.7 L784.0,656.0 L784.9,659.9 L787.0,664.0 L788.4,668.3 L789.0,673.0 L790.1,677.9 L791.0,682.0 L791.7,687.8 L793.6,693.0 L792.0,697.4 L791.0,702.0 L790.4,707.4 L789.0,712.0 L787.1,716.1 L786.0,720.0 L785.0,727.0 L785.0,731.4 L786.0,735.0 L786.0,742.0" fill="none" stroke="#004463" stroke-width="2.4"/>
<path d="M222.4,683.5 223.6,683.3 225.6,684.9 227.8,685.9 228.3,688.3 228.6,690.1 228.5,691.2 228.7,692.4 228.1,694.9 229.6,696.6 229.0,697.7 M209.0,686.5 206.9,685.3 206.0,684.8 203.7,683.9 202.0,682.8 202.3,680.5 203.6,680.1 204.6,678.3 206.4,677.7 207.8,677.9 209.6,679.3 212.1,678.8 212.4,677.4 214.1,676.6 215.9,675.0 217.2,673.5 216.3,671.5 M199.6,717.5 200.8,716.1 202.0,716.6 203.3,716.3 204.5,716.0 204.8,714.8 205.3,713.7 204.3,712.6 203.7,710.4 202.8,708.9 203.7,706.8 204.7,705.7 204.4,704.1 205.3,703.1 M204.5,700.0 204.3,701.1 204.2,702.5 205.3,703.7 207.3,703.6 208.6,703.1 209.3,701.7 210.0,699.4 211.1,698.8 211.9,697.7 212.8,697.1 214.6,695.9 216.2,696.5 216.4,697.5 217.0,698.6 M216.4,707.0 217.8,707.9 218.0,709.5 216.5,710.6 214.4,710.7 213.5,712.0 211.1,712.4 209.6,712.9 208.3,713.9 206.7,714.6 204.8,715.3 203.1,713.4 201.9,711.2 203.3,709.4 M214.2,698.4 213.6,696.9 213.5,695.3 212.4,694.9 212.4,693.8 211.4,693.5 210.7,694.2 M212.9,680.4 214.2,682.2 215.5,683.7 216.6,684.3 217.6,684.1 218.7,683.0 220.8,682.3 222.2,683.0 223.3,684.2 223.7,685.5 224.3,686.6 223.6,688.0 222.6,689.1 220.5,689.7 219.6,691.3 M196.7,722.2 197.3,723.7 198.4,724.1 198.7,726.5 197.6,727.1 197.1,728.0 197.9,730.1 197.4,731.6 197.2,734.0 197.7,736.5 199.3,737.3 199.8,738.5 201.1,739.3 202.4,739.2 204.5,738.4 205.3,736.1 205.8,734.5 M201.8,716.8 202.7,718.9 202.0,720.1 203.1,722.1 203.9,723.9 204.7,725.0 205.5,726.6 203.9,728.7 203.1,730.4 202.0,731.1 202.2,732.8 202.6,734.1 202.9,736.4 M209.2,696.9 208.2,695.8 208.3,694.0 209.8,693.4 210.9,692.5 212.0,692.5 213.7,693.7 214.5,694.9 213.0,697.0 211.9,698.2 210.4,699.3 M208.2,702.7 209.1,704.7 208.5,706.5 206.1,706.5 204.2,707.5 203.2,707.9 201.3,709.4 200.0,709.3 198.4,707.9 199.0,705.5 200.1,705.4 201.5,707.3 M223.3,695.2 222.7,697.2 223.5,698.4 223.0,700.4 223.3,703.0 223.1,704.0 221.5,705.8 222.0,707.1 220.4,709.1 219.6,709.9 219.0,710.8 218.3,711.6 218.1,713.1 220.0,714.9 222.0,714.5 223.7,713.7 224.8,712.4 226.9,712.3 M221.7,690.6 220.4,689.2 218.8,687.7 217.0,687.2 216.3,685.1 214.4,684.0 212.7,682.7 211.7,683.0 210.2,681.3 209.2,681.4 M220.8,694.8 219.3,695.3 218.3,694.3 216.9,694.4 216.5,695.4 215.3,696.1 215.1,697.9 214.1,698.9 213.1,700.5 213.4,703.0 213.0,704.2 213.9,705.2 214.6,706.5 214.1,707.5 212.5,708.0 210.2,709.0 208.5,707.6 206.8,708.0 M208.0,679.2 209.3,678.4 211.5,679.7 211.3,681.1 211.3,683.4 212.8,684.2 214.2,686.3 214.6,688.3 213.4,689.5 211.0,690.0 209.9,689.2 209.1,688.3 206.8,687.9 205.1,686.9 203.2,686.1 202.3,686.7 201.1,686.6 200.3,685.9 198.0,684.9 M206.2,690.6 204.2,691.1 203.9,693.0 202.6,694.4 200.4,695.6 200.0,697.9 200.8,699.4 203.1,700.1 203.4,701.5 204.5,701.5 205.3,700.4 205.9,698.4 206.1,696.9 204.7,695.0 205.1,693.4 203.5,691.8 201.7,692.2 199.5,693.1 198.5,694.0 M218.4,704.2 220.3,702.8 221.5,701.9 221.1,700.2 219.7,698.5 217.2,698.5 215.2,697.3 215.4,696.3 215.4,694.9 216.2,694.1 217.4,692.7 M218.1,700.1 218.4,701.6 219.4,702.1 221.3,701.8 222.8,702.4 224.2,702.0 225.6,703.6 226.8,703.3 229.0,703.8 229.9,705.0 231.2,706.2 232.3,705.9 232.4,704.2 234.1,703.2 235.5,701.4 237.6,700.7 238.1,698.5 237.9,696.0 238.1,694.8 M204.9,699.2 202.5,699.2 200.2,699.7 198.4,700.8 198.4,702.5 199.5,703.7 198.4,705.9 198.2,708.2 197.1,708.6 M210.8,684.8 211.1,683.1 212.3,682.0 213.6,682.0 214.1,681.0 213.2,678.9 214.9,677.5 216.9,677.6 218.4,676.3 219.1,674.7 218.5,673.8 216.5,672.6 215.2,671.4 215.6,669.1 214.1,668.3 213.4,667.3 212.4,666.6 211.5,667.2 M208.1,702.2 207.8,703.4 207.4,705.0 208.3,706.0 209.5,705.5 211.8,704.3 213.8,704.6 215.1,706.7 216.8,707.0 218.1,705.0 217.8,703.4 216.3,701.3 214.5,701.6 214.0,702.4 213.8,705.0 215.4,705.6 217.2,704.3 M212.7,698.3 212.2,700.0 210.5,700.8 208.8,701.6 208.1,700.9 208.5,699.2 209.2,697.1 208.4,695.3 206.6,694.5 204.5,694.6 202.2,693.9 201.0,693.8 199.8,693.0 199.8,691.9 198.4,690.6 198.5,688.3 196.7,687.4 195.0,687.5 M200.0,728.3 202.5,728.3 204.5,728.1 205.7,727.2 206.0,726.2 204.8,725.0 203.9,722.9 202.9,721.3 201.7,721.2 M223.4,696.5 222.3,698.3 222.6,700.0 223.4,701.3 224.9,701.9 226.6,703.5 227.6,704.5 227.0,705.6 225.6,705.6 223.5,706.5 223.7,708.8 223.9,710.9 222.5,712.2 221.4,713.4 222.1,715.2 221.0,716.2 M211.7,700.4 212.5,699.7 214.0,699.2 214.5,698.1 214.9,695.6 213.7,693.6 212.6,693.0 M213.2,681.7 212.8,680.6 211.4,679.7 209.4,680.9 207.2,680.5 205.8,681.3 204.1,680.7 203.2,678.7 203.1,677.3 204.5,676.5 206.7,676.2 208.1,678.2 209.2,678.7 209.7,679.7 210.5,681.6 211.4,682.1 211.4,683.2 M210.3,678.7 211.9,678.3 212.5,677.2 213.4,676.3 214.5,676.7 215.9,675.3 215.5,673.6 216.9,672.4 217.5,671.4 218.7,671.0 219.6,669.2 M212.9,690.3 215.0,691.3 214.9,693.3 214.4,695.1 213.3,697.1 214.6,698.4 215.7,699.1 216.2,701.0 216.1,702.3 215.8,704.3 216.9,706.0 216.6,707.8 216.0,709.1 215.0,710.4 215.5,711.5 217.4,711.8 218.7,710.8 218.7,708.4 M208.1,707.2 206.1,707.5 205.0,709.1 204.8,710.9 205.8,712.1 207.3,712.8 209.3,712.9 211.0,712.3 212.8,711.3 214.8,711.6 216.1,712.8 217.2,714.1 M217.1,695.3 218.2,695.0 220.6,694.0 221.6,693.1 222.6,692.3 222.5,691.2 222.1,690.2 223.2,689.0 223.9,687.6 224.8,685.6 227.2,685.4 229.1,685.3 231.0,686.3 231.4,687.5 230.9,689.0 229.2,690.7 229.0,691.7 231.2,693.0 M199.8,713.0 198.4,713.1 196.9,713.5 195.6,714.9 193.8,715.7 192.5,715.1 191.5,714.9 191.2,713.7 191.2,712.2 192.0,711.5 193.2,712.0 193.8,713.9 M200.7,718.2 201.8,718.4 202.8,719.0 204.4,718.0 205.4,718.6 207.1,719.0 209.4,718.7 210.6,716.6 210.1,714.8 209.6,712.6 210.2,711.8 209.8,709.7 207.8,709.5 206.6,711.6 205.6,714.0 204.8,715.8 203.7,715.6 M205.1,712.4 205.2,710.3 204.0,709.7 203.5,708.1 202.3,708.0 201.3,708.6 200.1,709.5 198.6,711.2 199.1,712.7 200.0,715.0 200.2,716.3 202.3,716.5 M222.0,689.9 222.1,691.3 220.7,692.3 219.2,691.9 217.8,691.4 215.9,692.4 214.6,691.9 213.4,691.0 211.8,689.1 212.6,687.3 M161.6,745.5 160.5,747.1 159.1,747.8 157.4,749.4 155.0,748.9 152.5,749.3 151.5,750.8 150.0,752.8 150.1,755.1 148.2,756.6 148.2,757.6 M149.7,742.8 149.3,741.6 147.8,741.3 145.8,742.2 144.2,743.8 143.2,744.9 143.4,746.4 142.5,748.7 142.2,750.1 M179.5,742.6 178.5,741.6 176.4,742.1 174.6,743.9 172.2,743.4 170.7,742.7 168.7,744.4 168.3,745.4 165.8,745.7 165.2,746.8 166.2,749.2 167.3,751.2 168.7,753.4 168.0,754.6 166.8,756.5 167.7,758.1 168.9,758.9 170.3,758.2 171.1,756.3 M154.1,723.4 154.0,720.9 154.1,718.6 152.5,716.9 152.2,715.8 151.7,714.6 152.2,713.1 151.2,712.0 M175.5,744.1 176.7,743.6 176.6,742.4 175.1,742.0 173.1,740.3 171.7,740.1 170.0,741.9 168.9,742.0 167.1,743.3 166.3,744.2 167.3,746.3 169.1,747.9 170.0,749.9 171.9,749.7 172.7,747.6 173.8,745.8 175.7,745.7 M163.4,745.3 162.2,746.9 160.9,746.7 160.8,745.3 159.9,744.4 157.7,743.8 156.9,741.7 M156.6,747.6 156.5,745.3 157.7,743.7 159.7,742.0 160.6,739.9 161.8,739.1 163.2,738.4 164.9,738.0 167.1,737.9 168.7,738.3 169.2,739.1 168.9,740.2 169.1,741.9 168.9,743.1 168.3,744.2 167.3,745.4 166.5,746.3 M157.4,726.1 155.5,724.5 154.4,724.9 153.6,726.5 152.6,727.7 151.3,727.9 149.9,727.1 148.1,725.7 146.4,726.3 145.7,727.6 144.8,728.7 143.7,730.5 142.9,731.9 141.9,731.8 140.3,732.1 139.6,733.9 M152.6,733.9 152.9,736.1 153.8,736.8 155.1,739.0 154.3,740.2 152.8,740.7 150.5,741.9 149.0,742.2 147.9,740.7 146.8,740.4 145.1,742.3 143.7,743.2 142.1,742.3 140.2,742.8 M154.4,739.7 155.2,738.1 153.6,736.7 152.7,737.2 150.6,737.3 149.3,737.1 147.9,738.3 147.0,739.4 144.7,738.7 142.6,737.5 141.1,736.1 139.3,734.5 138.0,735.3 137.1,736.5 136.9,738.7 139.2,739.7 141.3,740.6 M170.2,740.0 171.8,740.1 173.0,739.1 173.7,737.2 172.5,735.4 172.2,733.3 172.0,732.0 169.9,731.4 M167.9,730.0 165.5,730.1 164.7,731.4 163.8,732.9 162.7,733.4 160.8,733.9 160.0,733.2 160.8,731.3 162.9,730.0 164.2,729.3 165.0,728.4 165.6,727.3 164.8,725.9 163.4,724.0 163.6,722.5 M166.7,756.0 167.9,757.4 169.0,757.4 169.4,756.1 171.2,755.3 171.5,753.3 170.6,752.8 170.5,751.5 171.6,749.4 171.1,747.9 171.0,746.3 171.1,745.3 172.1,743.5 170.9,741.8 168.9,741.4 167.9,742.2 166.4,742.6 M173.0,739.7 173.0,741.7 173.7,744.0 174.5,745.5 174.4,747.1 172.9,749.0 172.4,751.0 172.9,752.0 174.1,752.5 175.2,752.0 176.2,752.7 177.8,754.1 M153.9,751.1 153.0,752.1 151.9,752.1 151.0,753.3 148.5,753.0 146.9,753.0 146.4,752.0 M172.0,734.1 171.2,733.0 171.7,731.4 173.6,730.0 173.8,729.0 174.2,726.5 174.2,725.4 176.2,724.7 178.3,723.5 180.3,723.9 180.7,725.9 181.6,726.5 183.9,726.1 185.8,727.0 186.2,728.3 187.6,730.2 M160.6,757.8 162.3,757.0 162.1,754.5 162.9,753.0 164.3,752.2 164.5,750.8 166.2,750.3 167.8,751.4 167.7,753.3 168.0,755.8 167.7,757.4 169.4,759.2 169.3,760.5 170.1,761.3 M159.5,728.7 161.9,729.6 162.6,728.9 164.6,728.3 166.7,728.6 167.7,727.0 167.0,725.4 168.7,723.6 170.5,722.9 170.8,721.0 170.4,719.9 170.2,718.7 168.5,716.9 168.3,715.3 169.3,714.2 170.7,713.7 170.9,712.0 M151.3,747.3 150.2,747.5 147.7,748.2 145.8,748.5 143.5,748.7 142.7,746.3 142.2,744.0 141.5,742.6 141.5,741.5 140.3,740.0 140.6,738.5 141.9,738.1 143.0,738.7 142.6,741.0 142.1,742.8 143.6,744.7 M178.0,747.7 177.0,746.4 175.5,746.7 174.2,748.6 174.2,749.8 174.2,751.0 175.7,752.0 177.4,753.0 178.1,754.4 179.8,755.8 181.5,757.1 181.3,758.6 181.0,760.9 182.5,761.9 182.8,763.5 M156.9,746.8 156.2,745.7 155.0,744.0 156.5,742.2 159.1,741.9 161.4,741.1 162.9,742.5 M178.5,748.6 176.1,749.4 174.7,749.5 172.3,748.9 170.6,747.2 170.9,745.8 170.6,743.9 169.2,742.8 168.4,741.0 168.3,739.5 167.8,738.6 168.2,736.5 170.0,736.1 171.3,737.8 M166.5,742.3 166.2,740.9 166.3,739.1 168.7,738.4 170.1,740.0 171.4,740.3 172.3,739.6 172.4,737.2 171.6,735.5 170.6,734.2 169.5,732.0 167.5,730.8 167.2,729.0 165.3,728.1 163.5,726.9 161.3,726.2 160.0,725.5 158.1,725.2 156.6,725.3 M157.8,746.9 159.4,747.1 161.7,747.1 163.1,745.9 164.3,746.2 166.3,745.6 168.2,744.1 168.5,742.5 167.9,741.0 166.4,741.0 166.0,742.0 165.2,744.2 164.7,745.2 165.7,747.2 165.9,748.3 168.1,748.9 169.8,749.3 M168.0,741.5 167.2,742.7 165.1,743.6 162.8,742.6 160.5,742.6 159.0,741.8 157.8,742.0 157.2,744.0 154.9,744.5 153.8,745.7 M153.8,731.9 152.6,730.9 151.6,729.6 149.5,730.4 148.5,731.9 147.6,733.1 146.7,733.6 145.5,734.1 144.5,736.2 143.3,737.2 144.0,739.2 M181.3,742.8 181.5,741.7 183.4,740.9 185.1,739.8 187.2,739.7 189.5,740.2 191.2,740.5 193.0,738.9 193.8,739.4 194.9,739.6 197.1,738.7 199.5,739.5 200.1,741.0 202.5,741.7 204.8,741.8 205.7,740.7 205.7,739.5 206.3,737.9 207.0,736.7 M161.9,733.6 163.3,735.7 163.8,736.9 165.6,737.4 165.9,738.7 167.5,739.5 167.4,741.8 168.2,743.2 168.2,744.5 170.0,746.0 172.3,745.3 174.5,745.1 176.5,746.2 176.7,747.7 175.9,749.0 176.1,750.2 178.5,750.4 179.7,750.7 181.2,751.3 M168.4,744.4 166.3,743.5 164.3,743.8 161.9,743.2 161.8,741.3 159.8,740.8 159.1,738.3 159.4,735.9 157.8,734.6 156.6,732.8 154.2,732.0 152.3,732.7 150.9,734.2 150.0,736.2 149.2,737.1 147.0,736.6 145.3,737.0 144.3,736.6 M150.8,752.4 152.1,751.5 153.8,749.8 155.4,750.3 157.8,750.5 158.8,750.2 159.6,749.2 159.4,747.6 159.8,746.2 159.2,744.0 158.8,742.0 157.3,741.3 157.3,740.1 158.9,739.3 160.2,737.8 162.5,737.3 164.2,737.3 165.7,735.3 168.3,735.4 M168.5,744.8 169.2,745.6 169.5,746.9 168.1,747.7 166.4,747.5 164.1,747.5 162.2,747.9 161.1,747.3 160.5,746.0 160.5,744.1 160.8,742.5 161.4,741.6 163.1,741.0 165.4,740.1 167.2,738.6 167.0,736.6 167.2,735.0 166.1,732.8 M173.8,742.6 175.4,740.8 176.9,740.8 178.0,741.0 178.8,742.3 179.7,743.9 180.1,744.9 180.2,746.8 182.2,748.5 181.6,749.9 M174.1,738.4 176.0,738.5 178.1,739.9 179.4,740.2 180.5,739.8 182.7,739.4 183.7,738.8 186.0,738.4 187.3,739.6 189.4,739.2 190.6,739.2 192.0,741.2 193.7,742.1 195.4,740.6 196.6,740.1 197.4,740.9 M170.7,749.5 169.4,748.1 167.0,748.7 165.9,749.2 164.4,748.0 162.1,747.7 161.5,745.7 160.4,745.1 158.7,746.4 157.6,747.1 155.3,747.4 153.4,748.4 152.5,747.8 150.7,748.5 M168.5,737.2 167.9,736.2 165.9,735.0 163.7,734.5 162.9,733.3 162.7,731.9 162.3,729.4 161.3,728.9 159.5,727.5 159.4,725.5 158.0,723.7 M165.6,738.9 165.3,740.2 163.9,741.2 164.3,742.6 164.5,744.3 166.7,744.6 167.2,746.5 167.1,747.5 165.0,748.9 163.3,750.0 160.9,750.4 159.8,750.5 158.5,748.3 157.0,746.5 156.0,744.5 153.6,744.1 151.2,743.7 M173.7,739.6 174.2,737.3 173.6,735.6 171.8,733.9 171.2,731.9 169.2,731.0 167.9,730.5 165.7,731.1 164.9,732.3 163.2,733.3 160.7,733.3 159.3,731.2 158.4,730.2 158.9,727.9 157.5,726.7 155.0,727.2 153.9,727.1 M89.7,746.4 88.1,746.8 86.3,748.0 86.6,749.5 86.6,750.5 87.0,751.9 88.3,752.1 M84.7,742.9 83.0,743.0 81.1,743.8 79.0,743.5 77.4,744.0 77.3,745.0 78.6,746.2 80.3,746.9 M141.7,751.8 140.5,753.7 139.7,755.6 140.0,756.8 142.0,757.9 143.5,758.3 145.7,759.3 145.9,761.7 148.1,762.1 150.5,761.9 M145.2,748.8 143.3,750.0 142.3,751.7 140.8,752.4 138.6,752.9 136.5,754.1 135.6,754.8 M129.9,748.9 132.2,748.7 134.0,749.0 134.3,751.6 135.2,752.6 136.0,753.7 136.1,755.5 M89.8,746.8 90.9,746.1 90.8,744.8 91.0,743.0 90.0,742.0 88.8,741.4 M111.1,755.4 113.0,757.0 114.9,758.2 116.4,758.1 118.5,758.8 118.9,760.8 120.0,762.4 120.1,764.6 119.5,766.2 M93.2,753.2 90.9,753.5 90.2,754.8 91.3,756.8 92.1,758.8 94.0,760.0 94.6,761.0 96.1,760.7 97.1,759.6 M141.9,755.6 143.2,754.3 144.3,753.7 144.0,751.6 144.0,750.3 144.0,748.2 145.9,747.1 M105.4,754.5 103.2,753.9 101.9,752.9 100.5,753.8 100.0,756.3 98.0,757.3 M123.0,753.0 122.0,753.1 121.1,754.7 118.5,754.7 116.8,755.6 M134.6,750.7 133.6,751.0 131.8,750.6 131.0,751.6 131.0,754.2 129.7,755.4 128.2,755.0 125.7,755.0 124.4,753.5 122.4,752.7 121.9,751.8 M101.3,751.5 102.3,752.9 103.1,754.3 102.4,755.1 102.5,756.3 101.0,757.2 98.5,757.2 96.5,757.9 95.5,758.6 M102.1,746.8 103.3,747.1 105.2,746.3 104.9,744.1 104.4,743.0 103.4,742.3 102.4,741.3 102.6,739.2 102.2,736.7 103.3,735.5 M109.5,749.6 110.0,750.6 111.5,751.6 112.6,752.9 111.8,754.6 110.5,754.9 108.4,754.1 105.9,754.6 104.6,753.6 102.7,752.9 102.7,751.9 M118.8,752.5 117.3,753.0 116.1,752.9 114.3,753.1 113.3,752.4 111.8,750.9 111.8,749.1 113.2,748.0 114.3,748.3 M129.9,754.1 127.8,755.7 126.8,755.6 126.1,756.5 127.2,758.0 129.2,758.4 131.0,758.5 132.9,758.9 M116.0,749.0 114.8,750.3 112.5,751.1 110.0,751.1 107.7,750.8 106.6,748.9 104.8,748.5 104.2,749.5 103.3,749.8 100.7,750.0 M140.2,757.0 141.0,755.8 143.3,755.5 144.7,754.6 144.6,753.3 145.1,752.1 146.2,752.2 M148.4,746.4 147.3,744.7 148.2,742.5 150.2,741.8 151.2,740.9 151.4,739.4 M142.7,757.0 144.7,757.8 145.7,758.6 147.3,760.5 146.9,762.6 146.9,764.9 147.9,766.0 147.6,767.3 M145.1,755.3 146.4,754.5 147.4,754.9 149.0,754.8 151.2,754.1 151.6,753.0 151.4,751.8 150.3,750.2 M148.3,748.4 150.1,748.0 151.1,747.4 151.3,745.6 152.2,744.3 153.4,742.6 154.4,740.6 156.6,740.7 158.0,741.9 157.8,743.2 156.3,744.1" fill="none" stroke="#000" stroke-width="1.5" stroke-linejoin="round"/>
<path d="M804.1,605.7 803.1,604.0 802.6,602.6 804.5,601.3 805.6,599.4 806.3,598.2 806.2,596.8 M801.4,602.5 801.6,603.6 802.1,605.8 801.2,607.7 800.0,608.7 798.1,607.9 796.9,607.8 796.3,609.1 794.5,610.1 792.7,610.7 791.3,609.5 M802.6,600.8 804.0,600.8 804.5,599.3 806.2,599.2 808.0,600.0 809.0,601.1 810.9,601.4 811.9,602.5 813.0,604.5 M797.2,625.9 798.3,625.6 799.3,626.3 801.0,627.4 801.6,628.4 800.9,629.6 799.7,629.8 798.6,627.7 797.6,627.0 797.7,624.7 798.2,623.2 M798.4,585.7 799.5,584.5 800.2,582.5 799.3,581.7 797.9,582.4 797.8,584.0 M796.6,592.0 796.7,593.6 795.7,595.8 794.7,596.3 793.4,596.9 792.9,598.4 790.7,599.2 790.4,600.9 789.6,602.4 789.9,604.0 790.9,605.8 M791.5,641.7 790.6,643.2 789.4,644.6 788.2,644.4 786.8,646.0 785.1,646.3 M800.6,646.1 798.9,647.7 797.3,648.4 797.6,650.4 799.3,651.3 801.3,650.6 802.4,650.2 803.9,649.5 805.5,649.6 806.5,647.2 806.1,645.1 M792.5,653.1 794.2,652.8 796.4,653.9 798.4,652.5 800.1,652.7 801.3,652.4 801.4,651.4 801.5,649.7 801.3,648.4 M801.2,646.8 800.0,645.2 799.9,643.0 799.0,641.9 800.3,639.9 801.8,638.6 803.9,639.5 804.3,641.9 804.5,644.0 803.6,645.7 804.3,646.8 M797.7,605.8 797.5,607.0 797.8,608.5 798.2,609.5 797.2,610.6 795.0,610.2 793.8,610.4 792.1,610.2 789.9,611.2 787.9,610.7 786.9,609.3 M802.9,579.3 801.6,578.0 799.9,578.6 798.7,578.1 796.9,576.9 796.7,575.3 795.9,574.6 M801.4,572.3 800.6,574.5 799.2,576.1 800.0,577.4 801.3,577.6 802.8,578.6 804.3,579.9 805.6,581.2 807.0,582.4 807.2,584.9 807.3,587.3 807.1,589.1 M796.8,634.1 796.8,636.6 797.6,637.9 796.6,639.7 795.6,640.1 795.3,642.3 797.2,643.6 798.5,643.4 800.2,643.4 801.7,643.2 803.0,643.1 M801.8,627.3 801.7,628.4 802.2,630.1 801.2,631.7 800.3,634.0 801.1,634.6 800.8,635.7 798.9,636.4 796.6,635.2 M797.2,643.5 796.4,645.7 796.8,646.7 796.4,647.9 797.8,649.6 800.2,649.5 801.1,652.0 803.5,652.6 804.7,653.1 805.3,655.1 804.7,656.5 804.3,657.7 802.6,657.6 M804.2,633.4 802.9,634.8 801.5,635.6 801.4,637.3 801.2,639.9 800.0,640.4 798.6,642.3 798.0,643.4 797.4,645.2 795.9,645.6 794.6,645.3 793.8,646.6 794.5,647.7 M791.4,636.1 789.5,634.7 789.7,633.5 790.0,631.4 789.0,629.5 787.0,628.8 785.9,629.8 M796.5,633.2 795.5,635.4 793.7,635.6 792.6,635.8 791.8,637.6 792.8,638.7 M805.6,609.3 804.5,609.5 802.3,609.0 801.0,609.3 799.8,608.9 797.7,609.6 M793.8,611.1 793.6,610.0 794.0,608.3 794.9,607.3 797.3,607.1 798.2,608.9 799.0,610.5 798.7,612.5 797.0,613.5 796.4,614.3 797.9,616.3 797.5,617.9 M803.3,653.0 805.1,654.5 805.9,655.8 805.6,658.1 804.1,659.7 804.7,661.1 M801.0,610.8 799.6,611.8 798.5,613.5 796.9,614.4 795.2,614.7 794.3,612.7 794.9,611.6 796.6,611.6 798.1,613.4 798.2,614.5 M803.8,591.3 801.9,589.7 800.1,588.7 798.7,589.8 798.7,591.3 797.0,592.3 794.7,591.7 793.5,591.0 M794.2,653.5 795.8,654.3 796.5,655.6 795.5,657.4 795.6,659.3 794.9,661.1 795.2,662.5 795.4,663.5 796.7,663.8 797.8,663.1 799.7,662.0 800.9,660.9 M794.8,629.2 795.6,631.2 794.8,632.6 794.7,634.9 793.6,636.9 792.3,637.2 791.4,636.3 789.8,635.7 788.6,634.8 787.6,632.6 M796.0,592.5 796.8,594.9 795.5,597.0 796.3,598.0 795.6,599.6 796.1,600.8 798.3,601.0 798.8,602.5 M805.0,569.1 806.6,569.0 807.8,570.2 810.1,571.0 811.5,571.0 813.0,569.4 814.8,568.6 814.9,567.3 814.3,566.0 M796.9,584.5 794.4,584.6 792.6,586.4 791.1,586.3 789.5,585.2 788.4,582.9 787.9,581.9 787.2,579.8 M804.8,605.0 802.8,605.3 801.6,604.0 800.5,603.5 800.0,602.0 801.3,600.2 801.8,597.7 803.1,597.2 804.3,596.7 805.5,596.0 M794.4,606.4 792.9,608.5 792.4,610.9 791.6,613.3 790.1,613.5 788.8,615.6 787.5,616.6 786.8,617.8 785.7,619.7 M796.3,604.1 794.9,605.3 794.0,606.5 794.3,607.7 794.3,608.7 793.2,610.6 791.0,610.3 788.7,609.4 787.6,608.4 787.6,606.8 M798.0,588.9 799.2,590.0 800.5,589.3 802.5,590.4 802.8,591.6 801.9,593.1 802.4,594.1 802.8,596.2 802.7,598.3 802.1,600.3 800.1,601.5 M805.8,577.3 805.5,578.3 806.2,579.8 805.7,581.1 806.5,581.8 808.1,581.8 808.9,584.3 809.5,585.9 810.1,586.8" fill="none" stroke="#004463" stroke-width="3.2" stroke-linejoin="round"/>
<path d="M795.9,631.3 796.3,632.9 795.6,634.0 794.3,634.9 792.2,633.7 792.6,631.3 791.4,630.2 790.9,628.1 790.2,626.6 789.5,625.1 787.7,625.2 787.4,626.4 M803.1,649.7 801.0,649.2 799.4,647.6 798.6,646.6 797.2,646.0 796.5,644.1 795.3,642.0 793.2,640.8 792.5,639.2 792.0,637.1 792.2,636.1 M797.1,631.9 796.1,630.6 793.9,630.0 792.3,628.8 790.0,629.5 787.6,629.1 787.1,627.0 786.3,626.1 785.9,624.0 786.5,623.1 M798.1,640.7 799.5,640.6 800.8,638.4 802.2,637.0 804.7,636.7 805.4,638.0 805.6,639.7 805.8,641.8 806.1,643.2 805.7,644.3 804.2,645.4 804.3,647.0 803.3,648.4 801.0,647.9 M802.7,616.2 803.5,615.1 803.8,613.8 802.4,612.9 800.6,614.2 798.6,614.9 796.9,615.4 795.5,615.2 M803.8,651.9 804.6,652.9 804.3,654.4 805.4,656.0 806.0,657.9 806.9,659.6 806.6,661.9 806.5,663.4 807.3,665.6 809.6,666.0 810.8,665.0 811.1,663.7 813.3,663.7 814.9,664.9 816.7,664.8 M796.8,624.8 796.3,626.7 797.3,628.3 798.7,629.6 799.4,630.4 800.0,632.9 798.9,634.5 796.5,634.3 795.7,636.1 795.5,637.9 795.3,639.3 795.9,641.3 797.9,642.9 798.9,644.8 801.3,644.3 M799.4,629.1 799.5,631.6 799.1,632.7 797.8,634.6 796.3,634.6 794.7,636.3 793.7,635.9 791.9,634.1 M798.1,583.9 799.2,583.1 800.6,582.5 801.8,582.1 802.3,580.1 802.1,578.7 803.8,577.2 805.1,575.4 805.3,574.4 807.3,574.2 808.3,574.8 809.7,576.1 808.8,578.5 807.6,579.1 M802.5,600.8 804.1,599.4 804.3,597.1 805.9,595.3 806.3,594.3 808.0,594.0 809.4,593.9 809.9,595.2 811.1,596.0 M798.8,640.5 800.0,640.1 801.5,639.7 803.9,640.1 804.7,638.4 805.6,636.7 807.5,636.7 808.4,635.6 808.6,634.5 810.5,633.5 812.7,632.1 813.2,630.7 M805.1,654.0 805.4,656.3 804.0,657.8 802.8,659.2 802.2,660.7 803.1,662.2 804.1,662.7 804.6,664.8 804.3,666.1 803.0,668.2 802.3,669.3 M805.4,635.6 803.4,636.3 801.3,637.7 799.5,636.9 797.8,636.1 797.6,634.8 M795.4,654.9 797.1,653.1 798.9,652.4 800.1,650.7 802.2,650.3 802.4,648.8 801.7,647.2 800.2,645.2 798.2,645.1 796.3,646.4 794.7,647.2 M798.5,624.8 797.6,625.9 797.4,627.0 797.9,627.8 798.9,628.2 800.3,627.4 800.3,625.4 800.8,622.8 802.8,621.9 803.1,619.5 803.8,618.8 806.1,618.0 M801.4,616.1 800.4,614.5 800.2,612.3 799.5,611.5 797.6,610.8 797.5,609.3 797.5,608.1 796.4,607.0 797.0,604.5 799.4,604.1 799.6,602.1 802.0,601.2 802.8,598.7 802.8,596.5 M801.7,618.7 802.7,616.5 801.8,615.6 800.6,614.5 799.6,614.8 797.8,613.1 797.2,612.0 796.9,609.5 794.7,609.0 793.7,609.7 792.0,609.3 790.7,608.5 790.8,607.4 M796.0,589.2 795.1,587.6 793.6,586.4 793.9,585.4 796.2,584.8 797.0,583.6 798.7,581.7 798.1,579.7 797.5,578.5 795.3,577.8 795.0,576.3 794.2,575.3 792.7,573.8 790.7,574.0 790.2,575.5 M804.6,645.7 804.3,644.2 805.1,643.1 806.6,642.9 807.6,641.1 808.3,639.5 810.0,639.6 810.9,640.1 813.0,639.4 814.2,638.8 815.0,637.4 813.9,636.1 813.9,634.7 812.7,634.2 810.9,633.8 M795.6,645.8 795.9,644.7 797.3,643.1 798.4,643.4 798.7,645.4 799.4,647.2 798.0,649.1 M791.2,646.1 793.2,647.2 794.2,647.3 796.1,646.4 797.3,645.8 798.8,645.3 799.9,645.4 801.9,645.0 M801.2,595.6 803.0,596.5 803.4,599.0 804.0,599.8 805.1,599.9 806.4,599.4 807.5,597.4 M798.6,605.9 798.0,604.8 796.7,602.9 796.7,601.4 797.4,599.8 796.2,598.7 794.4,597.3 792.2,597.9 791.3,598.9 791.4,601.1 792.5,602.5 792.3,603.5 791.9,604.9 790.2,606.5 M798.5,596.2 799.3,594.4 798.5,592.0 799.3,591.1 800.0,590.2 799.9,587.8 799.7,585.8 798.5,584.8 798.1,583.0 M800.1,642.2 801.2,643.8 802.8,643.8 803.9,643.3 804.6,641.8 804.4,639.9 804.4,638.3 804.0,636.5 806.0,635.2 807.6,633.9 806.6,631.6 805.9,630.2 807.0,628.6 808.7,628.3 810.0,626.8 M795.9,634.4 795.0,635.0 793.4,634.3 792.3,634.2 790.4,633.1 790.7,630.7 788.8,629.0 787.3,628.3 785.9,628.8 784.6,628.4 783.6,626.8 784.5,625.0 786.2,623.8 788.2,622.3 M797.7,589.5 796.7,588.2 797.4,586.5 798.5,585.6 798.4,583.7 799.0,582.5 799.5,580.6 801.5,580.5 803.5,579.3 804.6,579.9 M801.7,615.3 801.4,616.6 800.4,617.4 800.1,618.6 801.1,619.8 800.3,622.1 799.3,622.3 797.9,623.2 796.4,623.5 794.3,622.7 792.2,623.5 791.1,623.5 789.9,623.9 789.4,625.6 789.2,627.7 M801.9,622.2 802.8,623.5 804.1,624.9 805.7,626.8 806.7,629.0 805.6,630.3 806.2,631.6 806.1,633.6 807.4,634.9 M801.2,589.5 800.6,591.6 799.0,592.3 797.6,591.3 796.3,589.1 795.2,587.8 796.2,585.8 795.7,584.3 797.1,583.3 798.0,582.2 798.7,581.0 799.7,580.4 M796.3,614.6 794.9,616.0 793.8,618.1 792.6,618.0 791.0,616.2 791.0,613.9 792.5,612.0 794.2,612.1 795.1,613.9 794.2,615.7 793.9,617.2 793.3,618.2 794.1,619.9 M802.3,564.5 804.6,564.8 806.3,566.7 808.0,568.4 809.2,568.0 810.2,567.2 810.1,564.6 811.6,564.0 812.4,563.3 814.0,561.9 815.3,559.8 M794.9,635.8 793.5,637.4 794.5,639.3 794.5,640.8 796.2,641.7 797.2,640.8 797.9,638.3 796.5,637.1 M796.0,623.0 794.6,624.2 792.2,625.0 792.0,626.5 791.1,628.2 789.3,628.5 787.2,628.5 785.2,627.9 783.8,627.7 782.8,627.9 781.4,629.4 780.4,630.2 779.0,632.0 M803.1,587.2 801.5,588.9 800.1,589.1 798.9,587.1 799.8,585.3 800.3,584.0 802.2,584.2 803.3,583.0 804.6,582.3 806.7,582.4 M795.9,595.3 796.7,594.0 796.2,592.8 796.8,591.4 798.2,590.5 798.5,588.1 M793.0,641.7 792.2,640.7 793.5,638.5 793.3,635.9 794.9,635.0 795.8,634.1 797.0,633.3 798.5,634.0 800.5,632.5 802.0,633.2 803.3,633.8 805.1,632.3 M805.6,641.2 803.5,641.8 802.2,640.2 801.1,638.6 802.4,636.6 803.2,635.1 805.3,634.1 M802.1,587.3 800.4,585.6 798.8,584.9 798.3,583.8 797.0,583.6 796.0,584.6 795.1,586.6 794.9,587.8 794.7,588.8 M795.3,606.3 797.6,606.7 798.8,606.7 800.9,608.2 802.0,607.6 802.1,605.3 800.5,603.6 798.5,603.8 797.2,605.0 795.0,605.3 793.3,606.9 M804.0,639.5 802.6,637.7 803.7,635.6 805.2,634.6 805.4,633.4 807.8,632.6 809.3,633.0 809.8,634.4 809.0,635.8 807.6,635.9 807.1,636.8 807.3,638.1 805.2,639.4 M794.9,649.6 795.7,650.5 797.8,650.0 798.7,651.4 799.6,652.7 800.7,653.7 M804.8,645.5 804.2,644.2 805.0,641.9 806.5,641.8 808.6,640.5 810.7,639.9 812.3,638.6 813.5,638.9 815.6,639.5 816.6,638.8 816.0,636.4 814.9,635.0 815.5,633.7 M790.9,648.5 791.6,647.7 792.6,647.0 794.3,647.4 794.9,648.6 795.8,649.0 797.0,649.4 M796.3,646.3 798.1,644.5 797.2,642.6 795.5,642.8 794.4,644.3 795.6,646.2 794.7,647.8 795.8,649.8 796.5,650.8 796.7,652.0 M794.7,642.2 793.7,642.5 793.3,645.0 791.1,645.7 789.4,646.0 788.5,648.2 789.4,649.4 789.3,650.5 788.8,651.7 M795.9,645.9 796.1,643.5 795.2,643.2 793.3,644.8 793.3,646.8 794.1,648.2 796.3,648.1 797.9,648.1 799.3,649.1 801.5,647.7 801.9,645.9 M803.7,567.0 802.2,565.4 802.5,563.5 803.5,561.6 804.7,561.1 806.7,560.8 808.8,560.2 808.8,558.9 808.8,557.4 808.2,556.1 806.9,555.1 804.8,556.2" fill="none" stroke="#000" stroke-width="1.6" stroke-linejoin="round"/>
<path d="M249,679 q6,12 3,24 q-4,12 -16,20 q-8,6 -14,8" fill="none" stroke="#000" stroke-width="1.4" stroke-dasharray="7,3,3,4,9,5,2,3"/>
<path d="M228,663 l8,-2 M240,661 l6,-1 M258,660 l10,2 M272,663 l10,2 M286,665 l12,0 M312,664 l24,-2 M230,690 l3,-3 M236,694 l2,-5 M232,700 l4,-2" fill="none" stroke="#000" stroke-width="1.5"/>
<path d="M14,718 l8,-2 l10,2 l7,4 l-4,4 l-8,3 l-9,-4 z" fill="#5d4f49" stroke="#000" stroke-width="1"/>
<path d="M330,663 Q372,650 405,648 T474,665 L506,692" fill="none" stroke="#000" stroke-width="2"/>
<path d="M548,712 l8,-5 l8,-6 l5,-5 M586,692 l6,-2" stroke="#000" stroke-width="1.2" fill="none"/>
<path d="M405.0,366.0 L404.1,375.4 L404.0,385.0 L405.0,400.0 L411.0,415.0 L417.7,429.0 L424.0,442.0 L430.5,454.0 L434.7,463.5 L438.5,472.0 L434.5,480.4 L432.0,490.0 L427.5,499.4 L424.0,509.0 L418.3,518.1 L411.0,527.0 L404.5,534.9 L398.5,544.0 L392.7,550.9 L386.0,558.0 L373.0,570.0 L365.3,575.8 L358.0,581.0 L344.0,589.0 L330.0,596.0 L318.5,602.0 L311.0,610.0 L307.0,618.0 L305.7,630.5 M405.0,366.0 L401.0,350.0 L400.8,339.0 L400.2,329.1 L398.4,318.1 L399.1,309.0 L397.7,298.0 L396.5,287.4 L396.2,277.4 L395.3,267.1 L394.5,256.5 L394.6,246.5 L395.9,236.7 L396.1,227.8 L396.0,218.0 L396.1,208.9 L396.1,199.4 L396.7,189.4 L398.1,178.8 L397.7,170.0 L399.5,161.8 L401.3,152.4 L403.9,143.8 L405.7,134.8 L409.2,121.6 L412.0,109.0 L416.6,99.8 L421.7,90.0 L423.4,79.6 L424.2,69.6 L425.0,60.0 L424.0,50.5 L421.1,39.9 L420.0,30.0 L417.1,18.5 L415.0,6.0 M438.5,472.0 L450.7,470.4 L462.6,469.0 L473.1,466.2 L482.0,462.4 L491.7,458.4 L500.0,454.0 L510.7,446.7 L520.0,438.0 L524.8,430.3 L530.7,422.8 L535.5,415.7 L540.0,408.0 L545.5,400.5 L551.9,390.9 L559.0,383.3 L565.0,375.0 L571.1,365.9 L575.7,355.8 L582.0,346.0 M405.0,366.0 L398.0,374.0 L385.0,385.0 L377.6,392.3 L369.7,400.0 L355.0,404.0 L341.0,406.4 L334.8,414.1 L328.0,422.4 L317.0,432.0 L305.7,441.6 L296.0,453.0 L286.5,464.0 L272.0,470.0 L257.6,474.0 L248.9,474.6 L239.5,475.1 L230.0,476.0 L219.6,475.9 L209.6,476.2 L200.0,476.5 L192.0,477.0 L181.7,478.8 L170.0,479.0 L160.7,480.1 L150.5,480.0 L138.3,478.0 L125.0,477.0 L111.9,474.5 L99.0,473.6 L86.9,470.9 L76.2,468.7 L64.0,467.0 L54.6,465.5 L44.2,464.3 L35.7,463.9 L25.4,463.1 L16.8,462.4 L6.4,461.0 M405.0,366.0 L420.0,360.0 L430.2,355.9 L440.0,352.0 L450.3,348.6 L460.0,345.0 L470.5,343.9 L480.6,341.5 L490.0,340.0 L499.6,340.2 L510.5,340.7 L520.0,340.0 L529.7,345.3 L540.0,352.0 L549.9,351.6 L560.0,350.0 L571.7,347.2 L582.0,346.0 M405.0,366.0 L412.3,361.2 L420.0,355.0 L428.0,350.0 L435.6,344.1 L443.5,336.2 L451.9,330.2 L460.0,323.7 L466.4,314.1 L472.5,304.2 L479.3,295.0 L483.9,285.0 L490.5,273.7 L495.3,263.0 L499.4,251.3 L505.0,239.0 M257.6,474.0 L250.0,490.0 L241.6,505.7 L237.0,513.6 L232.0,528.0 L224.0,540.0 L216.0,550.5 L215.8,562.4 L214.5,574.5 L212.8,579.0 L207.0,595.0 L203.0,608.0 L198.5,619.0 L195.0,626.8 L192.0,636.0 L185.7,651.0 L183.0,660.9 L179.0,670.5 M173.0,293.0 L173.0,305.0 L174.5,321.7 L178.0,338.0 L182.5,353.7 L183.0,370.0 L182.5,385.7 L176.0,402.0 L169.7,417.7 L165.0,430.0 L160.0,443.0 L158.5,460.0 L154.7,470.7 L150.5,480.0 L144.0,492.0 L137.7,504.0 L134.0,520.0 L131.0,536.0 L130.6,545.6 L130.3,556.0 L129.0,565.0 L128.9,574.0 L128.4,584.4 L128.0,593.7 L127.1,606.9 L126.5,619.0 L128.0,632.0 L131.0,645.0 L134.0,655.0 L137.7,664.0 M173.0,293.0 L172.0,280.0 L170.0,265.0 L168.0,250.0 L165.0,235.0 L160.0,225.0 M191.0,6.0 L192.3,15.0 L194.2,24.7 L197.0,34.0 L197.1,43.0 L198.0,52.8 L198.3,60.3 L199.8,69.9 L200.0,79.0 L199.7,90.9 L198.0,104.0 L188.0,111.0 L183.9,119.2 L178.5,128.5 L173.8,138.8 L170.0,148.0 L165.9,158.7 L161.0,168.0 L156.7,177.4 L154.0,187.6 L146.5,202.0 L150.0,215.0 L160.0,225.0 M6.4,257.0 L15.2,255.9 L25.0,254.5 L35.0,253.0 L44.5,252.1 L54.9,250.1 L64.0,248.0 L75.0,244.2 L85.0,241.0 L94.7,237.0 L105.7,232.0 L116.4,228.7 L128.0,225.6 L138.1,225.5 L149.6,225.6 L160.0,225.0 M160.0,225.0 L172.7,220.3 L185.0,215.0 L198.1,210.5 L210.0,205.0 L219.6,201.7 L229.5,198.4 L240.0,195.0 L249.5,190.3 L260.1,185.0 L270.0,180.0 L280.4,175.8 L290.3,170.4 L300.0,165.0 L311.0,160.8 L320.7,157.8 L332.0,154.0 L342.6,151.8 L353.8,149.3 L364.0,147.6 L374.0,143.7 L384.2,140.5 L395.4,137.4 L405.7,134.8 L416.1,133.9 L427.4,132.0 L437.7,130.0 L448.0,130.7 L458.7,132.3 L470.0,134.0 L480.4,136.4 L492.0,138.0 L503.0,139.6 L512.7,140.7 L524.0,141.0 L534.9,145.6 L544.6,151.4 L556.0,157.0 L567.0,157.6 L577.9,156.5 L589.0,157.8 L600.0,157.0 L610.4,148.1 L620.0,140.0 L625.6,131.7 L629.2,124.5 L634.6,116.2 L640.0,108.0 L649.6,107.2 L659.7,108.6 L670.0,108.0 L679.4,105.1 L689.2,102.7 L700.0,100.0 L710.6,96.2 L720.0,92.0 L729.4,88.6 L740.0,85.0 L749.9,81.2 L760.4,77.9 L769.6,73.1 L780.0,70.0 L792.5,69.0 L806.0,68.0 M405.7,134.8 L413.6,141.5 L420.3,149.8 L428.0,157.0 L432.6,166.3 L437.9,175.0 L444.0,183.0 L451.2,190.6 L459.0,198.8 L465.0,207.6 L473.0,215.0 L479.1,222.9 L485.7,231.0 L495.8,234.5 L505.0,239.0 M505.0,239.0 L521.0,237.0 L529.2,246.0 L537.0,256.5 L538.9,266.6 L540.9,278.6 L543.4,288.5 L549.5,299.1 L556.0,311.0 L563.8,319.6 L572.0,327.0 L577.3,336.6 L582.0,346.0 M505.0,239.0 L514.0,233.5 L523.1,228.8 L530.5,223.2 L540.0,218.0 L547.0,210.6 L553.8,203.7 L561.4,196.2 L568.5,189.5 L575.4,183.0 L580.8,176.3 L587.0,169.1 L594.0,160.9 L600.0,154.0 L606.0,145.9 L614.0,138.7 L620.0,130.0 L626.1,122.1 L632.6,115.4 L640.0,108.0 M582.0,346.0 L590.5,340.1 L600.0,333.0 L611.8,327.4 L623.7,320.5 L632.3,315.9 L639.1,310.4 L646.6,304.4 L655.0,300.0 L665.9,293.6 L676.4,288.2 L686.5,283.0 L696.2,276.9 L707.0,270.0 L717.4,264.0 L728.0,257.7 L737.3,252.0 L745.0,245.0 L753.5,239.3 L762.0,232.5 L772.9,229.8 L785.0,226.0 L797.2,223.6 L808.0,222.0 M582.0,349.0 L590.7,353.3 L600.0,356.0 L611.6,358.4 L623.7,362.0 L634.6,364.2 L645.0,366.0 L656.1,366.7 L665.6,368.6 L676.0,369.1 L686.0,369.6 L696.7,369.5 L707.0,370.7 L717.7,371.8 L728.0,372.1 L738.9,372.1 L749.0,373.0 L757.6,369.0 L766.0,366.0 L774.2,362.5 L783.0,358.0 L790.6,350.5 L799.7,344.5 L808.0,337.0 M582.0,349.0 L590.0,365.0 L598.6,379.0 L605.4,388.7 L611.0,398.0 L617.2,407.0 L623.7,416.7 L629.3,424.8 L636.0,433.5 L634.2,442.3 L632.0,452.0 L631.4,460.9 L630.0,471.0 L629.4,482.2 L630.4,491.5 L629.9,502.8 L630.0,513.0 L632.6,524.9 L636.0,537.0 L639.0,548.2 L642.5,560.0 L645.2,569.7 L647.6,580.1 L650.0,590.0 L650.9,600.1 L653.2,610.0 L655.0,620.0 L657.4,630.0 L659.8,639.8 L662.0,650.0 L671.0,657.3 L680.0,665.0 L686.1,673.8 L694.1,681.2 L700.0,690.0 L705.6,699.5 L709.7,709.8 L715.4,720.4 L720.0,730.0 L723.6,740.3 L727.1,750.7 L731.7,760.1 L735.0,770.0 L736.2,778.6 L738.2,788.2 L738.2,796.9 L740.0,806.0 M581.8,295.0 L576.1,304.6 L572.0,314.0 L575.0,327.0 L578.2,336.1 L582.0,346.0 M636.0,433.5 L650.0,442.0 L665.6,450.0 L675.9,453.4 L686.0,458.0 L696.7,461.9 L707.0,465.0 L717.5,466.6 L728.0,469.0 L739.0,470.2 L749.0,471.0 L759.0,474.2 L769.5,477.0 L780.0,480.0 L788.8,482.6 L798.7,485.7 L808.0,488.0 M741.0,257.7 L753.0,268.0 L766.0,278.6 L777.1,285.7 L787.0,293.0 L797.7,300.0 L808.0,308.0 M6.4,661.0 L15.5,657.7 L26.2,655.2 L35.0,652.0 L44.0,649.9 L53.9,646.6 L64.0,645.0 L74.5,643.4 L85.9,641.8 L96.0,641.0 L106.8,641.4 L118.1,640.2 L128.0,640.0 L139.3,642.3 L149.2,642.9 L160.0,645.0 L168.2,647.9 L177.8,651.9 L185.7,654.5 L198.6,652.0 L211.0,649.7 L222.3,646.7 L232.3,646.0 L243.0,643.0 L253.6,643.3 L265.1,641.8 L275.0,641.7 L290.0,636.0 L305.7,629.0 L317.0,625.0 L328.0,624.0 L341.0,626.0 L353.7,629.0 L366.5,637.0 L376.0,637.0 L385.7,635.0 L395.0,629.0 L405.0,624.0 L414.0,622.0 L424.0,619.0 L433.7,619.0 L443.4,617.7 L456.0,621.0 L467.0,618.0 L478.6,616.0 L488.9,615.5 L500.0,615.0 L510.2,613.6 L520.0,612.0 L533.1,613.3 L545.0,614.0 L556.7,617.6 L570.0,620.0 L579.5,622.8 L590.4,626.0 L600.0,630.0 L610.6,634.1 L620.3,635.9 L630.0,640.0 L640.7,642.8 L649.3,645.3 L660.0,648.0 L669.4,650.2 L679.6,651.8 L690.2,653.3 L700.0,655.0 L710.0,656.5 L720.0,657.9 L730.0,660.0 L739.3,658.9 L750.6,659.4 L760.0,658.0 L770.3,657.3 L779.3,656.1 L790.0,655.0 L806.0,653.0 M96.0,641.0 L93.0,654.5 L102.0,663.0 L112.0,670.5 L123.0,674.0 L134.5,677.0 L147.0,681.0 L160.0,685.0 L170.0,680.0 L179.0,670.5 L185.7,654.5 M806.0,545.0 L798.0,560.0 L795.3,569.7 L792.0,580.0 L790.0,590.1 L788.0,600.0 L789.4,613.2 L790.0,625.0 L791.1,637.9 L793.0,650.0 L794.4,662.3 L797.0,675.0 L799.5,688.0 L802.0,700.0 L803.4,710.0 L806.0,720.0 M160.0,225.0 L168.4,230.4 L177.3,235.1 L185.0,240.0 L194.7,245.3 L204.2,251.6 L215.0,258.0 L225.2,264.0 L234.8,270.0 L245.0,275.0 L254.2,280.5 L264.2,286.7 L275.0,292.0 L284.9,297.5 L295.1,304.0 L305.0,310.0 L314.8,316.0 L325.7,321.4 L335.0,328.0 L344.4,333.2 L355.6,339.0 L365.0,345.0 L373.7,348.7 L382.2,353.4 L390.0,358.0 L405.0,366.0 M405.7,134.8 L399.0,128.5 L392.6,122.1 L386.0,116.1 L380.0,109.0 L371.1,99.7 L361.0,90.0 L352.4,82.0 L345.0,75.0 L337.4,71.4 L328.4,66.0 L320.0,62.0 L310.6,58.0 L300.0,55.0 L290.7,56.2 L280.0,58.0 L271.5,54.7 L262.0,50.0 L252.9,42.2 L245.0,35.0 L244.0,25.9 L242.1,15.6 L240.0,6.0 M412.0,30.0 L422.0,29.0 L430.5,27.2 L440.0,25.0 L450.0,23.0 L459.2,22.4 L470.1,21.3 L480.0,20.0 L489.8,20.9 L499.8,21.8 L509.7,22.4 L520.0,24.0 L530.4,22.4 L540.7,21.5 L549.5,19.7 L560.0,18.0 L569.4,18.9 L580.7,19.3 L589.8,20.8 L600.0,22.0 L610.3,19.8 L620.7,18.9 L630.1,17.3 L640.0,15.0 M640.0,108.0 L638.6,98.7 L637.3,89.4 L636.0,80.0 L634.6,70.1 L631.6,60.8 L630.0,50.0 L627.7,36.8 L626.0,25.0 L623.9,15.4 L622.0,6.0 M670.0,108.0 L679.3,102.0 L690.4,98.0 L700.0,92.0 L708.9,88.4 L717.7,83.2 L726.5,79.2 L735.0,75.0 L743.5,71.0 L753.3,67.1 L762.0,62.7 L770.0,58.0 L779.2,54.6 L787.3,51.0 L796.5,47.9 L806.0,44.0 M740.0,85.0 L744.1,96.9 L748.0,110.0 L749.2,119.9 L750.0,130.1 L752.0,140.0 L751.2,150.8 L750.0,159.7 L748.0,170.0 L748.1,180.6 L749.5,189.4 L750.0,200.0 L747.4,210.5 L745.0,221.0 L743.6,231.0 L742.6,239.4 L742.6,247.8 L741.0,257.7 M6.0,560.0 L10.7,570.1 L15.0,580.0 L18.0,589.3 L22.0,600.0 L24.4,612.4 L26.0,625.0 L27.6,635.0 L30.0,645.0 L35.0,652.0" fill="none" stroke="#8a720e" stroke-width="1"/>
<circle cx="582" cy="347" r="8" fill="none" stroke="#8a720e"/>
<path d="M575,335 l6,12 l8,14 M570,352 l12,-4 l14,-6 M588,333 l-6,14 l-6,12" fill="none" stroke="#8a720e"/>
<ellipse cx="401" cy="132" rx="35" ry="32" fill="none" stroke="#8a720e" shape-rendering="geometricPrecision" stroke-width="0.9"/>
<path d="M238.0,238.0 L243.3,238.0 L247.8,238.0 L253.5,237.6 L258.8,237.6 L264.0,238.4 L268.7,237.7 L273.8,237.9 L279.5,238.0 L284.4,238.2 L289.7,238.3 L294.5,238.1 L300.0,238.0 L305.5,238.5 L309.7,237.7 L315.1,237.8 L320.1,238.3 L325.0,237.8 L330.5,238.4 L336.0,238.2 L340.4,238.5 L345.7,237.7 L350.4,238.6 L355.8,237.8 L360.9,237.9 L366.3,238.8 L370.8,238.8 L375.6,237.9 L381.3,238.7 L385.9,238.4 L391.2,238.7 L396.4,238.0 L401.3,238.2 L406.7,238.8 L411.9,238.8 L417.0,238.9 L421.2,238.2 L426.4,238.5 L432.3,238.8 L437.3,238.8 L442.4,239.1 L447.3,239.0 L452.4,238.7 L457.5,238.6 L462.5,238.6 L466.9,238.5 L472.1,238.8 L477.1,238.7 L483.0,239.2 L487.4,239.1 L492.7,239.0 L497.5,239.4 L502.7,238.8 L508.4,239.1 L513.5,238.4 L519.1,238.7 L524.3,238.9 L528.9,238.3 L534.4,238.7 L540.1,238.9 L544.6,238.6 L550.4,238.6 L555.9,238.2 L560.5,238.8 L565.8,238.7 L571.7,238.6 L576.0,238.6 L581.3,237.9 L587.0,238.0 L591.8,237.8 L597.8,237.9 L602.5,238.4 L608.1,237.9 L613.2,237.6 L618.1,237.8 L623.6,238.5 L629.1,238.1 L634.3,237.6 L638.9,237.5 L644.4,237.8 L649.4,238.4 L654.4,238.4 L659.7,238.2 L665.3,237.6 L670.2,238.4 L675.6,237.9 L681.0,238.0 M300.0,238.0 L303.0,245.0 L307.6,248.0 L307.4,253.4 L306.6,258.6 L306.2,263.6 L305.8,268.6 L304.9,272.9 L304.0,278.7 L303.9,283.5 L303.4,288.5 L302.6,293.7 L302.3,299.1 L301.3,303.9 L301.0,309.1 L300.9,313.7 L299.7,319.3 L299.7,324.4 L299.0,328.9 L297.9,333.7 L297.7,339.4 L296.6,344.1 L296.2,349.3 L296.2,354.1 L295.6,359.9 L294.4,364.4 L294.6,370.0 L293.4,374.3 L293.4,380.2 L292.5,384.6 L292.5,389.5 L291.8,394.6 L291.0,400.0 L290.8,404.6 L290.1,410.1 L289.1,415.5 L288.6,420.3 L288.7,425.2 L288.3,430.7 L287.7,435.8 L286.4,440.2 L286.4,445.3 L285.6,450.9 L284.9,455.3 L285.0,460.9 L284.0,465.5 L283.8,470.9 L282.9,475.9 L282.2,481.1 L281.9,485.9 L281.7,490.8 L281.2,495.7 L280.3,500.6 L280.0,506.0 L280.0,511.2 L280.4,516.8 L280.4,522.2 L280.0,528.0 L279.7,532.6 L280.3,538.6 L280.6,543.6 L281.2,548.4 L281.2,553.2 L281.7,558.2 L281.4,563.8 L281.5,568.8 L282.2,573.3 L282.6,579.0 L282.0,583.6 L282.7,589.3 L282.9,594.1 L283.4,599.5 L283.0,604.3 L283.3,608.9 L283.9,614.1 L283.7,619.1 L283.9,624.3 L283.8,630.0 L284.1,634.3 L284.3,640.0 L284.7,645.2 L285.0,650.0 M492.7,239.0 L493.9,243.8 L494.7,249.4 L495.3,254.7 L495.6,259.9 L497.4,265.1 L497.9,270.0 L499.0,274.6 L499.5,280.0 L500.8,284.6 L501.1,289.8 L502.5,295.3 L503.3,300.0 L503.6,305.3 L504.7,310.2 L505.8,314.9 L506.2,319.8 L507.1,324.5 L508.8,330.4 L508.8,335.3 L510.6,340.2 L511.1,345.1 L511.5,349.6 L513.0,355.5 L513.2,359.6 L514.4,364.6 L515.0,370.0 L515.9,374.9 L517.1,379.6 L518.5,385.3 L519.1,390.4 L519.5,394.8 L520.9,400.3 L521.6,405.3 L522.3,410.0 L523.3,414.9 L524.3,419.7 L525.4,424.9 L526.0,430.0 L527.7,435.6 L530.3,441.8 L532.0,447.0 L534.1,452.9 L536.3,458.0 L538.6,464.0 L538.8,471.7 L540.0,478.6 L539.0,484.1 L537.9,489.5 L537.1,496.0 L536.0,501.8 L535.0,507.0 L534.4,512.3 L534.7,518.1 L534.4,523.2 L533.4,528.8 L533.3,534.2 L533.0,540.0 L532.3,544.9 L531.9,549.9 L531.3,554.9 L530.9,560.9 L530.3,565.6 L530.5,570.9 L529.7,576.0 L533.0,585.0 L537.0,594.0 L538.4,598.6 L540.7,603.8 L542.0,608.4 M344.7,594.4 L349.3,594.7 L355.0,594.8 L360.1,594.0 L364.5,594.2 L369.5,594.6 L375.2,594.3 L379.3,594.3 L385.0,594.6 L389.7,594.3 L394.6,594.8 L400.0,594.5 L404.6,594.3 L409.8,593.9 L414.5,594.4 L420.3,594.1 L424.6,594.2 L429.6,594.1 L434.5,594.6 L439.7,594.8 L444.7,594.0 L450.0,594.0 L455.2,594.1 L459.9,594.1 L465.0,594.5 L469.7,594.4 L475.4,594.3 L479.7,594.0 L485.4,594.8 L490.0,594.3 L495.0,594.4 L499.8,594.8 L505.3,594.0 L510.1,594.3 L514.6,594.3 L519.9,594.0 L525.1,594.4 L529.6,594.0 L535.0,594.4 M344.7,594.4 L343.4,600.0 L342.5,605.0 L346.2,610.2 L350.5,614.5 L354.9,619.0 L358.5,624.0 L359.1,628.5 L359.0,634.0 L355.0,643.0 L353.6,648.3 L352.0,653.0 M547.7,620.0 L553.0,620.0 L557.7,620.6 L562.8,621.0 L568.3,621.0 L572.8,622.1 L578.0,622.0 L583.2,621.9 L588.4,622.9 L592.9,623.4 L598.6,623.4 L603.2,623.4 L608.8,623.9 L613.2,624.5 L618.9,624.9 L624.0,624.5 L628.3,625.5 L634.0,625.9 L638.7,625.5 L644.1,626.2 L648.7,626.2 L653.9,626.9 L659.4,627.5 L664.4,627.8 L669.3,628.1 L673.9,628.2 L679.4,628.0 L684.0,628.3 L689.2,628.9 L694.6,629.4 L699.2,629.3 L704.5,629.8 L710.0,630.3 L714.7,630.8 L719.6,631.0 L725.0,631.2 L729.8,631.8 L735.0,632.0 L744.0,632.5 L744.3,637.6 L745.5,643.5 L748.0,651.0 L753.3,650.7 L758.0,651.0 L759.0,644.3 L760.0,638.5 L759.2,633.3 L759.2,627.4 L758.5,622.1 L758.0,616.0 L764.0,610.0 L769.4,611.6 L774.1,612.2 L779.0,614.0 L786.0,617.6 L791.4,618.9 L796.0,620.0 M44.8,594.3 L49.8,594.6 L55.1,594.6 L60.1,594.2 L64.7,594.3 L70.2,594.1 L74.7,594.6 L79.8,593.9 L85.3,594.1 L90.0,593.8 L95.6,594.3 L100.3,594.3 L105.0,594.8 L110.3,594.1 L115.9,594.3 L120.6,593.8 L125.3,594.3 L130.9,594.7 L135.5,594.3 L140.9,594.1 L146.2,593.9 L151.4,593.8 L156.2,594.7 L161.2,594.2 L166.7,594.5 L170.9,594.1 L176.4,594.8 L180.9,594.3 L186.4,594.3 L183.7,599.9 L181.0,605.0 L179.3,612.4 L177.7,619.0 L180.3,625.6 L182.0,632.0 L185.3,638.6 L189.0,645.0 L190.3,650.6 L192.0,656.0 L193.8,661.8 L195.0,667.0 M6.0,415.0 L11.4,414.7 L16.5,414.9 L21.3,415.2 L26.4,415.4 L31.7,415.1 L37.1,414.6 L42.1,415.3 L47.3,414.7 L52.7,414.9 L57.0,414.5 L62.2,415.3 L67.6,414.5 L72.6,414.8 L78.0,415.0 M204.8,7.6 L203.8,8.5 L201.2,7.7 L199.5,8.3 L199.9,10.5 L201.3,13.5 L203.2,15.1 L204.4,13.6 L205.4,11.5 L207.2,11.8 L208.9,15.2 L209.4,17.5 L208.6,18.7 L206.0,17.9 L204.4,18.0 L204.3,19.7 L204.7,20.4 L204.0,22.7 L205.0,23.8 L207.8,23.1 L208.9,23.6 L208.7,26.1 L207.3,28.6 L205.4,30.5 L204.8,29.8 L203.4,28.1 L201.9,27.4 L200.7,29.2 L199.1,32.8 L200.1,35.6 L202.7,35.7 L203.8,32.8 L205.1,32.0 L206.7,33.1 L207.6,36.9 L208.0,39.7 L206.9,40.3 L205.2,40.0 L204.0,40.1 L204.5,41.9 L205.3,44.2 L206.6,46.2 L207.8,46.1 L208.5,45.1 L209.6,44.6 L210.8,45.9 L212.0,48.5 L212.4,50.2 L211.3,50.7 L209.8,50.6 L209.4,51.4 L209.8,53.2 L210.9,55.5 L212.4,56.3 L213.7,56.1 L214.1,55.1 L214.8,54.6 L216.3,55.2 L218.3,57.0 L219.6,59.1 L219.0,60.0 L218.4,60.1 L218.3,61.5 L219.4,62.3 L222.5,61.8 L224.9,60.8 L226.0,59.2 L224.2,58.0 L225.1,57.2 L226.2,57.3 L227.6,59.3 L228.7,62.9 L228.5,64.7 L226.4,64.2 L225.9,64.6 L225.7,65.4 L226.2,66.7 L227.1,68.2 L228.5,69.7 L227.9,69.4 L228.3,69.8 L228.9,70.4 L228.5,71.9 L227.3,73.8 L226.2,74.6 L225.5,74.3 L224.1,74.3 L223.9,75.3 L224.1,77.4 L224.7,79.1 L225.3,80.1 L226.1,79.9 L226.7,80.0 L226.6,80.3 L228.2,81.4 L229.6,82.9 L230.1,84.0 L230.1,84.7 L229.7,85.2 L228.1,86.1 L228.5,87.3 L229.7,90.2 L230.7,91.2 L231.4,89.7 L232.9,90.3 L233.0,91.5 L232.1,93.6 L229.3,95.5 L227.1,95.9 L226.1,94.0 L226.8,92.1 L226.5,90.9 L224.1,90.7 L220.9,91.8 L219.1,93.1 L219.1,94.3 L221.0,95.6 L221.8,97.1 L219.6,98.2 L216.7,98.6 L214.1,98.2 L213.6,96.9 L214.6,95.3 L215.2,93.8 L213.6,92.7 L210.9,92.7 L207.8,93.5 L206.7,95.2 L208.6,96.6 L210.2,98.2 L208.0,99.9 L205.2,100.7 L202.8,100.3 L202.9,98.7 L203.5,97.1 L203.2,95.7 L200.9,95.5 L196.6,98.7 L196.2,101.3 L197.6,101.8 L199.2,101.6 L199.4,102.6 L198.7,104.5 L199.2,105.0 L199.0,105.7 L198.6,106.2 L198.3,106.8 L196.8,107.9 L197.6,110.5 L199.3,112.8 L200.6,112.3 L201.2,111.5 L202.4,112.0 L202.0,114.1 L199.3,116.8 L197.3,117.4 L196.8,115.2 L196.5,114.0 L194.7,113.5 L192.4,115.9 L191.2,118.2 L191.3,120.0 L193.6,119.9 L195.0,120.0 L195.5,121.7 L194.8,123.4 L193.9,126.0 L192.6,126.9 L191.5,126.3 L190.3,124.8 L188.8,124.8 L187.6,127.9 L187.4,130.9 L188.1,132.1 L189.6,131.4 L191.1,131.4 L192.1,132.6 L191.3,134.8 L189.8,137.2 L188.3,138.8 L187.0,138.4 L186.2,136.9 L185.5,136.4 L184.2,136.8 L182.9,138.5 L182.0,141.3 L182.0,143.0 L182.7,143.6 L184.1,143.2 L185.3,143.6 L185.1,146.1 L184.1,148.4 L182.8,149.4 L181.9,148.5 L180.9,147.6 L179.9,148.2 L178.7,150.7 L178.3,153.2 L178.9,154.1 L180.6,153.6 L181.8,154.0 L181.5,156.5 L180.6,158.8 L179.2,159.8 L178.3,159.2 L177.3,157.9 L176.0,158.9 L174.9,161.6 L174.8,163.6 L175.7,164.2 L177.0,163.9 L178.1,164.5 L177.9,166.3 L177.5,169.8 L176.0,171.4 L174.6,170.2 L173.7,167.6 L171.9,167.7 L170.1,170.0 L168.9,172.8 L168.8,174.6 L170.2,175.0 L172.2,174.7 L174.0,175.3 L173.4,177.3 L171.8,180.8 L170.3,181.9 L169.0,180.5 L168.1,179.1 L166.9,178.4 L165.3,180.1 L164.0,183.3 L164.2,185.9 L166.2,185.7 L168.5,185.0 L169.4,186.3 L168.7,189.3 L167.0,192.2 L165.3,191.5 L164.6,191.5 L163.7,190.6 L162.7,191.3 L161.7,193.4 L161.5,195.4 L162.2,195.9 L163.3,195.9 L163.6,196.7 L163.4,198.5 L162.7,200.6 L161.9,201.9 L161.1,202.4 L160.4,202.2 L159.8,202.1 L158.8,202.6 L158.1,204.0 L157.4,206.2 L157.4,207.8 L158.0,208.2 L159.1,208.2 L161.3,208.6 L160.9,211.9 L158.9,215.2 L157.5,215.9 L156.2,214.0 L155.0,211.5 L153.0,211.8 L152.8,216.0 L152.5,217.9 L153.5,218.4 L154.6,218.4 L155.2,219.6 L154.4,221.2 L152.4,223.2 L150.9,223.6 L150.7,222.6 L149.9,222.4 L148.8,223.4 L148.2,225.8 L148.1,227.8 L147.4,229.8 L148.8,229.6 L150.4,228.8 L152.0,228.6 L152.6,231.3 L151.6,235.3 L150.4,236.7 L148.7,235.3 L146.9,233.0 L147.0,235.4 L146.4,237.3 L146.2,239.3 L146.6,240.3 L147.2,240.6 L147.8,240.8 L148.0,242.5 L146.9,243.8 L145.6,245.1 L144.3,245.9 L143.5,245.9 L143.1,245.0 L142.2,244.2 L140.1,245.7 L138.5,247.8 L138.5,249.1 L139.4,249.4 L140.7,250.2 L140.1,251.4 L138.4,252.9 L136.4,254.1 L134.9,254.5 L134.1,254.0 L133.8,253.3 L132.7,251.9 L131.4,252.8 L129.6,255.1 L128.9,257.0 L129.4,257.8 L131.4,257.7 L132.5,258.4 L131.5,261.1 L129.7,263.4 L129.0,264.2 L127.7,263.1 L126.7,261.7 L125.7,261.6 L124.0,263.7 L123.2,266.7 L123.6,268.6 L125.3,268.4 L126.9,267.9 L127.5,268.0 L126.2,270.8 L126.1,272.5 L125.8,273.9 L125.4,274.5 L124.8,274.7 L124.2,275.1 L123.9,276.5 L123.8,278.4 L124.1,279.9 L124.2,280.2 L124.8,280.6 L124.8,281.3 L124.3,282.5 L123.0,284.1 L121.8,285.0 L121.0,285.3 L120.4,285.2 L119.7,284.9 L118.5,285.7 L117.3,287.0 L116.5,288.5 L116.3,289.4 L116.8,289.8 L117.1,290.5 L116.7,291.5 L115.6,293.2 L114.5,294.4 L113.6,295.0 L113.0,294.9 L112.4,294.7 L111.7,295.0 L110.6,295.8 L109.2,297.1 L108.4,298.5 L108.4,299.2 L108.9,299.7 L108.7,300.5 L108.0,301.6 L106.8,302.9 L105.5,303.9 L104.5,304.1 L103.9,304.0 L103.3,303.6 L102.1,304.3 L97.8,304.8 L97.7,307.3 L99.7,307.7 L102.6,307.9 L102.0,307.4 L102.1,309.5 L101.3,312.4 L99.9,314.9 L98.5,314.6 L97.1,312.4 L96.6,313.5 L95.8,314.9 L95.3,316.8 L95.1,318.2 L95.4,319.2 L96.0,319.4 L96.7,319.8 L96.6,321.3 L97.8,324.3 L95.9,326.5 L94.5,325.2 L93.5,323.9 L92.1,322.4 L90.4,323.6 L89.1,326.2 L87.9,329.4 L89.3,331.0 L92.9,330.0 L94.6,330.2 L94.8,333.0 L92.1,337.2 L89.9,337.7 L88.9,334.3 L87.7,331.8 L85.6,332.9 L83.7,335.6 L82.4,339.1 L82.7,340.7 L84.8,340.7 L87.2,340.2 L89.3,340.8 L88.7,343.7 L86.9,346.8 L84.3,348.7 L83.0,345.8 L82.0,342.9 L80.1,342.9 L78.2,345.2 L76.4,349.4 L76.8,351.1 L80.0,350.6 L82.9,349.1 L83.8,351.0 L83.6,354.1 L82.4,357.7 L80.9,359.1 L79.5,358.3 L77.5,355.1 L75.6,354.8 L74.1,358.1 L76.8,360.8 L77.1,362.1 L77.6,362.5 L78.4,362.6 L78.7,363.7 L78.7,365.2 L78.5,367.0 L78.0,368.3 L77.2,368.5 L76.6,368.5 L72.8,368.7 L73.3,372.4 L75.6,376.2 L77.1,376.8 L78.6,373.9 L79.5,373.0 L81.0,373.3 L82.4,376.1 L82.8,378.9 L81.9,379.6 L80.0,379.0 L78.6,379.4 L78.7,381.2 L79.7,384.0 L81.3,386.0 L82.6,385.4 L83.5,383.6 L84.6,383.3 L86.0,384.8 L87.4,387.7 L87.7,389.8 L85.2,391.1 L84.3,390.3 L83.2,389.5 L82.2,390.7 L81.2,393.2 L80.8,395.2 L81.2,396.3 L82.8,395.9 L83.6,396.2 L84.0,397.7 L83.3,400.0 L82.0,401.7 L81.1,401.7 L80.0,400.5 L78.8,399.9 L77.3,401.0 L76.3,403.7 L75.9,407.1 L76.3,409.0 L78.0,408.9 L79.6,408.2 L81.8,407.6 L82.4,409.9 L82.2,412.2 L81.8,415.1 L79.8,415.3 L77.5,413.2 L76.0,413.0 L75.0,415.8 L75.3,419.4 L76.7,421.4 L78.3,420.6 L80.6,418.3 L82.0,419.2 L82.6,421.8 L82.5,425.5 L81.1,427.0 L79.6,426.3 L77.5,424.8 L76.3,426.5 L76.4,429.7 L77.4,432.1 L79.0,431.6 L79.9,431.1 L80.7,431.5 L81.2,433.2 L81.3,435.4 L81.1,436.7 L80.4,437.2 L80.1,437.4 L80.0,438.2 L81.4,439.3 L83.6,440.2 L84.8,440.0 L85.2,439.5 L85.5,438.7 L87.9,439.6 L88.0,441.6 L87.8,443.6 L87.1,444.4 L86.5,444.5 L85.6,444.4 L84.4,445.0 L84.1,447.9 L85.5,449.5 L86.3,449.9 L87.1,449.8 L87.5,450.6 L87.7,452.2 L87.7,454.1 L87.2,455.4 L86.6,455.7 L85.6,456.3 L86.0,457.2 L87.3,458.8 L89.0,460.0 L89.8,460.0 L90.4,459.6 L91.0,459.5 L92.1,460.1 L94.0,461.2 L95.1,463.3 L94.9,464.5 L94.2,464.9 L92.6,465.1 L92.6,466.4 L93.7,468.4 L95.5,470.4 L96.6,470.9 L97.3,469.7 L98.0,468.8 L99.0,469.0 L101.2,472.2 L100.2,474.7 L99.3,476.2 L98.2,476.1 L97.4,475.1 L96.2,474.7 L94.9,476.5 L94.1,479.1 L94.5,480.6 L95.8,480.6 L97.0,480.5 L97.4,481.9 L96.7,484.5 L95.7,486.3 L94.5,486.8 L93.7,486.3 L92.9,485.6 L92.6,485.7 L90.8,487.1 L89.2,489.4 L89.0,490.6 L89.5,491.3 L90.3,491.6 L93.3,492.1 L92.4,494.9 L89.7,497.9 L87.1,499.1 L86.1,497.8 L85.8,495.2 L84.8,493.0 L83.1,493.6 L80.0,497.1 L79.1,500.3 L82.1,500.6 L84.3,500.4 L85.7,501.1 L85.4,503.2 L83.0,507.0 L80.8,508.7 L79.4,507.5 L78.7,504.8 L77.8,503.3 L76.2,503.5 L73.9,506.0 L72.2,509.4 L72.4,511.7 L75.2,511.4 L77.3,511.1 L78.9,511.8 L78.4,514.7 L75.8,518.6 L73.8,519.3 L72.7,517.4 L71.9,514.8 L70.4,515.1 L68.5,517.6 L67.4,520.1 L67.5,521.8 L68.4,522.3 L70.4,522.0 L72.7,522.6 L71.5,526.1 L68.9,528.9 L67.3,527.8 L66.6,524.8 L64.9,523.9 L63.3,525.6 L61.3,529.1 L61.6,531.4 L64.7,530.8 L66.4,530.9 L67.1,532.8 L65.4,536.2 L63.7,538.3 L62.2,538.8 L61.1,536.6 L60.4,535.1 L59.2,534.3 L57.3,535.9 L55.0,539.5 L55.3,542.0 L57.0,542.1 L60.4,541.2 L61.4,542.7 L60.4,545.5 L57.9,548.9 L55.9,548.6 L55.1,546.1 L53.9,543.7 L51.8,545.0 L49.7,548.2 L49.0,551.1 L50.1,552.1 L53.5,551.2 L55.6,551.2 L55.4,553.7 L54.0,557.3 L52.5,559.4 L51.1,559.8 L50.0,558.6 L48.8,555.9 L47.1,555.4 L44.9,558.8 L44.1,562.2 L45.7,563.9 L47.6,563.1 L49.5,562.3 L50.7,562.8 L51.1,565.2 L50.4,568.5 L49.0,571.4 L47.7,572.0 L45.9,569.6 L44.2,567.8 L42.9,568.6 L41.6,572.2 L41.8,576.1 L43.4,576.7 L45.5,575.3 L47.1,574.7 L48.3,575.4 L48.8,579.0 L47.9,582.6 L46.7,583.3 L44.6,581.4 L42.9,580.3 L41.8,581.0 L41.1,583.6 L41.4,587.9 L42.6,589.4 L43.8,589.1 L45.6,587.5 L46.9,587.1 L47.9,588.1 L48.6,591.4 L48.3,594.8 L44.8,593.7 M223.3,56.8 L224.0,55.8 L224.6,55.1 L225.3,55.2 L225.9,55.2 L226.5,54.8 L227.4,53.7 L228.2,52.2 L228.8,50.8 L229.1,49.4 L229.2,48.5 L229.1,47.9 L229.0,47.3 L229.1,46.6 L229.7,45.7 L230.6,44.8 L231.7,43.7 L232.9,42.8 L233.8,42.3 L234.5,42.2 L235.1,42.1 L235.7,42.4 L236.7,42.3 L238.2,41.9 L239.8,41.3 L240.9,40.6 L241.4,40.0 L241.6,39.5 L241.9,38.8 L242.8,38.5 L244.6,39.2 L245.8,39.2 L247.0,39.3 L248.1,39.5 L249.0,39.7 L249.7,39.9 L250.5,40.1 L251.4,40.3 L252.4,40.6 L253.5,41.1 L254.7,41.5 L255.7,41.8 L256.6,42.0 L257.4,42.1 L258.2,42.3 L259.0,42.4 L260.1,42.7 L261.4,43.2 L262.4,44.0 L263.1,44.7 L263.8,45.3 L264.4,45.9 L265.0,46.5 L265.5,47.1 L266.3,47.8 L267.2,48.6 L268.3,49.3 L269.2,49.9 L270.2,50.4 L271.0,50.7 L271.7,51.0 L272.5,51.3 L273.3,51.6 L274.4,52.1 L275.5,52.8 L276.5,53.4 L276.6,53.3 L277.0,52.5 L277.5,51.9 L278.0,51.3 L278.5,50.5 L279.0,49.5 L279.5,48.3 L279.9,47.2 L280.3,46.2 L280.0,45.2 L279.6,44.8 L279.1,44.4 L278.7,43.5 L278.2,42.1 L278.0,40.4 L277.9,38.8 L278.0,37.5 L278.3,36.6 L279.1,36.2 L279.7,36.2 L280.3,35.8 L281.0,34.6 L281.5,33.2 L281.9,31.3 L282.1,30.0 L282.0,29.4 L281.4,29.0 L281.3,28.4 L281.3,27.6 L281.6,26.4 L282.4,24.6 L283.3,23.3 L285.0,22.3 L285.9,22.4 L286.5,22.6 L287.0,22.9 L287.6,23.2 L289.0,22.9 L290.2,21.6 L291.4,20.9 L292.4,20.3 L293.0,19.7 L293.4,19.2 L293.9,18.7 L294.7,18.1 L295.8,17.5 L297.0,17.2 L298.3,17.0 L299.6,16.9 L300.5,16.9 L301.2,17.1 L301.9,17.2 L302.8,17.3 L303.8,17.3 L305.1,17.3 L306.6,17.0 L307.8,16.7 L308.6,14.8 L308.1,14.3 L307.5,14.1 L307.0,13.9 L306.4,13.3 L305.8,11.9 L306.0,10.2 L305.7,8.9 L305.6,7.8 L305.5,7.0 L305.6,6.6 M6.0,105.0 L10.7,105.1 L16.0,105.2 L21.6,104.6 L26.3,105.1 L32.0,105.4 L36.2,104.8 L41.9,105.2 L47.0,104.7 L51.6,105.5 L56.9,105.2 L61.8,104.5 L66.8,105.4 L72.1,104.8 L77.8,105.3 L82.2,105.4 L87.3,104.5 L93.1,105.2 L98.2,104.6 L102.9,105.3 L108.4,104.9 L112.8,104.7 L118.1,105.2 L123.1,105.3 L128.2,105.3 L133.9,105.3 L138.9,104.5 L144.2,105.3 L148.8,104.6 L154.0,105.0 L158.0,108.0 L161.0,115.0 L160.0,122.0 L159.0,126.0 L152.0,130.0 L146.5,133.4 L141.6,138.0 L139.0,141.0 L144.0,141.0 L149.6,141.2 L154.4,141.3 L160.0,141.7 L165.5,141.2 L169.9,141.3 L175.7,141.4 L180.3,142.0 L186.0,142.0 M231.0,104.0 L236.6,103.5 L242.0,103.5 L247.1,104.1 L252.4,103.6 L258.1,104.1 L262.7,104.3 L268.5,104.3 L273.9,103.7 L279.0,104.0 L283.9,103.6 L289.2,103.6 L295.5,103.7 L300.1,104.4 L305.3,103.7 L311.0,104.0 L311.1,96.5 L311.0,89.6 L315.9,89.7 L321.9,90.0 L326.4,90.1 L332.3,89.6 L337.3,90.2 L342.2,90.1 L347.7,90.5 L352.5,90.0 L358.2,90.1 L363.0,90.7 L368.3,90.9 L373.5,90.2 L378.6,90.9 L383.9,90.3 L389.7,90.6 L394.8,90.9 L400.0,91.0 L405.2,91.5 L410.5,91.5 L415.3,91.6 L420.6,92.0 L425.4,91.6 L430.5,91.8 L436.3,92.1 L441.0,92.5 L445.8,92.6 L451.2,92.8 L456.3,92.4 L462.1,93.1 L466.6,93.3 L471.9,93.6 L477.1,93.1 L482.0,93.5 L487.7,94.0 L492.6,94.0 L497.3,94.0 L502.9,94.2 L508.0,94.4 L513.0,94.7 L518.1,95.1 L523.4,94.8 L528.5,94.8 L533.9,95.4 L539.5,95.3 L544.8,95.7 L549.1,95.3 L554.6,95.1 L559.5,95.5 L565.2,96.2 L570.1,95.7 L575.7,96.1 L581.0,96.1 L585.8,96.7 L591.0,96.5 L596.8,96.9 L601.7,96.2 L607.2,96.8 L612.7,96.1 L618.0,96.2 L623.3,96.8 L628.9,96.0 L634.0,96.5 L639.4,96.1 L644.1,96.6 L648.9,96.0 L654.5,96.1 L659.8,95.8 L664.4,96.3 L670.2,95.8 L674.7,96.4 L679.9,95.6 L685.4,95.7 L689.8,95.6 L695.0,95.7 L700.3,95.9 L705.3,95.5 L710.1,95.9 L715.2,95.1 L720.7,95.4 L726.1,95.2 L730.4,95.0 L736.3,95.1 L740.9,94.7 L746.2,95.2 L751.0,94.7 L756.3,94.5 L761.4,94.9 L766.8,94.6 L771.7,94.7 L777.0,94.8 L781.4,94.9 L787.0,94.4 L793.6,95.5 L799.6,95.9 L806.0,97.0 M634.0,96.5 L639.7,95.1 L644.7,92.9 L649.9,91.6 L655.0,90.0 L660.5,87.5 L665.6,84.7 L671.3,81.5 L677.0,79.0 L680.9,75.0 L684.5,72.2 L688.0,68.0 L693.1,64.5 L699.0,61.0 L703.5,58.5 L707.4,55.2 L712.0,52.0 L716.3,47.7 L720.3,43.4 L724.0,39.6 L728.2,36.8 L732.5,33.7 L737.1,30.9 L742.0,28.0 L746.3,24.8 L750.7,20.5 L755.1,17.1 L760.0,14.0 L764.0,11.0 M764.0,11.0 L768.0,20.0 L771.8,25.4 L775.0,30.0 L778.7,34.7 L782.0,39.6 L788.8,38.5 L795.0,38.0 L800.3,34.9 L806.0,32.0 M787.0,94.4 L786.4,99.4 L785.0,105.0 L783.3,110.3 L782.0,115.0 L778.8,119.6 L775.6,124.1 L772.0,128.0 L767.9,131.4 L764.0,133.7 L760.0,137.0 L754.3,139.8 L747.8,141.8 L742.0,144.0 L736.2,145.0 L729.6,146.0 L724.0,147.7 L718.7,145.4 L713.4,144.0 L709.1,147.3 L704.0,150.0 L699.0,152.4 L695.0,155.0 L691.8,159.3 L688.0,163.0 L681.0,169.0 L676.4,171.9 L670.9,174.2 L666.0,177.0 L661.8,179.6 L656.6,181.9 L652.0,183.7 L646.3,185.7 L639.8,188.6 L634.0,191.0 L627.9,193.3 L622.1,196.1 L616.0,198.0 L612.0,206.0 L609.0,212.5 L600.0,215.0 L591.0,216.0 L590.2,222.4 L589.0,228.0 L587.0,237.7 M681.0,238.0 L687.0,235.0 L694.0,232.0 L699.7,229.3 L706.0,227.0 L710.7,226.2 L716.4,225.1 L720.6,224.3 L726.0,223.0 L731.2,222.5 L735.6,222.0 L740.9,221.6 L746.0,221.5 L750.8,221.8 L755.7,221.7 L760.5,221.4 L765.6,221.5 L771.5,221.6 L775.5,221.7 L781.2,221.8 L785.6,222.0 L791.3,221.9 L796.2,222.6 L801.1,222.7 L806.0,222.6 M681.0,238.0 L675.8,242.9 L670.0,248.0 L666.7,251.6 L664.4,255.9 L661.0,260.0 L663.7,264.1 L667.0,268.0 L674.0,274.0 L680.0,281.0 L686.5,285.0 L691.7,284.8 L697.0,285.0 L699.6,290.7 L702.0,297.0 L704.4,302.0 L707.0,308.0 L709.7,312.6 L712.7,317.1 L715.0,321.0 L718.0,325.3 L720.8,329.1 L724.0,333.0 L728.2,338.0 L732.0,342.0 L736.6,346.5 L741.0,350.0 L745.0,353.6 L749.0,358.0 L753.5,360.5 L757.7,364.0 L760.6,368.9 L763.0,374.0 L765.3,378.0 L768.0,383.0 L770.6,387.2 L774.0,392.0 L776.9,396.3 L780.7,400.0 L788.0,405.0 L795.0,408.0 L799.0,417.0 L801.6,425.0 L802.5,430.9 L803.1,436.8 L804.5,442.0" fill="none" stroke="#000" stroke-width="1"/>
<circle cx="406" cy="406.5" r="160" fill="none" stroke="#e2e2e2" stroke-width="1" shape-rendering="geometricPrecision"/>
<circle cx="406" cy="406.5" r="280" fill="none" stroke="#e2e2e2" stroke-width="1" shape-rendering="geometricPrecision"/>
<circle cx="406" cy="406.5" r="400" fill="none" stroke="#e2e2e2" stroke-width="1" shape-rendering="geometricPrecision"/>
<circle cx="406" cy="406.5" r="39.5" fill="none" stroke="#ff0000" stroke-width="1.3" shape-rendering="geometricPrecision"/>
<defs><path id="cp" d="M-1,-4h3v1h-3zM-2,-3h1v1h-1zM2,-3h1v1h-1zM-3,-2h1v1h-1zM3,-2h1v1h-1zM-4,-1h1v3h-1zM4,-1h1v3h-1zM-3,2h1v1h-1zM3,2h1v1h-1zM-2,3h1v1h-1zM2,3h1v1h-1zM-1,4h3v1h-3zM-2,0h5v1h-5zM0,-2h1v2h-1zM0,1h1v2h-1z"/><path id="cm" d="M-1,-4h3v1h-3zM-2,-3h1v1h-1zM2,-3h1v1h-1zM-3,-2h1v1h-1zM3,-2h1v1h-1zM-4,-1h1v3h-1zM4,-1h1v3h-1zM-3,2h1v1h-1zM3,2h1v1h-1zM-2,3h1v1h-1zM2,3h1v1h-1zM-1,4h3v1h-3zM-2,0h5v1h-5z"/><path id="p" d="M-3,0h7v1h-7zM0,-3h1v3h-1zM0,1h1v3h-1z"/><path id="m" d="M-3,0h7v1h-7z"/></defs>
<g stroke="none">
<g fill="#e05010">
<use href="#cp" x="594" y="99"/>
<use href="#cm" x="643" y="114"/>
<use href="#cm" x="681" y="175"/>
</g>
<g fill="#e86800">
<use href="#cm" x="137" y="246"/>
<use href="#cp" x="194" y="176"/>
<use href="#cm" x="214" y="180"/>
<use href="#m" x="151" y="252"/>
<use href="#p" x="193" y="186"/>
<use href="#p" x="142" y="248"/>
<use href="#cm" x="31" y="188"/>
<use href="#cp" x="205" y="174"/>
<use href="#cm" x="180" y="241"/>
<use href="#cm" x="150" y="198"/>
<use href="#p" x="189" y="226"/>
<use href="#m" x="181" y="188"/>
<use href="#m" x="182" y="236"/>
<use href="#m" x="148" y="128"/>
<use href="#m" x="164" y="222"/>
<use href="#cp" x="161" y="205"/>
<use href="#cm" x="41" y="172"/>
<use href="#p" x="218" y="114"/>
<use href="#m" x="716" y="123"/>
<use href="#m" x="188" y="120"/>
<use href="#cp" x="165" y="142"/>
<use href="#cp" x="683" y="191"/>
<use href="#cm" x="138" y="247"/>
<use href="#cm" x="195" y="191"/>
<use href="#p" x="736" y="16"/>
<use href="#cp" x="236" y="116"/>
<use href="#cm" x="201" y="192"/>
<use href="#p" x="96" y="136"/>
<use href="#p" x="210" y="178"/>
<use href="#cp" x="171" y="246"/>
<use href="#p" x="116" y="171"/>
<use href="#m" x="165" y="195"/>
<use href="#cp" x="160" y="247"/>
<use href="#cm" x="135" y="229"/>
<use href="#m" x="529" y="109"/>
<use href="#cp" x="162" y="259"/>
<use href="#cm" x="180" y="228"/>
<use href="#cp" x="206" y="128"/>
<use href="#cp" x="210" y="202"/>
<use href="#m" x="474" y="720"/>
<use href="#cp" x="190" y="191"/>
<use href="#cp" x="219" y="124"/>
<use href="#m" x="197" y="136"/>
<use href="#cp" x="224" y="123"/>
<use href="#p" x="189" y="150"/>
<use href="#cm" x="159" y="253"/>
<use href="#p" x="218" y="129"/>
<use href="#p" x="180" y="216"/>
<use href="#p" x="233" y="113"/>
<use href="#m" x="589" y="132"/>
<use href="#p" x="169" y="236"/>
<use href="#cp" x="133" y="168"/>
<use href="#p" x="123" y="163"/>
<use href="#p" x="203" y="182"/>
<use href="#cp" x="491" y="802"/>
<use href="#cp" x="198" y="180"/>
<use href="#p" x="151" y="224"/>
<use href="#cp" x="167" y="213"/>
<use href="#cm" x="206" y="116"/>
<use href="#cp" x="198" y="128"/>
<use href="#cm" x="186" y="177"/>
<use href="#cm" x="137" y="254"/>
<use href="#cp" x="151" y="231"/>
<use href="#m" x="180" y="253"/>
<use href="#cp" x="211" y="126"/>
<use href="#p" x="162" y="234"/>
<use href="#cp" x="180" y="174"/>
<use href="#m" x="89" y="223"/>
<use href="#cp" x="130" y="171"/>
</g>
<g fill="#f08000">
<use href="#cp" x="136" y="231"/>
<use href="#cm" x="176" y="184"/>
<use href="#m" x="169" y="209"/>
<use href="#cp" x="746" y="221"/>
<use href="#cp" x="169" y="180"/>
<use href="#cm" x="214" y="103"/>
<use href="#cp" x="270" y="97"/>
<use href="#m" x="167" y="199"/>
<use href="#m" x="142" y="134"/>
<use href="#p" x="147" y="205"/>
<use href="#cp" x="669" y="102"/>
<use href="#cp" x="195" y="174"/>
<use href="#p" x="148" y="206"/>
<use href="#cm" x="252" y="88"/>
<use href="#cp" x="208" y="122"/>
<use href="#cp" x="229" y="124"/>
<use href="#cm" x="152" y="251"/>
<use href="#cp" x="245" y="84"/>
<use href="#cp" x="140" y="247"/>
<use href="#cp" x="177" y="179"/>
<use href="#cm" x="208" y="100"/>
<use href="#cp" x="154" y="233"/>
<use href="#cp" x="225" y="103"/>
<use href="#m" x="133" y="207"/>
<use href="#m" x="149" y="198"/>
<use href="#cp" x="191" y="187"/>
<use href="#cp" x="225" y="94"/>
<use href="#m" x="550" y="777"/>
<use href="#cp" x="257" y="86"/>
<use href="#m" x="563" y="775"/>
<use href="#cp" x="203" y="198"/>
<use href="#cm" x="153" y="253"/>
<use href="#cp" x="184" y="174"/>
<use href="#p" x="666" y="222"/>
<use href="#cp" x="196" y="176"/>
<use href="#cp" x="225" y="114"/>
<use href="#cm" x="170" y="247"/>
<use href="#m" x="194" y="135"/>
<use href="#m" x="132" y="118"/>
<use href="#p" x="223" y="121"/>
<use href="#cp" x="210" y="122"/>
<use href="#cp" x="196" y="143"/>
<use href="#m" x="204" y="184"/>
<use href="#m" x="614" y="213"/>
<use href="#cm" x="210" y="194"/>
<use href="#cp" x="219" y="114"/>
<use href="#cp" x="219" y="118"/>
<use href="#cp" x="138" y="250"/>
<use href="#cp" x="147" y="256"/>
<use href="#cp" x="168" y="255"/>
<use href="#cm" x="206" y="200"/>
<use href="#p" x="195" y="133"/>
<use href="#m" x="239" y="163"/>
<use href="#cm" x="150" y="236"/>
<use href="#cp" x="150" y="227"/>
<use href="#m" x="206" y="191"/>
<use href="#cp" x="216" y="198"/>
<use href="#m" x="543" y="81"/>
<use href="#p" x="156" y="237"/>
<use href="#cm" x="193" y="137"/>
<use href="#cm" x="235" y="108"/>
<use href="#m" x="674" y="225"/>
<use href="#p" x="222" y="103"/>
<use href="#cp" x="128" y="283"/>
<use href="#m" x="218" y="113"/>
<use href="#cp" x="172" y="224"/>
<use href="#cp" x="251" y="78"/>
<use href="#cm" x="229" y="86"/>
<use href="#p" x="218" y="198"/>
<use href="#p" x="163" y="222"/>
<use href="#m" x="195" y="202"/>
<use href="#cp" x="179" y="183"/>
<use href="#cm" x="197" y="146"/>
<use href="#cm" x="208" y="184"/>
<use href="#p" x="177" y="111"/>
<use href="#cp" x="200" y="192"/>
<use href="#cp" x="266" y="87"/>
<use href="#p" x="216" y="108"/>
<use href="#cp" x="155" y="215"/>
<use href="#p" x="179" y="186"/>
<use href="#m" x="133" y="225"/>
<use href="#cm" x="267" y="88"/>
<use href="#cp" x="219" y="106"/>
<use href="#cp" x="156" y="240"/>
<use href="#cm" x="228" y="108"/>
<use href="#m" x="185" y="216"/>
<use href="#m" x="218" y="106"/>
<use href="#p" x="183" y="259"/>
<use href="#m" x="156" y="207"/>
<use href="#p" x="176" y="242"/>
<use href="#cm" x="173" y="178"/>
<use href="#cp" x="219" y="123"/>
<use href="#m" x="546" y="797"/>
<use href="#m" x="137" y="198"/>
<use href="#m" x="208" y="120"/>
<use href="#cp" x="216" y="180"/>
<use href="#cp" x="276" y="82"/>
<use href="#m" x="552" y="768"/>
<use href="#cp" x="223" y="199"/>
<use href="#m" x="179" y="179"/>
<use href="#cp" x="41" y="228"/>
<use href="#m" x="158" y="139"/>
<use href="#m" x="686" y="198"/>
<use href="#cp" x="183" y="110"/>
<use href="#p" x="222" y="111"/>
<use href="#p" x="116" y="224"/>
<use href="#m" x="169" y="196"/>
<use href="#cp" x="278" y="89"/>
<use href="#cp" x="188" y="189"/>
<use href="#p" x="176" y="215"/>
<use href="#cm" x="218" y="182"/>
</g>
<g fill="#ff9c00">
<use href="#cp" x="263" y="74"/>
<use href="#cp" x="175" y="234"/>
<use href="#p" x="223" y="108"/>
<use href="#cp" x="155" y="234"/>
<use href="#cp" x="181" y="285"/>
<use href="#m" x="182" y="269"/>
<use href="#cp" x="203" y="106"/>
<use href="#p" x="250" y="82"/>
<use href="#cp" x="185" y="268"/>
<use href="#p" x="163" y="194"/>
<use href="#cp" x="224" y="107"/>
<use href="#cp" x="259" y="141"/>
<use href="#cm" x="133" y="227"/>
<use href="#p" x="662" y="194"/>
<use href="#cp" x="149" y="252"/>
<use href="#p" x="222" y="173"/>
<use href="#cp" x="129" y="227"/>
<use href="#p" x="202" y="131"/>
<use href="#cm" x="159" y="267"/>
<use href="#cp" x="180" y="227"/>
<use href="#m" x="687" y="201"/>
<use href="#cm" x="163" y="192"/>
<use href="#cp" x="704" y="20"/>
<use href="#cm" x="267" y="95"/>
<use href="#cp" x="777" y="187"/>
<use href="#cp" x="184" y="180"/>
<use href="#p" x="205" y="271"/>
<use href="#m" x="280" y="128"/>
<use href="#cp" x="286" y="135"/>
<use href="#cm" x="226" y="108"/>
<use href="#cp" x="152" y="196"/>
<use href="#m" x="241" y="147"/>
<use href="#m" x="216" y="274"/>
<use href="#p" x="170" y="267"/>
<use href="#cm" x="272" y="140"/>
<use href="#cp" x="211" y="111"/>
<use href="#cp" x="190" y="200"/>
<use href="#cp" x="218" y="198"/>
<use href="#cp" x="182" y="207"/>
<use href="#p" x="702" y="163"/>
<use href="#p" x="180" y="142"/>
<use href="#p" x="276" y="85"/>
<use href="#m" x="740" y="145"/>
<use href="#p" x="163" y="205"/>
<use href="#cp" x="207" y="183"/>
<use href="#m" x="200" y="270"/>
<use href="#cm" x="214" y="117"/>
<use href="#m" x="165" y="228"/>
<use href="#cm" x="262" y="82"/>
<use href="#m" x="154" y="262"/>
<use href="#p" x="172" y="268"/>
<use href="#p" x="180" y="134"/>
<use href="#p" x="277" y="145"/>
<use href="#cm" x="115" y="250"/>
<use href="#m" x="168" y="273"/>
<use href="#cm" x="243" y="97"/>
<use href="#cm" x="220" y="114"/>
<use href="#cm" x="193" y="202"/>
<use href="#p" x="172" y="273"/>
<use href="#m" x="50" y="212"/>
<use href="#p" x="189" y="186"/>
<use href="#cp" x="182" y="205"/>
<use href="#p" x="158" y="258"/>
<use href="#p" x="675" y="205"/>
<use href="#p" x="263" y="77"/>
<use href="#cp" x="191" y="169"/>
<use href="#cp" x="191" y="195"/>
<use href="#cp" x="114" y="244"/>
<use href="#p" x="201" y="114"/>
<use href="#cp" x="289" y="141"/>
<use href="#p" x="175" y="214"/>
<use href="#m" x="186" y="269"/>
<use href="#cp" x="238" y="114"/>
<use href="#m" x="188" y="193"/>
<use href="#cp" x="699" y="193"/>
<use href="#m" x="193" y="279"/>
<use href="#p" x="196" y="209"/>
<use href="#p" x="260" y="98"/>
<use href="#p" x="205" y="282"/>
<use href="#m" x="220" y="235"/>
<use href="#cp" x="175" y="132"/>
<use href="#cm" x="110" y="223"/>
<use href="#p" x="159" y="225"/>
<use href="#cm" x="157" y="203"/>
<use href="#cm" x="237" y="106"/>
<use href="#p" x="234" y="174"/>
<use href="#p" x="276" y="138"/>
<use href="#cm" x="143" y="259"/>
<use href="#cp" x="282" y="122"/>
<use href="#m" x="204" y="206"/>
<use href="#m" x="202" y="203"/>
<use href="#p" x="151" y="241"/>
<use href="#m" x="180" y="278"/>
<use href="#cm" x="167" y="213"/>
<use href="#cp" x="231" y="135"/>
<use href="#cp" x="192" y="125"/>
<use href="#p" x="240" y="76"/>
<use href="#cp" x="216" y="109"/>
<use href="#cm" x="243" y="107"/>
<use href="#cp" x="190" y="197"/>
<use href="#m" x="173" y="234"/>
<use href="#cm" x="126" y="220"/>
<use href="#cp" x="715" y="145"/>
<use href="#cm" x="225" y="173"/>
<use href="#m" x="74" y="173"/>
<use href="#cp" x="207" y="267"/>
<use href="#p" x="211" y="262"/>
<use href="#cp" x="199" y="270"/>
<use href="#m" x="185" y="169"/>
<use href="#cp" x="196" y="199"/>
<use href="#cp" x="186" y="224"/>
<use href="#cp" x="218" y="107"/>
<use href="#p" x="193" y="256"/>
<use href="#cp" x="197" y="193"/>
<use href="#p" x="230" y="170"/>
<use href="#m" x="249" y="144"/>
<use href="#m" x="705" y="227"/>
<use href="#m" x="143" y="233"/>
<use href="#p" x="203" y="125"/>
<use href="#m" x="261" y="140"/>
<use href="#m" x="185" y="205"/>
<use href="#cp" x="722" y="43"/>
<use href="#m" x="172" y="225"/>
<use href="#cp" x="204" y="202"/>
<use href="#p" x="131" y="252"/>
<use href="#cp" x="159" y="192"/>
<use href="#m" x="157" y="246"/>
<use href="#cm" x="99" y="198"/>
<use href="#p" x="280" y="129"/>
<use href="#p" x="176" y="220"/>
<use href="#m" x="247" y="96"/>
<use href="#cp" x="137" y="18"/>
<use href="#p" x="167" y="265"/>
<use href="#cp" x="202" y="197"/>
<use href="#m" x="162" y="242"/>
<use href="#m" x="646" y="231"/>
<use href="#cp" x="202" y="128"/>
<use href="#cp" x="203" y="137"/>
<use href="#cp" x="261" y="86"/>
<use href="#p" x="265" y="86"/>
<use href="#cp" x="222" y="113"/>
<use href="#cp" x="159" y="223"/>
<use href="#p" x="163" y="208"/>
<use href="#m" x="221" y="197"/>
<use href="#cm" x="223" y="175"/>
<use href="#cp" x="232" y="134"/>
<use href="#cp" x="198" y="295"/>
<use href="#m" x="636" y="207"/>
<use href="#p" x="204" y="278"/>
<use href="#cm" x="216" y="113"/>
<use href="#cp" x="247" y="107"/>
<use href="#p" x="198" y="166"/>
<use href="#cp" x="254" y="98"/>
<use href="#cm" x="248" y="82"/>
<use href="#cm" x="108" y="242"/>
<use href="#cp" x="202" y="192"/>
<use href="#p" x="194" y="192"/>
<use href="#cp" x="162" y="276"/>
</g>
<g fill="#ffb400">
<use href="#cp" x="303" y="132"/>
<use href="#cp" x="239" y="88"/>
<use href="#cm" x="204" y="215"/>
<use href="#cp" x="226" y="221"/>
<use href="#p" x="260" y="96"/>
<use href="#cm" x="204" y="189"/>
<use href="#cm" x="178" y="183"/>
<use href="#cm" x="226" y="215"/>
<use href="#cp" x="216" y="209"/>
<use href="#cp" x="205" y="220"/>
<use href="#m" x="212" y="191"/>
<use href="#p" x="196" y="281"/>
<use href="#p" x="266" y="96"/>
<use href="#cm" x="227" y="117"/>
<use href="#m" x="225" y="284"/>
<use href="#cp" x="250" y="141"/>
<use href="#m" x="216" y="233"/>
<use href="#cp" x="228" y="138"/>
<use href="#cp" x="201" y="225"/>
<use href="#cp" x="165" y="281"/>
<use href="#cm" x="182" y="200"/>
<use href="#p" x="184" y="262"/>
<use href="#m" x="163" y="207"/>
<use href="#cm" x="218" y="224"/>
<use href="#m" x="157" y="222"/>
<use href="#cm" x="284" y="135"/>
<use href="#cm" x="215" y="240"/>
<use href="#cm" x="182" y="182"/>
<use href="#cp" x="153" y="203"/>
<use href="#m" x="247" y="126"/>
<use href="#cm" x="270" y="91"/>
<use href="#cp" x="265" y="144"/>
<use href="#cm" x="226" y="203"/>
<use href="#p" x="229" y="144"/>
<use href="#p" x="180" y="212"/>
<use href="#cm" x="224" y="221"/>
<use href="#cp" x="193" y="197"/>
<use href="#cm" x="231" y="210"/>
<use href="#p" x="240" y="219"/>
<use href="#cp" x="249" y="145"/>
<use href="#m" x="220" y="117"/>
<use href="#cm" x="187" y="221"/>
<use href="#cm" x="233" y="224"/>
<use href="#cp" x="182" y="177"/>
<use href="#m" x="218" y="231"/>
<use href="#cm" x="183" y="184"/>
<use href="#m" x="204" y="232"/>
<use href="#p" x="235" y="145"/>
<use href="#cp" x="237" y="225"/>
<use href="#cp" x="283" y="124"/>
<use href="#cp" x="209" y="243"/>
<use href="#m" x="210" y="237"/>
<use href="#p" x="202" y="259"/>
<use href="#cm" x="240" y="104"/>
<use href="#m" x="186" y="126"/>
<use href="#m" x="243" y="89"/>
<use href="#p" x="213" y="111"/>
<use href="#cp" x="205" y="124"/>
<use href="#cm" x="234" y="200"/>
<use href="#m" x="201" y="177"/>
<use href="#p" x="228" y="228"/>
<use href="#m" x="312" y="118"/>
<use href="#p" x="150" y="245"/>
<use href="#p" x="193" y="258"/>
<use href="#cm" x="186" y="228"/>
<use href="#m" x="180" y="240"/>
<use href="#cp" x="224" y="138"/>
<use href="#p" x="207" y="105"/>
<use href="#m" x="188" y="223"/>
<use href="#cm" x="184" y="199"/>
<use href="#p" x="238" y="152"/>
<use href="#cm" x="229" y="112"/>
<use href="#cp" x="211" y="231"/>
<use href="#cm" x="199" y="118"/>
<use href="#cp" x="198" y="188"/>
<use href="#cp" x="231" y="200"/>
<use href="#cm" x="204" y="208"/>
<use href="#cm" x="208" y="204"/>
<use href="#cp" x="224" y="105"/>
<use href="#cp" x="200" y="198"/>
<use href="#p" x="233" y="219"/>
<use href="#cm" x="196" y="130"/>
<use href="#cm" x="204" y="210"/>
<use href="#cm" x="226" y="222"/>
<use href="#cp" x="247" y="144"/>
<use href="#p" x="217" y="199"/>
<use href="#cp" x="294" y="137"/>
<use href="#cp" x="582" y="37"/>
<use href="#m" x="197" y="197"/>
<use href="#m" x="196" y="209"/>
<use href="#m" x="285" y="124"/>
<use href="#m" x="166" y="262"/>
<use href="#cm" x="158" y="209"/>
<use href="#p" x="152" y="253"/>
<use href="#p" x="220" y="231"/>
<use href="#cp" x="243" y="110"/>
<use href="#cp" x="197" y="198"/>
<use href="#p" x="166" y="261"/>
<use href="#p" x="180" y="171"/>
<use href="#p" x="217" y="224"/>
<use href="#cp" x="192" y="188"/>
<use href="#m" x="143" y="238"/>
<use href="#cp" x="241" y="205"/>
<use href="#m" x="220" y="125"/>
<use href="#p" x="209" y="275"/>
<use href="#cp" x="210" y="216"/>
<use href="#cp" x="222" y="239"/>
<use href="#p" x="190" y="222"/>
<use href="#cm" x="196" y="236"/>
<use href="#m" x="231" y="118"/>
<use href="#m" x="232" y="141"/>
<use href="#m" x="218" y="234"/>
<use href="#cm" x="152" y="198"/>
<use href="#p" x="183" y="218"/>
<use href="#cp" x="208" y="218"/>
<use href="#cp" x="236" y="213"/>
<use href="#p" x="132" y="242"/>
<use href="#cm" x="206" y="222"/>
<use href="#cm" x="220" y="237"/>
<use href="#m" x="215" y="237"/>
<use href="#cp" x="221" y="216"/>
<use href="#cp" x="208" y="137"/>
<use href="#p" x="228" y="222"/>
<use href="#cp" x="704" y="245"/>
<use href="#cm" x="191" y="113"/>
<use href="#cp" x="244" y="90"/>
<use href="#cm" x="272" y="123"/>
<use href="#cp" x="203" y="198"/>
<use href="#m" x="238" y="122"/>
<use href="#cm" x="196" y="177"/>
<use href="#cm" x="203" y="144"/>
<use href="#cm" x="244" y="90"/>
<use href="#p" x="206" y="228"/>
<use href="#cp" x="213" y="239"/>
<use href="#cm" x="190" y="292"/>
<use href="#p" x="234" y="191"/>
<use href="#p" x="207" y="218"/>
<use href="#p" x="223" y="232"/>
<use href="#p" x="224" y="199"/>
<use href="#cp" x="222" y="215"/>
<use href="#cp" x="276" y="140"/>
<use href="#cp" x="244" y="143"/>
<use href="#p" x="214" y="207"/>
<use href="#m" x="216" y="191"/>
<use href="#cm" x="187" y="130"/>
<use href="#cm" x="186" y="196"/>
<use href="#cm" x="221" y="209"/>
<use href="#cp" x="211" y="206"/>
<use href="#cm" x="218" y="131"/>
<use href="#cm" x="166" y="205"/>
<use href="#p" x="218" y="204"/>
<use href="#cp" x="221" y="112"/>
<use href="#p" x="242" y="111"/>
<use href="#p" x="206" y="142"/>
<use href="#m" x="216" y="195"/>
<use href="#cp" x="195" y="124"/>
<use href="#cp" x="201" y="232"/>
<use href="#cp" x="240" y="218"/>
<use href="#cm" x="202" y="196"/>
<use href="#p" x="225" y="200"/>
<use href="#cm" x="191" y="214"/>
<use href="#p" x="226" y="229"/>
<use href="#cp" x="228" y="104"/>
<use href="#cp" x="193" y="201"/>
<use href="#cp" x="211" y="235"/>
<use href="#cp" x="235" y="203"/>
<use href="#cp" x="234" y="213"/>
<use href="#cm" x="198" y="217"/>
<use href="#p" x="178" y="238"/>
<use href="#cm" x="660" y="209"/>
<use href="#p" x="172" y="279"/>
<use href="#cm" x="184" y="278"/>
<use href="#m" x="220" y="218"/>
<use href="#m" x="642" y="268"/>
<use href="#cp" x="192" y="237"/>
<use href="#cp" x="221" y="123"/>
<use href="#cp" x="199" y="135"/>
<use href="#cp" x="239" y="141"/>
</g>
<g fill="#ffd800">
<use href="#cm" x="207" y="212"/>
<use href="#m" x="241" y="77"/>
<use href="#cp" x="215" y="209"/>
<use href="#cp" x="224" y="210"/>
<use href="#cp" x="236" y="101"/>
<use href="#cp" x="184" y="258"/>
<use href="#m" x="197" y="246"/>
<use href="#p" x="219" y="232"/>
<use href="#cm" x="216" y="225"/>
<use href="#cp" x="212" y="218"/>
<use href="#p" x="201" y="219"/>
<use href="#cp" x="226" y="221"/>
<use href="#cm" x="196" y="245"/>
<use href="#cp" x="223" y="214"/>
<use href="#cm" x="225" y="223"/>
<use href="#cp" x="206" y="221"/>
<use href="#cm" x="208" y="233"/>
<use href="#cm" x="212" y="280"/>
<use href="#cm" x="245" y="205"/>
<use href="#cp" x="262" y="110"/>
<use href="#cp" x="217" y="221"/>
<use href="#cm" x="278" y="79"/>
<use href="#cm" x="225" y="206"/>
<use href="#cm" x="201" y="222"/>
<use href="#cm" x="206" y="212"/>
<use href="#p" x="180" y="254"/>
<use href="#cp" x="192" y="240"/>
<use href="#p" x="195" y="206"/>
<use href="#p" x="219" y="202"/>
<use href="#m" x="187" y="273"/>
<use href="#cp" x="236" y="194"/>
<use href="#cp" x="279" y="125"/>
<use href="#p" x="200" y="239"/>
<use href="#cm" x="228" y="214"/>
<use href="#cp" x="226" y="103"/>
<use href="#cm" x="201" y="226"/>
<use href="#cm" x="207" y="202"/>
<use href="#m" x="217" y="225"/>
<use href="#m" x="223" y="208"/>
<use href="#p" x="211" y="202"/>
<use href="#p" x="228" y="218"/>
<use href="#cp" x="216" y="216"/>
<use href="#cp" x="225" y="214"/>
<use href="#m" x="214" y="213"/>
<use href="#cp" x="217" y="199"/>
<use href="#p" x="291" y="87"/>
<use href="#cm" x="276" y="108"/>
<use href="#cp" x="202" y="229"/>
<use href="#cm" x="201" y="221"/>
<use href="#cp" x="204" y="222"/>
<use href="#cp" x="189" y="212"/>
<use href="#cp" x="286" y="143"/>
<use href="#cp" x="225" y="217"/>
<use href="#cp" x="248" y="127"/>
<use href="#cp" x="227" y="213"/>
<use href="#p" x="207" y="287"/>
<use href="#cp" x="208" y="211"/>
<use href="#cm" x="206" y="232"/>
<use href="#p" x="271" y="104"/>
<use href="#cp" x="226" y="221"/>
<use href="#cp" x="203" y="229"/>
<use href="#cm" x="223" y="211"/>
<use href="#p" x="202" y="234"/>
<use href="#p" x="219" y="226"/>
<use href="#m" x="205" y="233"/>
<use href="#cp" x="203" y="229"/>
<use href="#cm" x="214" y="219"/>
<use href="#cp" x="216" y="191"/>
<use href="#cp" x="216" y="224"/>
<use href="#cp" x="206" y="229"/>
<use href="#cp" x="233" y="227"/>
<use href="#p" x="218" y="224"/>
<use href="#cp" x="202" y="231"/>
<use href="#p" x="176" y="277"/>
<use href="#cp" x="241" y="151"/>
<use href="#cm" x="182" y="257"/>
<use href="#p" x="247" y="171"/>
<use href="#cp" x="215" y="224"/>
<use href="#cp" x="279" y="123"/>
<use href="#m" x="289" y="142"/>
<use href="#cp" x="195" y="208"/>
<use href="#cp" x="234" y="217"/>
<use href="#p" x="233" y="204"/>
<use href="#m" x="181" y="282"/>
<use href="#cp" x="230" y="227"/>
<use href="#cm" x="222" y="224"/>
<use href="#cm" x="207" y="232"/>
<use href="#p" x="252" y="128"/>
<use href="#cp" x="283" y="125"/>
<use href="#cp" x="214" y="218"/>
<use href="#cp" x="207" y="214"/>
<use href="#m" x="209" y="215"/>
<use href="#m" x="234" y="214"/>
<use href="#m" x="168" y="272"/>
<use href="#cm" x="211" y="220"/>
<use href="#cp" x="221" y="212"/>
<use href="#cp" x="218" y="228"/>
<use href="#cp" x="209" y="234"/>
<use href="#cp" x="202" y="241"/>
<use href="#p" x="258" y="110"/>
<use href="#p" x="272" y="119"/>
<use href="#m" x="199" y="235"/>
<use href="#p" x="210" y="213"/>
<use href="#m" x="208" y="211"/>
<use href="#m" x="214" y="207"/>
<use href="#cp" x="259" y="148"/>
<use href="#cp" x="203" y="217"/>
<use href="#cm" x="233" y="203"/>
<use href="#cp" x="181" y="271"/>
<use href="#m" x="700" y="233"/>
<use href="#cp" x="242" y="209"/>
<use href="#cm" x="206" y="231"/>
<use href="#p" x="186" y="262"/>
<use href="#cp" x="261" y="92"/>
<use href="#cm" x="230" y="101"/>
<use href="#cp" x="211" y="231"/>
<use href="#cm" x="221" y="205"/>
<use href="#m" x="203" y="192"/>
<use href="#cp" x="225" y="208"/>
<use href="#cm" x="226" y="213"/>
<use href="#cp" x="227" y="208"/>
<use href="#cm" x="205" y="226"/>
<use href="#cm" x="229" y="219"/>
<use href="#cp" x="196" y="240"/>
<use href="#cm" x="281" y="108"/>
<use href="#m" x="191" y="228"/>
<use href="#m" x="182" y="246"/>
<use href="#cp" x="265" y="108"/>
<use href="#cp" x="201" y="228"/>
<use href="#cp" x="223" y="207"/>
<use href="#m" x="212" y="217"/>
<use href="#cm" x="184" y="250"/>
<use href="#cm" x="265" y="100"/>
<use href="#cp" x="281" y="103"/>
<use href="#p" x="166" y="274"/>
<use href="#p" x="150" y="264"/>
<use href="#cp" x="217" y="227"/>
<use href="#cp" x="186" y="232"/>
<use href="#cm" x="204" y="211"/>
<use href="#cm" x="208" y="206"/>
<use href="#cp" x="218" y="221"/>
<use href="#p" x="176" y="248"/>
<use href="#cm" x="216" y="217"/>
<use href="#cp" x="208" y="215"/>
<use href="#m" x="194" y="237"/>
<use href="#cp" x="212" y="218"/>
<use href="#cp" x="224" y="222"/>
<use href="#p" x="241" y="217"/>
<use href="#cm" x="235" y="115"/>
<use href="#cp" x="260" y="120"/>
<use href="#cm" x="228" y="214"/>
<use href="#cm" x="201" y="227"/>
<use href="#cp" x="208" y="229"/>
<use href="#cp" x="208" y="203"/>
<use href="#cm" x="224" y="218"/>
<use href="#cp" x="214" y="204"/>
<use href="#cm" x="195" y="287"/>
<use href="#cp" x="238" y="173"/>
<use href="#m" x="195" y="229"/>
<use href="#cp" x="201" y="221"/>
<use href="#cp" x="199" y="235"/>
<use href="#cm" x="283" y="88"/>
<use href="#cp" x="157" y="258"/>
<use href="#m" x="220" y="219"/>
<use href="#cp" x="273" y="104"/>
<use href="#cm" x="241" y="89"/>
<use href="#cm" x="197" y="210"/>
<use href="#m" x="272" y="117"/>
<use href="#cp" x="285" y="92"/>
<use href="#cp" x="207" y="225"/>
<use href="#p" x="204" y="240"/>
<use href="#cm" x="224" y="215"/>
<use href="#cm" x="228" y="223"/>
<use href="#cp" x="225" y="226"/>
<use href="#p" x="221" y="228"/>
<use href="#p" x="230" y="233"/>
<use href="#cm" x="215" y="210"/>
<use href="#p" x="270" y="112"/>
<use href="#cm" x="207" y="227"/>
<use href="#cp" x="230" y="205"/>
<use href="#cp" x="670" y="211"/>
<use href="#cp" x="222" y="212"/>
<use href="#cm" x="208" y="225"/>
<use href="#cp" x="200" y="238"/>
<use href="#cm" x="216" y="214"/>
<use href="#m" x="197" y="222"/>
<use href="#cp" x="204" y="207"/>
<use href="#cp" x="210" y="217"/>
<use href="#p" x="218" y="221"/>
<use href="#cm" x="202" y="231"/>
<use href="#p" x="215" y="209"/>
<use href="#cp" x="284" y="141"/>
<use href="#cp" x="208" y="207"/>
<use href="#cp" x="223" y="217"/>
<use href="#cp" x="254" y="125"/>
<use href="#cp" x="222" y="218"/>
<use href="#cp" x="201" y="225"/>
<use href="#cm" x="174" y="278"/>
<use href="#m" x="226" y="193"/>
<use href="#m" x="206" y="290"/>
<use href="#cm" x="268" y="116"/>
<use href="#cp" x="215" y="218"/>
<use href="#p" x="211" y="224"/>
<use href="#m" x="281" y="74"/>
<use href="#cp" x="204" y="239"/>
<use href="#cp" x="213" y="232"/>
<use href="#cp" x="211" y="235"/>
<use href="#cp" x="210" y="231"/>
<use href="#cp" x="279" y="87"/>
<use href="#m" x="157" y="276"/>
<use href="#m" x="216" y="282"/>
<use href="#m" x="202" y="222"/>
<use href="#p" x="305" y="131"/>
<use href="#cp" x="228" y="205"/>
<use href="#p" x="214" y="207"/>
<use href="#cp" x="215" y="211"/>
<use href="#p" x="118" y="286"/>
<use href="#m" x="170" y="283"/>
<use href="#cp" x="267" y="126"/>
<use href="#m" x="186" y="241"/>
<use href="#cp" x="263" y="89"/>
<use href="#cp" x="209" y="291"/>
<use href="#cm" x="229" y="146"/>
<use href="#m" x="256" y="85"/>
<use href="#cm" x="186" y="226"/>
<use href="#cm" x="208" y="207"/>
<use href="#m" x="244" y="224"/>
<use href="#cp" x="235" y="205"/>
<use href="#cp" x="197" y="203"/>
<use href="#cm" x="208" y="240"/>
<use href="#p" x="260" y="120"/>
<use href="#cm" x="242" y="140"/>
<use href="#cp" x="174" y="256"/>
<use href="#cm" x="217" y="214"/>
<use href="#m" x="236" y="227"/>
<use href="#cp" x="183" y="198"/>
<use href="#cp" x="251" y="202"/>
<use href="#m" x="237" y="216"/>
<use href="#cp" x="222" y="216"/>
<use href="#cm" x="270" y="123"/>
<use href="#cp" x="226" y="214"/>
<use href="#cm" x="218" y="230"/>
<use href="#cm" x="264" y="96"/>
<use href="#m" x="231" y="205"/>
<use href="#cm" x="189" y="249"/>
<use href="#p" x="220" y="222"/>
<use href="#m" x="217" y="211"/>
<use href="#cp" x="223" y="210"/>
<use href="#cp" x="177" y="259"/>
<use href="#cp" x="229" y="229"/>
<use href="#cp" x="176" y="254"/>
<use href="#cm" x="249" y="147"/>
<use href="#cp" x="198" y="231"/>
<use href="#cp" x="220" y="213"/>
<use href="#cp" x="222" y="207"/>
<use href="#cm" x="201" y="220"/>
<use href="#m" x="218" y="225"/>
<use href="#p" x="222" y="212"/>
<use href="#cp" x="231" y="213"/>
<use href="#m" x="218" y="215"/>
<use href="#cm" x="214" y="229"/>
<use href="#p" x="205" y="216"/>
<use href="#cp" x="211" y="213"/>
<use href="#p" x="158" y="271"/>
<use href="#cm" x="223" y="240"/>
<use href="#p" x="272" y="140"/>
<use href="#m" x="181" y="253"/>
<use href="#m" x="237" y="191"/>
<use href="#cp" x="202" y="205"/>
<use href="#cp" x="200" y="233"/>
<use href="#p" x="121" y="261"/>
<use href="#m" x="226" y="208"/>
<use href="#cp" x="198" y="247"/>
<use href="#cp" x="261" y="98"/>
<use href="#cm" x="211" y="196"/>
<use href="#cp" x="201" y="220"/>
<use href="#cp" x="213" y="223"/>
<use href="#cm" x="220" y="220"/>
<use href="#p" x="134" y="274"/>
<use href="#cm" x="211" y="217"/>
<use href="#m" x="201" y="239"/>
<use href="#cp" x="212" y="225"/>
<use href="#cm" x="193" y="234"/>
<use href="#cp" x="188" y="248"/>
<use href="#m" x="193" y="227"/>
<use href="#p" x="229" y="220"/>
<use href="#cm" x="212" y="222"/>
<use href="#m" x="208" y="209"/>
<use href="#cp" x="212" y="212"/>
<use href="#cm" x="215" y="199"/>
<use href="#cp" x="215" y="234"/>
<use href="#m" x="218" y="223"/>
<use href="#p" x="210" y="220"/>
<use href="#p" x="236" y="149"/>
<use href="#p" x="235" y="198"/>
<use href="#cm" x="191" y="244"/>
<use href="#cp" x="220" y="230"/>
<use href="#cm" x="260" y="119"/>
<use href="#cm" x="193" y="235"/>
<use href="#p" x="263" y="106"/>
<use href="#m" x="175" y="276"/>
<use href="#cp" x="218" y="199"/>
<use href="#cm" x="221" y="210"/>
<use href="#m" x="230" y="207"/>
<use href="#cm" x="186" y="256"/>
<use href="#cm" x="208" y="214"/>
<use href="#cp" x="210" y="215"/>
<use href="#cp" x="211" y="228"/>
<use href="#cp" x="179" y="257"/>
<use href="#cp" x="192" y="209"/>
<use href="#cm" x="261" y="133"/>
</g>
<g fill="#ffff00">
<use href="#cp" x="283" y="86"/>
<use href="#cp" x="236" y="200"/>
<use href="#cp" x="247" y="220"/>
<use href="#cp" x="245" y="199"/>
<use href="#cp" x="182" y="257"/>
<use href="#p" x="175" y="255"/>
<use href="#p" x="219" y="208"/>
<use href="#cp" x="206" y="225"/>
<use href="#cp" x="229" y="202"/>
<use href="#m" x="184" y="255"/>
<use href="#cp" x="269" y="128"/>
<use href="#p" x="224" y="202"/>
<use href="#cp" x="222" y="215"/>
<use href="#cp" x="209" y="154"/>
<use href="#cm" x="224" y="209"/>
<use href="#cp" x="216" y="228"/>
<use href="#cm" x="222" y="230"/>
<use href="#cp" x="207" y="234"/>
<use href="#p" x="208" y="216"/>
<use href="#cm" x="191" y="251"/>
<use href="#cp" x="233" y="196"/>
<use href="#m" x="184" y="248"/>
<use href="#m" x="257" y="126"/>
<use href="#p" x="215" y="220"/>
<use href="#cp" x="242" y="215"/>
<use href="#cm" x="244" y="158"/>
<use href="#p" x="198" y="148"/>
<use href="#cp" x="203" y="226"/>
<use href="#p" x="256" y="126"/>
<use href="#cp" x="284" y="125"/>
<use href="#m" x="202" y="219"/>
<use href="#cp" x="202" y="221"/>
<use href="#p" x="206" y="221"/>
<use href="#p" x="273" y="120"/>
<use href="#cp" x="207" y="217"/>
<use href="#p" x="274" y="113"/>
<use href="#p" x="161" y="276"/>
<use href="#p" x="198" y="225"/>
<use href="#cm" x="232" y="222"/>
<use href="#p" x="222" y="210"/>
<use href="#cp" x="218" y="226"/>
<use href="#cp" x="243" y="212"/>
<use href="#p" x="230" y="215"/>
<use href="#m" x="213" y="221"/>
<use href="#cp" x="199" y="231"/>
<use href="#cm" x="241" y="195"/>
<use href="#cp" x="223" y="152"/>
<use href="#cp" x="187" y="236"/>
<use href="#m" x="175" y="257"/>
<use href="#p" x="224" y="133"/>
<use href="#cp" x="260" y="119"/>
<use href="#cm" x="267" y="148"/>
<use href="#p" x="198" y="268"/>
<use href="#cp" x="248" y="215"/>
<use href="#cp" x="171" y="260"/>
<use href="#cp" x="213" y="195"/>
<use href="#cp" x="226" y="215"/>
<use href="#cp" x="246" y="206"/>
<use href="#m" x="260" y="131"/>
<use href="#m" x="172" y="260"/>
<use href="#p" x="233" y="208"/>
<use href="#m" x="222" y="223"/>
<use href="#cp" x="273" y="126"/>
<use href="#p" x="199" y="232"/>
<use href="#cm" x="212" y="200"/>
<use href="#p" x="209" y="151"/>
<use href="#cp" x="208" y="218"/>
<use href="#cm" x="251" y="130"/>
<use href="#cp" x="220" y="216"/>
<use href="#m" x="208" y="224"/>
<use href="#m" x="271" y="89"/>
<use href="#cp" x="215" y="133"/>
<use href="#cm" x="197" y="225"/>
<use href="#cp" x="217" y="222"/>
<use href="#m" x="222" y="254"/>
<use href="#m" x="204" y="149"/>
<use href="#cp" x="178" y="258"/>
<use href="#cp" x="250" y="200"/>
<use href="#cp" x="221" y="200"/>
<use href="#p" x="228" y="146"/>
<use href="#cp" x="224" y="228"/>
<use href="#m" x="236" y="220"/>
<use href="#p" x="592" y="75"/>
<use href="#cm" x="215" y="207"/>
<use href="#cp" x="234" y="231"/>
<use href="#cm" x="196" y="237"/>
<use href="#p" x="212" y="244"/>
<use href="#cp" x="235" y="210"/>
<use href="#cm" x="213" y="227"/>
<use href="#cm" x="217" y="216"/>
<use href="#p" x="188" y="239"/>
<use href="#cp" x="222" y="211"/>
<use href="#cm" x="223" y="208"/>
<use href="#cm" x="226" y="212"/>
<use href="#m" x="208" y="204"/>
<use href="#m" x="174" y="253"/>
<use href="#m" x="202" y="231"/>
<use href="#cp" x="215" y="283"/>
<use href="#cm" x="253" y="207"/>
<use href="#cp" x="219" y="207"/>
<use href="#cp" x="216" y="221"/>
<use href="#cm" x="214" y="229"/>
<use href="#cp" x="220" y="226"/>
<use href="#cm" x="180" y="258"/>
<use href="#cm" x="183" y="257"/>
<use href="#cm" x="206" y="209"/>
<use href="#cp" x="273" y="122"/>
<use href="#cp" x="201" y="246"/>
<use href="#cp" x="273" y="99"/>
<use href="#cp" x="185" y="259"/>
<use href="#m" x="207" y="213"/>
<use href="#cp" x="175" y="263"/>
<use href="#cm" x="222" y="227"/>
<use href="#cp" x="284" y="103"/>
<use href="#cp" x="227" y="210"/>
<use href="#cp" x="224" y="222"/>
<use href="#cp" x="293" y="85"/>
<use href="#cm" x="208" y="220"/>
<use href="#cp" x="220" y="222"/>
<use href="#cp" x="199" y="228"/>
<use href="#cm" x="177" y="267"/>
<use href="#m" x="568" y="140"/>
<use href="#p" x="197" y="151"/>
<use href="#cp" x="225" y="199"/>
<use href="#p" x="202" y="224"/>
<use href="#cp" x="208" y="214"/>
<use href="#m" x="206" y="214"/>
<use href="#cp" x="229" y="208"/>
<use href="#cp" x="246" y="200"/>
<use href="#cp" x="224" y="201"/>
<use href="#cp" x="238" y="222"/>
<use href="#cp" x="272" y="134"/>
<use href="#cp" x="227" y="208"/>
<use href="#cm" x="197" y="225"/>
<use href="#cp" x="174" y="266"/>
<use href="#cm" x="196" y="236"/>
<use href="#cp" x="233" y="208"/>
<use href="#cp" x="225" y="209"/>
<use href="#cp" x="225" y="206"/>
<use href="#cm" x="195" y="227"/>
<use href="#cp" x="216" y="223"/>
<use href="#p" x="247" y="163"/>
<use href="#cp" x="224" y="224"/>
<use href="#cm" x="180" y="257"/>
<use href="#cp" x="265" y="123"/>
<use href="#cm" x="278" y="115"/>
<use href="#cp" x="247" y="204"/>
<use href="#cp" x="195" y="232"/>
<use href="#m" x="226" y="222"/>
<use href="#cp" x="236" y="199"/>
<use href="#cp" x="213" y="217"/>
<use href="#m" x="228" y="209"/>
<use href="#cp" x="177" y="266"/>
<use href="#m" x="140" y="258"/>
<use href="#cp" x="219" y="207"/>
<use href="#cp" x="256" y="113"/>
<use href="#cp" x="218" y="226"/>
<use href="#cp" x="207" y="232"/>
<use href="#p" x="205" y="214"/>
<use href="#cm" x="196" y="251"/>
<use href="#cp" x="224" y="197"/>
<use href="#p" x="193" y="214"/>
<use href="#cp" x="247" y="212"/>
<use href="#m" x="188" y="231"/>
<use href="#m" x="235" y="204"/>
<use href="#cp" x="261" y="107"/>
<use href="#cp" x="175" y="266"/>
<use href="#cm" x="201" y="242"/>
<use href="#cp" x="203" y="220"/>
<use href="#cp" x="277" y="134"/>
<use href="#cp" x="222" y="204"/>
<use href="#cp" x="235" y="197"/>
<use href="#cm" x="219" y="210"/>
<use href="#cp" x="199" y="222"/>
<use href="#cm" x="195" y="236"/>
<use href="#cp" x="200" y="229"/>
<use href="#cp" x="296" y="129"/>
<use href="#p" x="207" y="234"/>
<use href="#p" x="187" y="230"/>
<use href="#cp" x="276" y="131"/>
<use href="#m" x="273" y="147"/>
<use href="#cp" x="196" y="227"/>
<use href="#p" x="210" y="226"/>
<use href="#cp" x="234" y="196"/>
<use href="#cm" x="218" y="211"/>
<use href="#p" x="203" y="231"/>
<use href="#p" x="215" y="228"/>
<use href="#cm" x="223" y="218"/>
<use href="#p" x="221" y="238"/>
<use href="#p" x="278" y="105"/>
<use href="#p" x="176" y="265"/>
<use href="#cp" x="199" y="242"/>
<use href="#cm" x="216" y="204"/>
<use href="#cp" x="212" y="243"/>
<use href="#cp" x="203" y="217"/>
<use href="#cp" x="235" y="202"/>
<use href="#m" x="208" y="217"/>
<use href="#cm" x="283" y="109"/>
<use href="#cm" x="247" y="206"/>
<use href="#cp" x="217" y="235"/>
<use href="#cm" x="193" y="215"/>
<use href="#p" x="221" y="206"/>
<use href="#cm" x="174" y="257"/>
<use href="#m" x="200" y="234"/>
<use href="#cp" x="214" y="197"/>
<use href="#m" x="205" y="213"/>
<use href="#cm" x="239" y="203"/>
<use href="#cp" x="215" y="216"/>
<use href="#cp" x="231" y="218"/>
<use href="#cp" x="207" y="223"/>
<use href="#p" x="228" y="210"/>
<use href="#cm" x="172" y="258"/>
<use href="#p" x="206" y="219"/>
<use href="#cp" x="195" y="217"/>
<use href="#cp" x="292" y="106"/>
<use href="#cp" x="183" y="247"/>
<use href="#m" x="244" y="198"/>
<use href="#p" x="93" y="174"/>
<use href="#p" x="223" y="222"/>
<use href="#cm" x="169" y="270"/>
<use href="#cp" x="223" y="213"/>
<use href="#cp" x="224" y="218"/>
<use href="#cp" x="278" y="146"/>
<use href="#cp" x="217" y="211"/>
<use href="#p" x="220" y="208"/>
<use href="#cp" x="177" y="262"/>
<use href="#cp" x="225" y="195"/>
<use href="#cp" x="169" y="261"/>
<use href="#cm" x="198" y="230"/>
<use href="#cp" x="230" y="145"/>
<use href="#cm" x="268" y="119"/>
<use href="#p" x="200" y="148"/>
<use href="#p" x="222" y="215"/>
<use href="#cp" x="209" y="217"/>
<use href="#cp" x="204" y="222"/>
<use href="#cp" x="278" y="93"/>
<use href="#p" x="222" y="197"/>
<use href="#p" x="203" y="154"/>
<use href="#p" x="216" y="220"/>
<use href="#cm" x="221" y="224"/>
<use href="#p" x="196" y="216"/>
<use href="#cp" x="209" y="233"/>
<use href="#cp" x="225" y="215"/>
<use href="#cm" x="188" y="244"/>
<use href="#cp" x="212" y="216"/>
<use href="#p" x="176" y="259"/>
<use href="#cp" x="217" y="197"/>
<use href="#cp" x="233" y="199"/>
<use href="#m" x="203" y="282"/>
<use href="#m" x="227" y="129"/>
<use href="#p" x="212" y="223"/>
<use href="#cp" x="176" y="268"/>
<use href="#p" x="204" y="147"/>
<use href="#cp" x="215" y="217"/>
<use href="#cm" x="210" y="216"/>
<use href="#p" x="662" y="26"/>
<use href="#cp" x="202" y="232"/>
<use href="#cp" x="194" y="236"/>
<use href="#cp" x="231" y="195"/>
<use href="#cm" x="183" y="263"/>
<use href="#m" x="236" y="205"/>
<use href="#p" x="207" y="220"/>
<use href="#cp" x="652" y="19"/>
<use href="#cp" x="605" y="25"/>
<use href="#m" x="181" y="260"/>
<use href="#p" x="179" y="264"/>
<use href="#p" x="209" y="231"/>
<use href="#cm" x="203" y="228"/>
<use href="#cp" x="225" y="217"/>
<use href="#cp" x="244" y="211"/>
<use href="#cp" x="176" y="258"/>
<use href="#cp" x="211" y="233"/>
<use href="#p" x="212" y="223"/>
<use href="#cm" x="234" y="151"/>
<use href="#cm" x="289" y="137"/>
<use href="#cp" x="245" y="207"/>
<use href="#p" x="237" y="219"/>
<use href="#p" x="254" y="116"/>
<use href="#cm" x="219" y="217"/>
<use href="#cm" x="225" y="154"/>
<use href="#cm" x="223" y="223"/>
<use href="#m" x="183" y="226"/>
<use href="#cp" x="306" y="104"/>
<use href="#p" x="231" y="205"/>
<use href="#cm" x="218" y="211"/>
<use href="#m" x="179" y="256"/>
<use href="#cp" x="189" y="226"/>
<use href="#cm" x="210" y="211"/>
<use href="#cp" x="203" y="225"/>
<use href="#cp" x="220" y="188"/>
<use href="#m" x="252" y="172"/>
<use href="#cm" x="217" y="209"/>
<use href="#cp" x="173" y="254"/>
<use href="#cp" x="212" y="212"/>
<use href="#p" x="143" y="287"/>
<use href="#m" x="213" y="207"/>
<use href="#cp" x="194" y="224"/>
<use href="#cp" x="169" y="269"/>
<use href="#m" x="228" y="214"/>
<use href="#cp" x="283" y="130"/>
<use href="#p" x="230" y="213"/>
<use href="#p" x="277" y="114"/>
<use href="#m" x="210" y="217"/>
<use href="#cp" x="201" y="229"/>
<use href="#cm" x="196" y="233"/>
<use href="#cp" x="275" y="117"/>
<use href="#p" x="258" y="120"/>
<use href="#p" x="255" y="126"/>
<use href="#cm" x="228" y="217"/>
<use href="#p" x="175" y="267"/>
<use href="#cm" x="227" y="202"/>
<use href="#cp" x="218" y="220"/>
<use href="#p" x="221" y="212"/>
<use href="#cp" x="218" y="230"/>
<use href="#cp" x="206" y="229"/>
<use href="#cm" x="219" y="228"/>
<use href="#cm" x="277" y="99"/>
<use href="#p" x="212" y="215"/>
<use href="#cp" x="177" y="260"/>
<use href="#cm" x="201" y="217"/>
<use href="#cp" x="212" y="215"/>
<use href="#cp" x="197" y="230"/>
<use href="#cp" x="286" y="125"/>
<use href="#cp" x="224" y="220"/>
<use href="#cm" x="247" y="207"/>
<use href="#p" x="215" y="150"/>
<use href="#cm" x="225" y="205"/>
<use href="#p" x="223" y="209"/>
<use href="#m" x="216" y="226"/>
<use href="#cp" x="202" y="219"/>
<use href="#m" x="215" y="220"/>
<use href="#p" x="229" y="217"/>
<use href="#m" x="186" y="220"/>
<use href="#cm" x="209" y="208"/>
<use href="#cm" x="235" y="223"/>
<use href="#cp" x="198" y="150"/>
<use href="#cp" x="250" y="237"/>
<use href="#cm" x="207" y="222"/>
<use href="#cm" x="214" y="216"/>
<use href="#p" x="262" y="120"/>
<use href="#cm" x="230" y="215"/>
<use href="#cp" x="247" y="152"/>
<use href="#cm" x="204" y="227"/>
<use href="#p" x="204" y="221"/>
<use href="#cp" x="245" y="216"/>
<use href="#cp" x="278" y="100"/>
<use href="#cp" x="148" y="272"/>
<use href="#cp" x="259" y="116"/>
<use href="#m" x="224" y="209"/>
<use href="#cp" x="228" y="221"/>
<use href="#cp" x="196" y="226"/>
<use href="#cp" x="256" y="123"/>
<use href="#p" x="262" y="142"/>
<use href="#m" x="234" y="205"/>
<use href="#cm" x="214" y="198"/>
<use href="#p" x="209" y="235"/>
<use href="#cm" x="203" y="153"/>
<use href="#cp" x="228" y="258"/>
<use href="#cm" x="228" y="220"/>
<use href="#cp" x="220" y="222"/>
<use href="#cp" x="246" y="211"/>
<use href="#m" x="210" y="231"/>
<use href="#cp" x="214" y="216"/>
<use href="#cp" x="267" y="96"/>
<use href="#cm" x="310" y="134"/>
<use href="#cm" x="212" y="204"/>
<use href="#cp" x="217" y="195"/>
<use href="#p" x="211" y="216"/>
<use href="#cm" x="209" y="222"/>
<use href="#p" x="200" y="218"/>
<use href="#p" x="315" y="108"/>
<use href="#cp" x="214" y="210"/>
<use href="#p" x="281" y="109"/>
<use href="#cm" x="217" y="225"/>
<use href="#cm" x="279" y="84"/>
<use href="#p" x="307" y="98"/>
<use href="#cp" x="208" y="150"/>
<use href="#p" x="204" y="218"/>
<use href="#cp" x="201" y="219"/>
<use href="#p" x="207" y="148"/>
<use href="#cp" x="212" y="198"/>
<use href="#m" x="280" y="106"/>
<use href="#cp" x="260" y="128"/>
<use href="#cp" x="240" y="156"/>
<use href="#cp" x="226" y="213"/>
<use href="#p" x="175" y="265"/>
<use href="#cp" x="223" y="228"/>
<use href="#m" x="207" y="213"/>
<use href="#cp" x="224" y="203"/>
<use href="#cp" x="221" y="157"/>
<use href="#p" x="205" y="235"/>
<use href="#cp" x="244" y="217"/>
<use href="#cp" x="147" y="264"/>
<use href="#cp" x="227" y="222"/>
<use href="#cp" x="232" y="213"/>
<use href="#cp" x="231" y="146"/>
<use href="#cp" x="214" y="211"/>
<use href="#m" x="247" y="206"/>
</g>
<use href="#cp" x="225" y="237" fill="#ffb400"/>
<use href="#cp" x="198" y="217" fill="#ff9c00"/>
<use href="#cm" x="191" y="227" fill="#ff9c00"/>
<use href="#cm" x="200" y="244" fill="#ff9c00"/>
<use href="#cm" x="211" y="205" fill="#ffb400"/>
<use href="#p" x="237" y="205" fill="#ff9c00"/>
<use href="#cp" x="238" y="198" fill="#ff9c00"/>
<use href="#cp" x="222" y="204" fill="#ff9c00"/>
<use href="#cp" x="209" y="212" fill="#ffb400"/>
<use href="#cp" x="193" y="230" fill="#ffd800"/>
<use href="#p" x="217" y="216" fill="#ff9c00"/>
<use href="#cm" x="214" y="218" fill="#ff9c00"/>
<use href="#cp" x="220" y="224" fill="#ff9c00"/>
<use href="#cp" x="232" y="220" fill="#ffb400"/>
<use href="#p" x="208" y="239" fill="#ff9c00"/>
<use href="#cp" x="225" y="218" fill="#ff9c00"/>
<use href="#m" x="237" y="210" fill="#ff9c00"/>
<use href="#cp" x="194" y="238" fill="#ffb400"/>
<use href="#p" x="218" y="208" fill="#ffb400"/>
<use href="#cp" x="217" y="235" fill="#ffb400"/>
<use href="#cp" x="220" y="238" fill="#ffb400"/>
<use href="#m" x="212" y="223" fill="#ffb400"/>
<use href="#p" x="221" y="214" fill="#ffd800"/>
<use href="#cp" x="211" y="233" fill="#ffd800"/>
<use href="#cp" x="200" y="206" fill="#ff9c00"/>
<use href="#m" x="221" y="234" fill="#ffb400"/>
<use href="#cm" x="205" y="232" fill="#ff9c00"/>
<use href="#cp" x="203" y="208" fill="#ffb400"/>
<use href="#p" x="243" y="212" fill="#ff9c00"/>
<use href="#m" x="235" y="210" fill="#ff9c00"/>
<use href="#cm" x="207" y="208" fill="#ff9c00"/>
<use href="#cp" x="193" y="232" fill="#ff9c00"/>
<use href="#m" x="218" y="203" fill="#ffd800"/>
<use href="#cp" x="201" y="223" fill="#ffd800"/>
<use href="#p" x="225" y="200" fill="#ff9c00"/>
<use href="#p" x="233" y="222" fill="#ffd800"/>
<use href="#m" x="213" y="220" fill="#ffb400"/>
<use href="#cm" x="197" y="235" fill="#ffb400"/>
<use href="#p" x="238" y="210" fill="#ffb400"/>
<use href="#cp" x="227" y="206" fill="#ff9c00"/>
<use href="#m" x="210" y="234" fill="#ff9c00"/>
<use href="#cp" x="245" y="216" fill="#ff9c00"/>
<use href="#p" x="210" y="236" fill="#ffd800"/>
<use href="#cp" x="203" y="216" fill="#ffb400"/>
<use href="#p" x="216" y="230" fill="#ff9c00"/>
<use href="#cp" x="205" y="243" fill="#ffd800"/>
<use href="#cp" x="240" y="202" fill="#ffb400"/>
<use href="#cp" x="226" y="206" fill="#ff9c00"/>
<use href="#cm" x="228" y="237" fill="#ffd800"/>
<use href="#m" x="202" y="207" fill="#ffb400"/>
<use href="#m" x="214" y="203" fill="#ffb400"/>
<use href="#cm" x="232" y="201" fill="#ffd800"/>
<use href="#p" x="195" y="227" fill="#ff9c00"/>
<use href="#m" x="209" y="229" fill="#ffd800"/>
<use href="#cp" x="202" y="207" fill="#ffb400"/>
<use href="#cp" x="266" y="117" fill="#ffb400"/>
<use href="#cm" x="273" y="101" fill="#ff9c00"/>
<use href="#p" x="261" y="116" fill="#ffd800"/>
<use href="#p" x="249" y="117" fill="#ff9c00"/>
<use href="#cm" x="266" y="118" fill="#ffd800"/>
<use href="#p" x="253" y="109" fill="#ffd800"/>
<use href="#cm" x="269" y="107" fill="#ffd800"/>
<use href="#cp" x="271" y="85" fill="#ffb400"/>
<use href="#cp" x="271" y="103" fill="#ffd800"/>
<use href="#p" x="266" y="125" fill="#ffb400"/>
<use href="#cm" x="261" y="115" fill="#ff9c00"/>
<use href="#cm" x="257" y="111" fill="#ffb400"/>
<use href="#p" x="278" y="85" fill="#ff9c00"/>
<use href="#cp" x="264" y="96" fill="#ffd800"/>
<use href="#cp" x="257" y="99" fill="#ffd800"/>
<use href="#cp" x="283" y="102" fill="#ff9c00"/>
<use href="#cp" x="255" y="108" fill="#ff9c00"/>
<use href="#p" x="283" y="98" fill="#ffd800"/>
<use href="#cp" x="238" y="134" fill="#ffd800"/>
<use href="#cp" x="219" y="146" fill="#ffb400"/>
<use href="#cp" x="262" y="138" fill="#ffd800"/>
<use href="#cp" x="229" y="129" fill="#ffd800"/>
<use href="#cm" x="260" y="137" fill="#ffd800"/>
<use href="#cp" x="240" y="131" fill="#ffd800"/>
<use href="#cm" x="259" y="133" fill="#ffb400"/>
<use href="#cm" x="255" y="129" fill="#ffd800"/>
<use href="#p" x="222" y="137" fill="#ffd800"/>
<use href="#cm" x="246" y="133" fill="#ff9c00"/>
<use href="#m" x="253" y="132" fill="#ffd800"/>
<use href="#cp" x="277" y="137" fill="#ff9c00"/>
<use href="#m" x="230" y="139" fill="#ffd800"/>
<use href="#m" x="242" y="130" fill="#ffb400"/>
<g fill="#00e8e8">
<use href="#cp" x="246" y="115"/>
<use href="#p" x="250" y="122"/>
<use href="#p" x="286" y="86"/>
<use href="#m" x="193" y="143"/>
<use href="#p" x="213" y="202"/>
<use href="#m" x="202" y="208"/>
<use href="#m" x="222" y="229"/>
</g>
</g>
<g fill="none" stroke="#20d020" stroke-width="1" stroke-dasharray="4,3">
<path d="M222,112 L243,92 L262,118 L240,130 Z"/>
<path d="M150,215 L176,185 L210,195 L195,232 L165,240 Z"/>
<path d="M145,278 L160,262 L178,275 L166,299 Z"/>
</g>
<path d="M183,54L226,97" stroke="#d8d8d8" stroke-width="1" fill="none" shape-rendering="geometricPrecision"/>
<text x="172.7" y="50" class="cl">F-1677<tspan fill="#ff0000">+</tspan>4</text>
<path d="M225.2,45.5l3,4.5l3,-4.5" fill="none" stroke="#f0f000" stroke-width="1.1" shape-rendering="geometricPrecision"/>
<path d="M132,156L178,201" stroke="#d8d8d8" stroke-width="1" fill="none" shape-rendering="geometricPrecision"/>
<text x="122.5" y="153" class="cl">L-6050<tspan fill="#ff0000">+</tspan>5</text>
<path d="M175.0,153l3.5,-6l3.5,6" fill="none" stroke="#f0f000" stroke-width="1.1" shape-rendering="geometricPrecision"/>
<path d="M103,221L149,266" stroke="#d8d8d8" stroke-width="1" fill="none" shape-rendering="geometricPrecision"/>
<text x="93" y="217.5" class="cl">P-1929<tspan fill="#ff0000">+</tspan>2</text>

<text x="405.5" y="11.0" class="rl" text-anchor="middle">313</text>
<text x="405.5" y="131.0" class="rl" text-anchor="middle">219</text>
<text x="405.5" y="251.0" class="rl" text-anchor="middle">125</text>
<text x="405.5" y="371.5" class="rl" text-anchor="middle">31</text>
</g>

<rect x="7.5" y="757.5" width="246" height="46.5" fill="#000"/>
<rect x="9.5" y="759.5" width="243" height="43" fill="none" stroke="#a0a0a0" stroke-width="1"/>
<g class="lg">
<text x="13" y="771">Symbols</text><text x="53" y="771">-CG</text><text x="77.5" y="771">-IC</text><text x="98.5" y="771">+CG</text><text x="123.5" y="771">+IC</text><text x="153" y="771" textLength="89.5" lengthAdjust="spacingAndGlyphs">Strike age color codes</text>
<text x="13" y="784">Recent</text><text x="13" y="797">Old</text>
<text x="153.5" y="784" fill="#e8c800">15+</text><text x="187.5" y="784" fill="#e8a000">30+</text><text x="222.5" y="784" fill="#e09000">45+</text>
<text x="153.5" y="797" fill="#e07800">60+</text><text x="187.5" y="797" fill="#e06000">75+</text><text x="222.5" y="797" fill="#e04000">90+</text>
</g>
<g fill="#00e8e8"><use href="#cm" x="60" y="780"/><use href="#m" x="85" y="780"/><use href="#cp" x="110" y="780"/><use href="#p" x="135" y="780"/></g>
<g fill="#ffff00"><use href="#cm" x="60" y="793"/><use href="#m" x="85" y="793"/><use href="#cp" x="110" y="793"/><use href="#p" x="135" y="793"/></g>
<rect x="685" y="792" width="121" height="14" fill="#000"/>
<text x="689" y="802.5" class="lg" style="font-size:9.5px" textLength="113" lengthAdjust="spacingAndGlyphs">©2005 Astrogenic Systems</text>

</svg>
<div class="panel" style="top:8px;height:318px"></div>
<div class="panel" style="top:333px;height:113px"></div>
<div class="panel" style="top:453px;height:347px"></div>
<div class="btn bb" style="left:819px;top:16px;width:58px;height:18px;line-height:17.5px;background:#500000;color:#e0d0d0;font-size:12px;border-color:#d0d0d0">STRIKE</div>
<div class="btn bb" style="left:883px;top:16px;width:58px;height:18px;line-height:17.5px;background:#383838;color:#b0b8c0;font-size:12px;border-color:#d0d0d0">NOISE</div>
<div class="btn b" style="left:994px;top:16px;width:128px;height:18px;line-height:17.5px;background:#303030;font-size:13.5px;text-align:left;padding-left:3px;border-color:#d0d0d0">Bng 339°<span class="gr" style="position:absolute;right:3px;top:0">266mi</span></div>
<div class="btn" style="left:821px;top:64px;width:82px;height:16px;line-height:14px;background:#505050;color:#fff;font-size:11.7px;border-color:#b8b8b8">Strikes/min</div>
<div class="btn" style="left:931px;top:64px;width:82px;height:16px;line-height:14px;background:#505050;color:#fff;font-size:11.7px;border-color:#b8b8b8">Close/min</div>
<div class="btn" style="left:1041px;top:64px;width:82px;height:16px;line-height:14px;background:#505050;color:#e0e0e0;font-size:11.7px;border-color:#b8b8b8">Noises/min</div>
<div class="t bb r" style="left:843px;width:60px;top:84px;height:36px;line-height:36px;font-size:29px;color:#fff">8</div>
<div class="t bb r" style="left:953px;width:60px;top:84px;height:36px;line-height:36px;font-size:29px;color:#fff">0</div>
<div class="t bb r" style="left:1063px;width:60px;top:84px;height:36px;line-height:36px;font-size:29px;color:#c0c0c0">1</div>
<div class="t r " style="left:783px;top:130.5px;width:120px;font-size:12.8px">Total Strikes</div>
<div class="t r " style="left:783px;top:148.5px;width:120px;">6156</div>
<div class="t r " style="left:893px;top:130.5px;width:120px;font-size:12.8px">Total Close</div>
<div class="t r " style="left:893px;top:148.5px;width:120px;">0</div>
<div class="t r g" style="left:1003px;top:130.5px;width:120px;font-size:12.8px">Total Noises</div>
<div class="t r g" style="left:1003px;top:148.5px;width:120px;">293</div>
<div class="t g" style="left:821px;top:202.5px;">Lightning type distribution</div>
<div class="hr" style="left:821px;top:217px;width:303px"></div>
<div class="t b" style="left:821px;top:224.5px;">Cloud-ground</div>
<div class="t g" style="left:912px;top:224.5px;">+</div>
<div class="bar" style="left:925px;top:227px"><i style="width:20px;background:#ff0000"></i></div>
<div class="t bb" style="left:979px;top:224.5px;font-size:12px">41%</div>
<div style="position:absolute;left:1016px;top:232px;width:6px;height:2px;background:#c8c8c8"></div>
<div class="bar" style="left:1028px;top:227px"><i style="width:6px;background:#a0d0ff"></i></div>
<div class="t bb" style="left:1082px;top:224.5px;font-size:12px">12%</div>
<div class="t b" style="left:821px;top:248.5px;color:#c8c8c8">Count</div>
<div class="t b" style="left:925px;top:248.5px;">2524</div>
<div class="t b" style="left:1028px;top:248.5px;">734</div>
<div class="t b" style="left:821px;top:278.5px;">Intracloud</div>
<div class="t g" style="left:912px;top:278.5px;">+</div>
<div class="bar" style="left:925px;top:281px"><i style="width:6px;background:#f060b0"></i></div>
<div class="t bb" style="left:979px;top:278.5px;font-size:12px">12%</div>
<div style="position:absolute;left:1016px;top:286px;width:6px;height:2px;background:#c8c8c8"></div>
<div class="bar" style="left:1028px;top:281px"><i style="width:17px;background:#00ee00"></i></div>
<div class="t bb" style="left:1082px;top:278.5px;font-size:12px">35%</div>
<div class="t b" style="left:821px;top:302.5px;color:#c8c8c8">Count</div>
<div class="t b" style="left:925px;top:302.5px;">732</div>
<div class="t b" style="left:1028px;top:302.5px;">2166</div>
<div class="t gr bb" style="left:822px;top:338px;height:20px;line-height:20px;font-size:16px;letter-spacing:.14px">10/24/2025 6:49:16 AM</div>
<div class="hr" style="left:821px;top:358px;width:302px"></div>
<div class="t " style="left:821px;top:376.0px;">Squelch</div>
<div class="t " style="left:909px;top:376.0px;">0</div>
<div class="t " style="left:981px;top:376.0px;">Upload</div>
<div class="t g" style="left:1061px;top:376.0px;">Disabled</div>
<div class="t " style="left:821px;top:396.0px;">Persistence</div>
<div class="t " style="left:909px;top:396.0px;">90 min</div>
<div class="t " style="left:981px;top:396.0px;">Capture</div>
<div class="t gr" style="left:1061px;top:396.0px;">Active</div>
<div class="t " style="left:821px;top:416.0px;">Range</div>
<div class="t " style="left:909px;top:416.0px;">313 mi</div>
<div class="t " style="left:981px;top:416.0px;">Receiver</div>
<div class="t gr" style="left:1061px;top:416.0px;">Enabled</div>
<div class="t g" style="left:821px;top:463.0px;">Uptime</div>
<div class="t " style="left:909px;top:463.0px;">170:19</div>
<div class="t g" style="left:981px;top:463.0px;">Peak time</div>
<div class="t g" style="left:1061px;top:463.0px;">Plot</div>
<div class="t g" style="left:821px;top:486.0px;">Peak rate</div>
<div class="t " style="left:909px;top:486.0px;">39/min</div>
<div class="t " style="left:981px;top:486.0px;">3:14 AM</div>
<div class="t " style="left:1061px;top:486.0px;">Strike</div>
<div class="t g" style="left:822px;top:516.0px;">Trend graph</div>
<div class="t " style="left:908px;top:516.0px;">60 min</div>
<svg id="gsvg" viewBox="0 0 1138 812" shape-rendering="crispEdges">
<polyline points="822.5,761.8 824.7,761.8 826.9,769.7 829.1,761.8 831.4,754.0 833.6,761.8 835.8,746.1 838.0,769.7 840.2,761.8 842.5,769.7 844.7,769.7 846.9,761.8 849.1,761.8 851.3,761.8 853.5,754.0 855.8,738.3 858.0,754.0 860.2,777.5 862.4,754.0 864.6,761.8 866.8,761.8 869.0,746.1 871.3,754.0 873.5,769.7 875.7,754.0 877.9,754.0 880.1,769.7 882.4,761.8 884.6,761.8 886.8,761.8 889.0,761.8 891.2,761.8 893.4,746.1 895.6,769.7 897.9,769.7 900.1,761.8 902.3,754.0 904.5,769.7 906.7,746.1 909.0,777.5 911.2,769.7 913.4,761.8 915.6,769.7 917.8,769.7 920.0,761.8 922.2,754.0 924.5,761.8 926.7,769.7 928.9,754.0 931.1,761.8 933.3,761.8 935.5,754.0 937.8,769.7 940.0,761.8 942.2,754.0 944.4,761.8 946.6,769.7 948.9,761.8 951.1,769.7 953.3,769.7 955.5,769.7 957.7,754.0 959.9,769.7 962.1,754.0 964.4,754.0 966.6,761.8 968.8,754.0 971.0,754.0 973.2,754.0 975.5,769.7 977.7,754.0 979.9,746.1 982.1,754.0 984.3,746.1 986.5,746.1 988.8,754.0 991.0,738.3 993.2,769.7 995.4,761.8 997.6,777.5 999.8,754.0 1002.0,761.8 1004.3,746.1 1006.5,769.7 1008.7,777.5 1010.9,754.0 1013.1,777.5 1015.4,777.5 1017.6,761.8 1019.8,754.0 1022.0,769.7 1024.2,761.8 1026.4,777.5 1028.7,746.1 1030.9,761.8 1033.1,761.8 1035.3,754.0 1037.5,761.8 1039.7,761.8 1042.0,769.7 1044.2,761.8 1046.4,761.8 1048.6,754.0 1050.8,761.8 1053.0,761.8 1055.2,761.8 1057.5,761.8 1059.7,761.8 1061.9,769.7 1064.1,769.7 1066.3,754.0 1068.5,761.8 1070.8,761.8 1073.0,730.5 1075.2,754.0 1077.4,754.0 1079.6,761.8 1081.8,769.7 1084.1,754.0 1086.3,761.8 1088.5,761.8" stroke="#8cc8f8"/>
<polyline points="822.5,730.5 824.7,722.6 826.9,754.0 829.1,746.1 831.4,761.8 833.6,761.8 835.8,738.3 838.0,754.0 840.2,754.0 842.5,746.1 844.7,746.1 846.9,754.0 849.1,754.0 851.3,769.7 853.5,761.8 855.8,761.8 858.0,769.7 860.2,777.5 862.4,777.5 864.6,761.8 866.8,761.8 869.0,761.8 871.3,754.0 873.5,769.7 875.7,761.8 877.9,754.0 880.1,746.1 882.4,761.8 884.6,761.8 886.8,777.5 889.0,761.8 891.2,777.5 893.4,769.7 895.6,738.3 897.9,777.5 900.1,738.3 902.3,746.1 904.5,754.0 906.7,746.1 909.0,746.1 911.2,738.3 913.4,754.0 915.6,761.8 917.8,761.8 920.0,761.8 922.2,754.0 924.5,761.8 926.7,746.1 928.9,777.5 931.1,769.7 933.3,769.7 935.5,777.5 937.8,738.3 940.0,777.5 942.2,761.8 944.4,761.8 946.6,738.3 948.9,777.5 951.1,746.1 953.3,761.8 955.5,761.8 957.7,761.8 959.9,754.0 962.1,769.7 964.4,761.8 966.6,754.0 968.8,738.3 971.0,777.5 973.2,738.3 975.5,746.1 977.7,761.8 979.9,754.0 982.1,761.8 984.3,738.3 986.5,746.1 988.8,754.0 991.0,754.0 993.2,754.0 995.4,746.1 997.6,754.0 999.8,722.6 1002.0,769.7 1004.3,777.5 1006.5,746.1 1008.7,754.0 1010.9,746.1 1013.1,754.0 1015.4,754.0 1017.6,746.1 1019.8,746.1 1022.0,761.8 1024.2,761.8 1026.4,738.3 1028.7,754.0 1030.9,769.7 1033.1,730.5 1035.3,746.1 1037.5,761.8 1039.7,769.7 1042.0,754.0 1044.2,769.7 1046.4,769.7 1048.6,769.7 1050.8,761.8 1053.0,746.1 1055.2,761.8 1057.5,769.7 1059.7,746.1 1061.9,754.0 1064.1,746.1 1066.3,746.1 1068.5,761.8 1070.8,761.8 1073.0,754.0 1075.2,769.7 1077.4,746.1 1079.6,738.3 1081.8,754.0 1084.1,761.8 1086.3,761.8 1088.5,761.8" stroke="#f060b0"/>
<polyline points="822.5,730.5 824.7,730.5 826.9,754.0 829.1,769.7 831.4,777.5 833.6,761.8 835.8,769.7 838.0,769.7 840.2,746.1 842.5,746.1 844.7,738.3 846.9,761.8 849.1,746.1 851.3,754.0 853.5,769.7 855.8,738.3 858.0,746.1 860.2,714.8 862.4,746.1 864.6,754.0 866.8,730.5 869.0,746.1 871.3,738.3 873.5,754.0 875.7,746.1 877.9,738.3 880.1,738.3 882.4,746.1 884.6,761.8 886.8,738.3 889.0,746.1 891.2,730.5 893.4,738.3 895.6,722.6 897.9,738.3 900.1,738.3 902.3,730.5 904.5,754.0 906.7,746.1 909.0,746.1 911.2,714.8 913.4,746.1 915.6,738.3 917.8,738.3 920.0,746.1 922.2,769.7 924.5,738.3 926.7,754.0 928.9,738.3 931.1,769.7 933.3,754.0 935.5,730.5 937.8,714.8 940.0,746.1 942.2,738.3 944.4,714.8 946.6,699.1 948.9,699.1 951.1,691.3 953.3,714.8 955.5,706.9 957.7,706.9 959.9,730.5 962.1,754.0 964.4,754.0 966.6,738.3 968.8,769.7 971.0,754.0 973.2,761.8 975.5,746.1 977.7,738.3 979.9,730.5 982.1,706.9 984.3,714.8 986.5,691.3 988.8,714.8 991.0,730.5 993.2,722.6 995.4,769.7 997.6,738.3 999.8,746.1 1002.0,761.8 1004.3,746.1 1006.5,754.0 1008.7,777.5 1010.9,754.0 1013.1,761.8 1015.4,754.0 1017.6,754.0 1019.8,730.5 1022.0,746.1 1024.2,746.1 1026.4,746.1 1028.7,769.7 1030.9,730.5 1033.1,761.8 1035.3,746.1 1037.5,761.8 1039.7,761.8 1042.0,754.0 1044.2,722.6 1046.4,738.3 1048.6,754.0 1050.8,754.0 1053.0,761.8 1055.2,746.1 1057.5,754.0 1059.7,738.3 1061.9,769.7 1064.1,754.0 1066.3,754.0 1068.5,746.1 1070.8,714.8 1073.0,714.8 1075.2,722.6 1077.4,722.6 1079.6,730.5 1081.8,769.7 1084.1,738.3 1086.3,769.7 1088.5,754.0" stroke="#f00018"/>
<polyline points="822.5,706.9 824.7,754.0 826.9,730.5 829.1,730.5 831.4,714.8 833.6,746.1 835.8,722.6 838.0,738.3 840.2,746.1 842.5,746.1 844.7,746.1 846.9,746.1 849.1,754.0 851.3,738.3 853.5,746.1 855.8,777.5 858.0,714.8 860.2,738.3 862.4,738.3 864.6,730.5 866.8,730.5 869.0,738.3 871.3,754.0 873.5,738.3 875.7,769.7 877.9,722.6 880.1,761.8 882.4,746.1 884.6,746.1 886.8,738.3 889.0,746.1 891.2,738.3 893.4,777.5 895.6,746.1 897.9,746.1 900.1,754.0 902.3,722.6 904.5,761.8 906.7,746.1 909.0,777.5 911.2,738.3 913.4,769.7 915.6,769.7 917.8,706.9 920.0,738.3 922.2,746.1 924.5,746.1 926.7,769.7 928.9,761.8 931.1,738.3 933.3,777.5 935.5,738.3 937.8,769.7 940.0,746.1 942.2,754.0 944.4,699.1 946.6,706.9 948.9,722.6 951.1,738.3 953.3,730.5 955.5,730.5 957.7,746.1 959.9,738.3 962.1,730.5 964.4,746.1 966.6,754.0 968.8,730.5 971.0,754.0 973.2,730.5 975.5,754.0 977.7,722.6 979.9,746.1 982.1,754.0 984.3,738.3 986.5,738.3 988.8,738.3 991.0,722.6 993.2,706.9 995.4,746.1 997.6,722.6 999.8,722.6 1002.0,730.5 1004.3,714.8 1006.5,746.1 1008.7,722.6 1010.9,738.3 1013.1,730.5 1015.4,730.5 1017.6,730.5 1019.8,730.5 1022.0,714.8 1024.2,691.3 1026.4,714.8 1028.7,714.8 1030.9,722.6 1033.1,738.3 1035.3,730.5 1037.5,706.9 1039.7,761.8 1042.0,730.5 1044.2,730.5 1046.4,738.3 1048.6,730.5 1050.8,722.6 1053.0,714.8 1055.2,722.6 1057.5,722.6 1059.7,738.3 1061.9,730.5 1064.1,746.1 1066.3,738.3 1068.5,754.0 1070.8,738.3 1073.0,722.6 1075.2,746.1 1077.4,730.5 1079.6,722.6 1081.8,722.6 1084.1,706.9 1086.3,722.6 1088.5,754.0" stroke="#00e020"/>
<polyline points="822.4,676.4 824.2,706.9 826.0,692.5 827.8,710.5 829.6,678.2 832.4,644.0 835.0,671.0 837.5,658.4 839.6,688.9 842.1,724.9 843.9,737.5 845.7,706.9 848.3,690.7 850.4,692.5 852.9,721.3 855.4,721.3 857.6,667.4 860.1,635.0 861.9,674.6 864.8,635.0 867.3,678.2 869.8,663.8 872.0,699.7 874.1,656.6 876.3,604.5 878.8,627.8 881.0,671.0 883.5,696.1 886.4,699.7 888.9,690.7 891.4,703.3 893.5,721.3 896.1,678.2 897.9,653.0 900.7,644.0 903.3,674.6 905.8,685.3 908.6,721.3 911.2,728.5 914.0,671.0 916.6,674.6 919.4,688.9 922.3,656.6 924.8,635.0 927.3,656.6 930.2,692.5 933.1,676.4 935.6,692.5 938.1,730.3 941.0,692.5 942.8,651.2 945.3,644.0 948.2,678.2 950.0,635.0 951.8,588.3 953.6,638.6 955.4,678.2 957.2,739.3 959.0,699.7 960.8,674.6 963.3,688.9 966.2,667.4 968.7,692.5 971.6,663.8 973.3,620.6 975.9,620.6 977.7,671.0 980.5,642.2 983.1,699.7 985.9,663.8 988.4,645.8 991.3,653.0 993.8,620.6 995.6,604.5 997.8,660.2 1000.3,597.3 1002.1,627.8 1005.0,656.6 1007.9,674.6 1011.1,645.8 1013.6,620.6 1016.5,642.2 1019.4,627.8 1021.9,645.8 1024.4,588.3 1026.5,645.8 1029.1,638.6 1031.6,678.2 1034.5,663.8 1038.1,627.8 1040.9,681.8 1043.4,663.8 1046.0,635.0 1048.8,663.8 1051.7,692.5 1054.2,706.9 1056.7,644.0 1059.6,681.8 1062.5,685.3 1065.0,710.5 1067.5,721.3 1070.4,692.5 1072.9,653.0 1074.7,674.6 1076.9,775.2 1079.4,699.7 1081.9,671.0 1083.3,635.0 1085.5,649.4 1087.7,721.3 1088.4,714.1" stroke="#ffffff"/>
<path d="M1088.5,542.5V777.5H822.5" fill="none" stroke="#d0d0d0"/>
<path d="M1086,777.5H1089 M1086,738.5H1089 M1086,699.5H1089 M1086,660.5H1089 M1086,621.5H1089 M1086,582.5H1089 M1086,542.5H1089 M822.5,777.5V780 M866.5,777.5V780 M911.5,777.5V780 M955.5,777.5V780 M999.5,777.5V780 M1044.5,777.5V780 M1088.5,777.5V780" fill="none" stroke="#d0d0d0"/>
<text x="1091" y="547.0">30</text>
<text x="1091" y="625.0">20</text>
<text x="1091" y="704.0">10</text>
<text x="826.5" y="793" text-anchor="middle">60</text>
<text x="870.83" y="793" text-anchor="middle">50</text>
<text x="915.16" y="793" text-anchor="middle">40</text>
<text x="959.49" y="793" text-anchor="middle">30</text>
<text x="1003.8199999999999" y="793" text-anchor="middle">20</text>
<text x="1048.15" y="793" text-anchor="middle">10</text>
<text x="1088" y="793">0</text><text x="1101" y="793">min</text>
</svg>
</body></html>
